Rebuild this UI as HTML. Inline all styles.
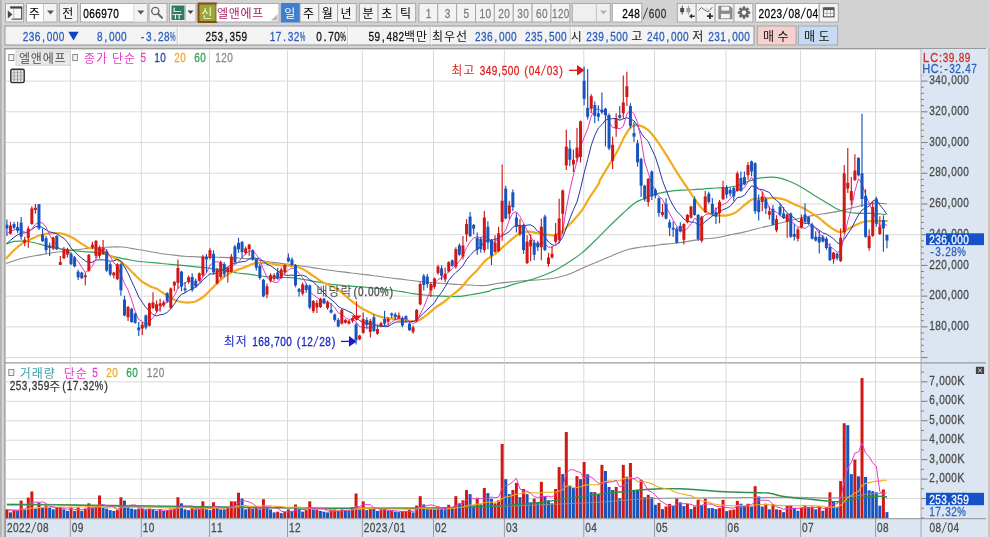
<!DOCTYPE html>
<html lang="ko"><head><meta charset="utf-8"><title>066970 chart</title>
<style>
html,body{margin:0;padding:0;background:#d2d2d2;overflow:hidden}
body{width:990px;height:537px;font-family:"Liberation Sans",sans-serif}
svg{display:block;filter:blur(0.5px);font-family:"Liberation Sans",sans-serif}
text{white-space:pre}
.k{font-family:"Liberation Sans","Noto Sans CJK KR",sans-serif;font-size:12px}
</style></head><body>
<svg width="990" height="537" viewBox="0 0 990 537">
<clipPath id="cp"><rect x="5.5" y="49" width="915.5" height="313.2"/></clipPath>
<rect x="0.00" y="0.00" width="990.00" height="537.00" fill="#d2d2d2"/>
<rect x="0.00" y="0.00" width="1.40" height="537.00" fill="#b2b2b2"/>
<rect x="5.50" y="3.50" width="18.00" height="18.50" fill="#f3f3f3" stroke="#a9a9a9" stroke-width="1"/>
<path d="M10.5 7.2h11.2v12h-10" fill="#f8f8f8" stroke="#555" stroke-width="1.3"/><path d="M10.2 7.6h11.8" stroke="#444" stroke-width="2"/><path d="M13.6 9v9.5" stroke="#c8c8c8" stroke-width="1.2"/><path d="M7.8 10.6l4.6 3.9l-4.6 3.9z" fill="#444"/>
<rect x="26.50" y="3.50" width="30.50" height="18.50" fill="#f3f3f3" stroke="#a9a9a9" stroke-width="1"/>
<rect x="27.00" y="4.00" width="16.00" height="17.50" fill="#ffffff"/>
<line x1="43.50" y1="4.00" x2="43.50" y2="21.50" stroke="#c8c8c8" stroke-width="1"/>
<text class="k" x="28.67" y="18.00" fill="#000">주</text>
<path d="M47 10.5h7l-3.5 4z" fill="#555"/>
<rect x="59.50" y="3.50" width="18.00" height="18.50" fill="#f3f3f3" stroke="#a9a9a9" stroke-width="1"/>
<text class="k" x="62.17" y="18.00" fill="#000">전</text>
<rect x="80.50" y="3.50" width="66.50" height="18.50" fill="#ffffff" stroke="#a9a9a9" stroke-width="1"/>
<text transform="translate(83.20,0) scale(0.751,1)" x="0" y="17.70" font-size="13.40" fill="#000" stroke="#000" stroke-width="0.3">0</text>
<text transform="translate(89.20,0) scale(0.751,1)" x="0" y="17.70" font-size="13.40" fill="#000" stroke="#000" stroke-width="0.3">6</text>
<text transform="translate(95.20,0) scale(0.751,1)" x="0" y="17.70" font-size="13.40" fill="#000" stroke="#000" stroke-width="0.3">6</text>
<text transform="translate(101.20,0) scale(0.751,1)" x="0" y="17.70" font-size="13.40" fill="#000" stroke="#000" stroke-width="0.3">9</text>
<text transform="translate(107.20,0) scale(0.751,1)" x="0" y="17.70" font-size="13.40" fill="#000" stroke="#000" stroke-width="0.3">7</text>
<text transform="translate(113.20,0) scale(0.751,1)" x="0" y="17.70" font-size="13.40" fill="#000" stroke="#000" stroke-width="0.3">0</text>
<line x1="134.00" y1="4.00" x2="134.00" y2="21.50" stroke="#c8c8c8" stroke-width="1"/>
<rect x="134.50" y="4.00" width="12.50" height="17.50" fill="#f3f3f3"/>
<path d="M137.3 10.5h7l-3.5 4z" fill="#555"/>
<rect x="149.00" y="3.50" width="18.00" height="18.50" fill="#f3f3f3" stroke="#a9a9a9" stroke-width="1"/>
<circle cx="155.3" cy="11" r="3.6" fill="none" stroke="#666" stroke-width="1.4"/><path d="M158 13.8l4 4" stroke="#666" stroke-width="2" stroke-linecap="round"/>
<rect x="169.50" y="3.50" width="26.50" height="18.50" fill="#f3f3f3" stroke="#a9a9a9" stroke-width="1"/>
<rect x="171.50" y="5.50" width="13.00" height="14.50" fill="#2f7d5d"/>
<text class="k" x="171.67" y="18.00" fill="#ffffff">뉴</text>
<line x1="185.50" y1="4.00" x2="185.50" y2="21.50" stroke="#c8c8c8" stroke-width="1"/>
<path d="M187.5 10.5h6l-3 3.5z" fill="#444"/>
<rect x="198.50" y="3.50" width="18.00" height="18.50" fill="#9aa63a" stroke="#8a4a12" stroke-width="2"/>
<text class="k" x="201.17" y="18.00" fill="#f4f6d8">신</text>
<rect x="217.00" y="3.50" width="62.00" height="18.50" fill="#ffffff" stroke="#a9a9a9" stroke-width="1"/>
<rect x="216.50" y="4.50" width="2.00" height="16.50" fill="#ffffff"/>
<text class="k" x="216.97 228.77 240.57 252.37" y="18.00" fill="#a01d62">엘앤에프</text>
<path d="M277.5 14v6.5h-6.5z" fill="#b8b8b8"/>
<rect x="281.30" y="3.50" width="18.75" height="18.50" fill="#3f7fcf" stroke="#3f7fcf" stroke-width="1"/>
<text class="k" x="284.37" y="18.00" fill="#ffffff">일</text>
<rect x="300.05" y="3.50" width="18.75" height="18.50" fill="#f3f3f3" stroke="#a9a9a9" stroke-width="1"/>
<text class="k" x="303.12" y="18.00" fill="#000">주</text>
<rect x="318.80" y="3.50" width="18.75" height="18.50" fill="#f3f3f3" stroke="#a9a9a9" stroke-width="1"/>
<text class="k" x="321.87" y="18.00" fill="#000">월</text>
<rect x="337.55" y="3.50" width="18.75" height="18.50" fill="#f3f3f3" stroke="#a9a9a9" stroke-width="1"/>
<text class="k" x="340.62" y="18.00" fill="#000">년</text>
<rect x="359.40" y="3.50" width="18.75" height="18.50" fill="#f3f3f3" stroke="#a9a9a9" stroke-width="1"/>
<text class="k" x="362.47" y="18.00" fill="#000">분</text>
<rect x="378.15" y="3.50" width="18.75" height="18.50" fill="#f3f3f3" stroke="#a9a9a9" stroke-width="1"/>
<text class="k" x="381.22" y="18.00" fill="#000">초</text>
<rect x="396.90" y="3.50" width="18.75" height="18.50" fill="#f3f3f3" stroke="#a9a9a9" stroke-width="1"/>
<text class="k" x="399.97" y="18.00" fill="#000">틱</text>
<rect x="418.90" y="3.50" width="18.87" height="18.50" fill="#f3f3f3" stroke="#a9a9a9" stroke-width="1"/>
<text transform="translate(425.83,0) scale(0.751,1)" x="0" y="17.70" font-size="13.40" fill="#7d7d7d" stroke="#7d7d7d" stroke-width="0.3">1</text>
<rect x="437.77" y="3.50" width="18.87" height="18.50" fill="#f3f3f3" stroke="#a9a9a9" stroke-width="1"/>
<text transform="translate(444.70,0) scale(0.751,1)" x="0" y="17.70" font-size="13.40" fill="#7d7d7d" stroke="#7d7d7d" stroke-width="0.3">3</text>
<rect x="456.64" y="3.50" width="18.87" height="18.50" fill="#f3f3f3" stroke="#a9a9a9" stroke-width="1"/>
<text transform="translate(463.57,0) scale(0.751,1)" x="0" y="17.70" font-size="13.40" fill="#7d7d7d" stroke="#7d7d7d" stroke-width="0.3">5</text>
<rect x="475.51" y="3.50" width="18.87" height="18.50" fill="#f3f3f3" stroke="#a9a9a9" stroke-width="1"/>
<text transform="translate(479.44,0) scale(0.751,1)" x="0" y="17.70" font-size="13.40" fill="#7d7d7d" stroke="#7d7d7d" stroke-width="0.3">1</text>
<text transform="translate(485.44,0) scale(0.751,1)" x="0" y="17.70" font-size="13.40" fill="#7d7d7d" stroke="#7d7d7d" stroke-width="0.3">0</text>
<rect x="494.38" y="3.50" width="18.87" height="18.50" fill="#f3f3f3" stroke="#a9a9a9" stroke-width="1"/>
<text transform="translate(498.31,0) scale(0.751,1)" x="0" y="17.70" font-size="13.40" fill="#7d7d7d" stroke="#7d7d7d" stroke-width="0.3">2</text>
<text transform="translate(504.31,0) scale(0.751,1)" x="0" y="17.70" font-size="13.40" fill="#7d7d7d" stroke="#7d7d7d" stroke-width="0.3">0</text>
<rect x="513.25" y="3.50" width="18.87" height="18.50" fill="#f3f3f3" stroke="#a9a9a9" stroke-width="1"/>
<text transform="translate(517.18,0) scale(0.751,1)" x="0" y="17.70" font-size="13.40" fill="#7d7d7d" stroke="#7d7d7d" stroke-width="0.3">3</text>
<text transform="translate(523.18,0) scale(0.751,1)" x="0" y="17.70" font-size="13.40" fill="#7d7d7d" stroke="#7d7d7d" stroke-width="0.3">0</text>
<rect x="532.12" y="3.50" width="18.87" height="18.50" fill="#f3f3f3" stroke="#a9a9a9" stroke-width="1"/>
<text transform="translate(536.05,0) scale(0.751,1)" x="0" y="17.70" font-size="13.40" fill="#7d7d7d" stroke="#7d7d7d" stroke-width="0.3">6</text>
<text transform="translate(542.05,0) scale(0.751,1)" x="0" y="17.70" font-size="13.40" fill="#7d7d7d" stroke="#7d7d7d" stroke-width="0.3">0</text>
<rect x="550.99" y="3.50" width="18.87" height="18.50" fill="#f3f3f3" stroke="#a9a9a9" stroke-width="1"/>
<text transform="translate(552.07,0) scale(0.738,1)" x="0" y="17.70" font-size="13.40" fill="#7d7d7d" stroke="#7d7d7d" stroke-width="0.3">1</text>
<text transform="translate(557.97,0) scale(0.738,1)" x="0" y="17.70" font-size="13.40" fill="#7d7d7d" stroke="#7d7d7d" stroke-width="0.3">2</text>
<text transform="translate(563.87,0) scale(0.738,1)" x="0" y="17.70" font-size="13.40" fill="#7d7d7d" stroke="#7d7d7d" stroke-width="0.3">0</text>
<rect x="572.30" y="3.50" width="38.00" height="18.50" fill="#efefef" stroke="#a9a9a9" stroke-width="1"/>
<line x1="596.30" y1="4.00" x2="596.30" y2="21.50" stroke="#c0c0c0" stroke-width="1"/>
<path d="M600 10.5h7l-3.5 4z" fill="#b4b4b4"/>
<rect x="612.30" y="3.50" width="29.50" height="18.50" fill="#ffffff" stroke="#a9a9a9" stroke-width="1"/>
<text transform="translate(622.20,0) scale(0.751,1)" x="0" y="17.70" font-size="13.40" fill="#000" stroke="#000" stroke-width="0.3">2</text>
<text transform="translate(628.20,0) scale(0.751,1)" x="0" y="17.70" font-size="13.40" fill="#000" stroke="#000" stroke-width="0.3">4</text>
<text transform="translate(634.20,0) scale(0.751,1)" x="0" y="17.70" font-size="13.40" fill="#000" stroke="#000" stroke-width="0.3">8</text>
<path d="M643.20 18.90L647.60 7.70" stroke="#333" stroke-width="0.95" fill="none"/>
<text transform="translate(648.70,0) scale(0.751,1)" x="0" y="17.70" font-size="13.40" fill="#333" stroke="#333" stroke-width="0.3">6</text>
<text transform="translate(654.70,0) scale(0.751,1)" x="0" y="17.70" font-size="13.40" fill="#333" stroke="#333" stroke-width="0.3">0</text>
<text transform="translate(660.70,0) scale(0.751,1)" x="0" y="17.70" font-size="13.40" fill="#333" stroke="#333" stroke-width="0.3">0</text>
<rect x="677.30" y="3.50" width="18.90" height="18.50" fill="#f3f3f3" stroke="#a9a9a9" stroke-width="1"/>
<rect x="696.20" y="3.50" width="18.90" height="18.50" fill="#f3f3f3" stroke="#a9a9a9" stroke-width="1"/>
<rect x="715.10" y="3.50" width="18.90" height="18.50" fill="#f3f3f3" stroke="#a9a9a9" stroke-width="1"/>
<rect x="734.00" y="3.50" width="18.90" height="18.50" fill="#f3f3f3" stroke="#a9a9a9" stroke-width="1"/>
<g stroke="none"><rect x="680.2" y="8" width="3.9" height="4.2" fill="#4a4a4a"/><rect x="681.7" y="5.6" width="1" height="9" fill="#4a4a4a"/><rect x="686.4" y="8" width="4" height="4.2" fill="#9c9c9c"/><rect x="687.9" y="5.6" width="1" height="9" fill="#9c9c9c"/><path d="M689 16.2l3.1-2.5v1.7h2.6v1.6h-2.6v1.7z" fill="#333"/></g>
<path d="M698.6 10.6L701.3 7.6L708 12L712.3 7.2" fill="none" stroke="#6a6a6a" stroke-width="1"/><path d="M705.8 7.8L711 12" fill="none" stroke="#c4c4c4" stroke-width="0.9"/><path d="M707 16.1h6M710 13.2v5.8" stroke="#333" stroke-width="1.9"/>
<g><path d="M718.3 5.7h11.4l2.8 2.6v10.9h-14.2z" fill="#8b8b8b"/><rect x="721.4" y="6.6" width="7.8" height="4" fill="#f4f4f4"/><rect x="721" y="13.9" width="8.8" height="4.4" fill="#f4f4f4"/></g>
<g fill="#666"><rect x="-1.35" y="-6.2" width="2.7" height="3" transform="translate(744.00,12.60) rotate(0.0)"/><rect x="-1.35" y="-6.2" width="2.7" height="3" transform="translate(744.00,12.60) rotate(45.0)"/><rect x="-1.35" y="-6.2" width="2.7" height="3" transform="translate(744.00,12.60) rotate(90.0)"/><rect x="-1.35" y="-6.2" width="2.7" height="3" transform="translate(744.00,12.60) rotate(135.0)"/><rect x="-1.35" y="-6.2" width="2.7" height="3" transform="translate(744.00,12.60) rotate(180.0)"/><rect x="-1.35" y="-6.2" width="2.7" height="3" transform="translate(744.00,12.60) rotate(225.0)"/><rect x="-1.35" y="-6.2" width="2.7" height="3" transform="translate(744.00,12.60) rotate(270.0)"/><rect x="-1.35" y="-6.2" width="2.7" height="3" transform="translate(744.00,12.60) rotate(315.0)"/><circle cx="744.00" cy="12.60" r="4.4"/></g><circle cx="744.00" cy="12.60" r="2.3" fill="#f4f4f4"/>
<rect x="755.60" y="3.50" width="63.50" height="18.50" fill="#ffffff" stroke="#a9a9a9" stroke-width="1"/>
<text transform="translate(758.50,0) scale(0.751,1)" x="0" y="17.70" font-size="13.40" fill="#000" stroke="#000" stroke-width="0.3">2</text>
<text transform="translate(764.50,0) scale(0.751,1)" x="0" y="17.70" font-size="13.40" fill="#000" stroke="#000" stroke-width="0.3">0</text>
<text transform="translate(770.50,0) scale(0.751,1)" x="0" y="17.70" font-size="13.40" fill="#000" stroke="#000" stroke-width="0.3">2</text>
<text transform="translate(776.50,0) scale(0.751,1)" x="0" y="17.70" font-size="13.40" fill="#000" stroke="#000" stroke-width="0.3">3</text>
<path d="M783.00 18.90L787.40 7.70" stroke="#000" stroke-width="0.95" fill="none"/>
<text transform="translate(788.50,0) scale(0.751,1)" x="0" y="17.70" font-size="13.40" fill="#000" stroke="#000" stroke-width="0.3">0</text>
<text transform="translate(794.50,0) scale(0.751,1)" x="0" y="17.70" font-size="13.40" fill="#000" stroke="#000" stroke-width="0.3">8</text>
<path d="M801.00 18.90L805.40 7.70" stroke="#000" stroke-width="0.95" fill="none"/>
<text transform="translate(806.50,0) scale(0.751,1)" x="0" y="17.70" font-size="13.40" fill="#000" stroke="#000" stroke-width="0.3">0</text>
<text transform="translate(812.50,0) scale(0.751,1)" x="0" y="17.70" font-size="13.40" fill="#000" stroke="#000" stroke-width="0.3">4</text>
<rect x="819.30" y="3.50" width="19.00" height="18.50" fill="#f3f3f3" stroke="#a9a9a9" stroke-width="1"/>
<g><rect x="823.5" y="8" width="10.5" height="8.8" fill="#fff" stroke="#555" stroke-width="1.2"/><rect x="823.5" y="7.5" width="10.5" height="2.6" fill="#555"/><path d="M827 10v7M830.5 10v7M823.5 13.3h10.5" stroke="#999" stroke-width="0.8"/></g>
<rect x="4.90" y="26.00" width="749.10" height="19.00" fill="#f3f3f3" stroke="#a2a2a2" stroke-width="1.2"/>
<line x1="177.30" y1="26.50" x2="177.30" y2="44.50" stroke="#c2c2c2" stroke-width="1"/>
<line x1="178.30" y1="26.50" x2="178.30" y2="44.50" stroke="#ffffff" stroke-width="1"/>
<line x1="347.80" y1="26.50" x2="347.80" y2="44.50" stroke="#c2c2c2" stroke-width="1"/>
<line x1="348.80" y1="26.50" x2="348.80" y2="44.50" stroke="#ffffff" stroke-width="1"/>
<line x1="430.30" y1="26.50" x2="430.30" y2="44.50" stroke="#c2c2c2" stroke-width="1"/>
<line x1="431.30" y1="26.50" x2="431.30" y2="44.50" stroke="#ffffff" stroke-width="1"/>
<line x1="570.30" y1="26.50" x2="570.30" y2="44.50" stroke="#c2c2c2" stroke-width="1"/>
<line x1="571.30" y1="26.50" x2="571.30" y2="44.50" stroke="#ffffff" stroke-width="1"/>
<text transform="translate(22.70,0) scale(0.751,1)" x="0" y="40.80" font-size="13.40" fill="#2c5cbc" stroke="#2c5cbc" stroke-width="0.3">2</text>
<text transform="translate(28.70,0) scale(0.751,1)" x="0" y="40.80" font-size="13.40" fill="#2c5cbc" stroke="#2c5cbc" stroke-width="0.3">3</text>
<text transform="translate(34.70,0) scale(0.751,1)" x="0" y="40.80" font-size="13.40" fill="#2c5cbc" stroke="#2c5cbc" stroke-width="0.3">6</text>
<text transform="translate(46.70,0) scale(0.751,1)" x="0" y="40.80" font-size="13.40" fill="#2c5cbc" stroke="#2c5cbc" stroke-width="0.3">0</text>
<text transform="translate(52.70,0) scale(0.751,1)" x="0" y="40.80" font-size="13.40" fill="#2c5cbc" stroke="#2c5cbc" stroke-width="0.3">0</text>
<text transform="translate(58.70,0) scale(0.751,1)" x="0" y="40.80" font-size="13.40" fill="#2c5cbc" stroke="#2c5cbc" stroke-width="0.3">0</text>
<text transform="scale(0.815,1)" x="51.51" y="40.80" font-size="13.40" fill="#2c5cbc" stroke="#2c5cbc" stroke-width="0.3">,</text>
<path d="M68.3 31.8h10.4l-5.2 8.6z" fill="#1142c4"/>
<text transform="translate(97.00,0) scale(0.751,1)" x="0" y="40.80" font-size="13.40" fill="#2c5cbc" stroke="#2c5cbc" stroke-width="0.3">8</text>
<text transform="translate(109.00,0) scale(0.751,1)" x="0" y="40.80" font-size="13.40" fill="#2c5cbc" stroke="#2c5cbc" stroke-width="0.3">0</text>
<text transform="translate(115.00,0) scale(0.751,1)" x="0" y="40.80" font-size="13.40" fill="#2c5cbc" stroke="#2c5cbc" stroke-width="0.3">0</text>
<text transform="translate(121.00,0) scale(0.751,1)" x="0" y="40.80" font-size="13.40" fill="#2c5cbc" stroke="#2c5cbc" stroke-width="0.3">0</text>
<text transform="scale(0.815,1)" x="127.95" y="40.80" font-size="13.40" fill="#2c5cbc" stroke="#2c5cbc" stroke-width="0.3">,</text>
<text transform="translate(145.90,0) scale(0.751,1)" x="0" y="40.80" font-size="13.40" fill="#2c5cbc" stroke="#2c5cbc" stroke-width="0.3">3</text>
<text transform="translate(157.90,0) scale(0.751,1)" x="0" y="40.80" font-size="13.40" fill="#2c5cbc" stroke="#2c5cbc" stroke-width="0.3">2</text>
<text transform="translate(163.90,0) scale(0.751,1)" x="0" y="40.80" font-size="13.40" fill="#2c5cbc" stroke="#2c5cbc" stroke-width="0.3">8</text>
<text transform="translate(169.90,0) scale(0.470,1)" x="0" y="40.80" font-size="13.40" fill="#2c5cbc" stroke="#2c5cbc" stroke-width="0.3">%</text>
<text transform="scale(0.815,1)" x="172.86 187.95" y="40.80" font-size="13.40" fill="#2c5cbc" stroke="#2c5cbc" stroke-width="0.3">-.</text>
<text transform="translate(205.50,0) scale(0.751,1)" x="0" y="40.80" font-size="13.40" fill="#111" stroke="#111" stroke-width="0.3">2</text>
<text transform="translate(211.50,0) scale(0.751,1)" x="0" y="40.80" font-size="13.40" fill="#111" stroke="#111" stroke-width="0.3">5</text>
<text transform="translate(217.50,0) scale(0.751,1)" x="0" y="40.80" font-size="13.40" fill="#111" stroke="#111" stroke-width="0.3">3</text>
<text transform="translate(229.50,0) scale(0.751,1)" x="0" y="40.80" font-size="13.40" fill="#111" stroke="#111" stroke-width="0.3">3</text>
<text transform="translate(235.50,0) scale(0.751,1)" x="0" y="40.80" font-size="13.40" fill="#111" stroke="#111" stroke-width="0.3">5</text>
<text transform="translate(241.50,0) scale(0.751,1)" x="0" y="40.80" font-size="13.40" fill="#111" stroke="#111" stroke-width="0.3">9</text>
<text transform="scale(0.815,1)" x="275.81" y="40.80" font-size="13.40" fill="#111" stroke="#111" stroke-width="0.3">,</text>
<text transform="translate(269.70,0) scale(0.751,1)" x="0" y="40.80" font-size="13.40" fill="#2c5cbc" stroke="#2c5cbc" stroke-width="0.3">1</text>
<text transform="translate(275.70,0) scale(0.751,1)" x="0" y="40.80" font-size="13.40" fill="#2c5cbc" stroke="#2c5cbc" stroke-width="0.3">7</text>
<text transform="translate(287.70,0) scale(0.751,1)" x="0" y="40.80" font-size="13.40" fill="#2c5cbc" stroke="#2c5cbc" stroke-width="0.3">3</text>
<text transform="translate(293.70,0) scale(0.751,1)" x="0" y="40.80" font-size="13.40" fill="#2c5cbc" stroke="#2c5cbc" stroke-width="0.3">2</text>
<text transform="translate(299.70,0) scale(0.470,1)" x="0" y="40.80" font-size="13.40" fill="#2c5cbc" stroke="#2c5cbc" stroke-width="0.3">%</text>
<text transform="scale(0.815,1)" x="347.22" y="40.80" font-size="13.40" fill="#2c5cbc" stroke="#2c5cbc" stroke-width="0.3">.</text>
<text transform="translate(316.20,0) scale(0.751,1)" x="0" y="40.80" font-size="13.40" fill="#111" stroke="#111" stroke-width="0.3">0</text>
<text transform="translate(328.20,0) scale(0.751,1)" x="0" y="40.80" font-size="13.40" fill="#111" stroke="#111" stroke-width="0.3">7</text>
<text transform="translate(334.20,0) scale(0.751,1)" x="0" y="40.80" font-size="13.40" fill="#111" stroke="#111" stroke-width="0.3">0</text>
<text transform="translate(340.20,0) scale(0.470,1)" x="0" y="40.80" font-size="13.40" fill="#111" stroke="#111" stroke-width="0.3">%</text>
<text transform="scale(0.815,1)" x="396.91" y="40.80" font-size="13.40" fill="#111" stroke="#111" stroke-width="0.3">.</text>
<text transform="translate(368.50,0) scale(0.751,1)" x="0" y="40.80" font-size="13.40" fill="#111" stroke="#111" stroke-width="0.3">5</text>
<text transform="translate(374.50,0) scale(0.751,1)" x="0" y="40.80" font-size="13.40" fill="#111" stroke="#111" stroke-width="0.3">9</text>
<text transform="translate(386.50,0) scale(0.751,1)" x="0" y="40.80" font-size="13.40" fill="#111" stroke="#111" stroke-width="0.3">4</text>
<text transform="translate(392.50,0) scale(0.751,1)" x="0" y="40.80" font-size="13.40" fill="#111" stroke="#111" stroke-width="0.3">8</text>
<text transform="translate(398.50,0) scale(0.751,1)" x="0" y="40.80" font-size="13.40" fill="#111" stroke="#111" stroke-width="0.3">2</text>
<text class="k" x="403.97 415.97" y="41.10" fill="#111">백만</text>
<text transform="scale(0.815,1)" x="468.45" y="40.80" font-size="13.40" fill="#111" stroke="#111" stroke-width="0.3">,</text>
<text class="k" x="431.97 443.97 455.97" y="41.10" fill="#111">최우선</text>
<text transform="translate(475.00,0) scale(0.751,1)" x="0" y="40.80" font-size="13.40" fill="#2c5cbc" stroke="#2c5cbc" stroke-width="0.3">2</text>
<text transform="translate(481.00,0) scale(0.751,1)" x="0" y="40.80" font-size="13.40" fill="#2c5cbc" stroke="#2c5cbc" stroke-width="0.3">3</text>
<text transform="translate(487.00,0) scale(0.751,1)" x="0" y="40.80" font-size="13.40" fill="#2c5cbc" stroke="#2c5cbc" stroke-width="0.3">6</text>
<text transform="translate(499.00,0) scale(0.751,1)" x="0" y="40.80" font-size="13.40" fill="#2c5cbc" stroke="#2c5cbc" stroke-width="0.3">0</text>
<text transform="translate(505.00,0) scale(0.751,1)" x="0" y="40.80" font-size="13.40" fill="#2c5cbc" stroke="#2c5cbc" stroke-width="0.3">0</text>
<text transform="translate(511.00,0) scale(0.751,1)" x="0" y="40.80" font-size="13.40" fill="#2c5cbc" stroke="#2c5cbc" stroke-width="0.3">0</text>
<text transform="scale(0.815,1)" x="606.48" y="40.80" font-size="13.40" fill="#2c5cbc" stroke="#2c5cbc" stroke-width="0.3">,</text>
<text transform="translate(525.00,0) scale(0.751,1)" x="0" y="40.80" font-size="13.40" fill="#2c5cbc" stroke="#2c5cbc" stroke-width="0.3">2</text>
<text transform="translate(531.00,0) scale(0.751,1)" x="0" y="40.80" font-size="13.40" fill="#2c5cbc" stroke="#2c5cbc" stroke-width="0.3">3</text>
<text transform="translate(537.00,0) scale(0.751,1)" x="0" y="40.80" font-size="13.40" fill="#2c5cbc" stroke="#2c5cbc" stroke-width="0.3">5</text>
<text transform="translate(549.00,0) scale(0.751,1)" x="0" y="40.80" font-size="13.40" fill="#2c5cbc" stroke="#2c5cbc" stroke-width="0.3">5</text>
<text transform="translate(555.00,0) scale(0.751,1)" x="0" y="40.80" font-size="13.40" fill="#2c5cbc" stroke="#2c5cbc" stroke-width="0.3">0</text>
<text transform="translate(561.00,0) scale(0.751,1)" x="0" y="40.80" font-size="13.40" fill="#2c5cbc" stroke="#2c5cbc" stroke-width="0.3">0</text>
<text transform="scale(0.815,1)" x="667.83" y="40.80" font-size="13.40" fill="#2c5cbc" stroke="#2c5cbc" stroke-width="0.3">,</text>
<text class="k" x="570.67" y="41.10" fill="#111">시</text>
<text transform="translate(586.20,0) scale(0.751,1)" x="0" y="40.80" font-size="13.40" fill="#2c5cbc" stroke="#2c5cbc" stroke-width="0.3">2</text>
<text transform="translate(592.20,0) scale(0.751,1)" x="0" y="40.80" font-size="13.40" fill="#2c5cbc" stroke="#2c5cbc" stroke-width="0.3">3</text>
<text transform="translate(598.20,0) scale(0.751,1)" x="0" y="40.80" font-size="13.40" fill="#2c5cbc" stroke="#2c5cbc" stroke-width="0.3">9</text>
<text transform="translate(610.20,0) scale(0.751,1)" x="0" y="40.80" font-size="13.40" fill="#2c5cbc" stroke="#2c5cbc" stroke-width="0.3">5</text>
<text transform="translate(616.20,0) scale(0.751,1)" x="0" y="40.80" font-size="13.40" fill="#2c5cbc" stroke="#2c5cbc" stroke-width="0.3">0</text>
<text transform="translate(622.20,0) scale(0.751,1)" x="0" y="40.80" font-size="13.40" fill="#2c5cbc" stroke="#2c5cbc" stroke-width="0.3">0</text>
<text transform="scale(0.815,1)" x="742.92" y="40.80" font-size="13.40" fill="#2c5cbc" stroke="#2c5cbc" stroke-width="0.3">,</text>
<text class="k" x="631.17" y="41.10" fill="#111">고</text>
<text transform="translate(647.00,0) scale(0.751,1)" x="0" y="40.80" font-size="13.40" fill="#2c5cbc" stroke="#2c5cbc" stroke-width="0.3">2</text>
<text transform="translate(653.00,0) scale(0.751,1)" x="0" y="40.80" font-size="13.40" fill="#2c5cbc" stroke="#2c5cbc" stroke-width="0.3">4</text>
<text transform="translate(659.00,0) scale(0.751,1)" x="0" y="40.80" font-size="13.40" fill="#2c5cbc" stroke="#2c5cbc" stroke-width="0.3">0</text>
<text transform="translate(671.00,0) scale(0.751,1)" x="0" y="40.80" font-size="13.40" fill="#2c5cbc" stroke="#2c5cbc" stroke-width="0.3">0</text>
<text transform="translate(677.00,0) scale(0.751,1)" x="0" y="40.80" font-size="13.40" fill="#2c5cbc" stroke="#2c5cbc" stroke-width="0.3">0</text>
<text transform="translate(683.00,0) scale(0.751,1)" x="0" y="40.80" font-size="13.40" fill="#2c5cbc" stroke="#2c5cbc" stroke-width="0.3">0</text>
<text transform="scale(0.815,1)" x="817.53" y="40.80" font-size="13.40" fill="#2c5cbc" stroke="#2c5cbc" stroke-width="0.3">,</text>
<text class="k" x="692.17" y="41.10" fill="#111">저</text>
<text transform="translate(708.20,0) scale(0.751,1)" x="0" y="40.80" font-size="13.40" fill="#2c5cbc" stroke="#2c5cbc" stroke-width="0.3">2</text>
<text transform="translate(714.20,0) scale(0.751,1)" x="0" y="40.80" font-size="13.40" fill="#2c5cbc" stroke="#2c5cbc" stroke-width="0.3">3</text>
<text transform="translate(720.20,0) scale(0.751,1)" x="0" y="40.80" font-size="13.40" fill="#2c5cbc" stroke="#2c5cbc" stroke-width="0.3">1</text>
<text transform="translate(732.20,0) scale(0.751,1)" x="0" y="40.80" font-size="13.40" fill="#2c5cbc" stroke="#2c5cbc" stroke-width="0.3">0</text>
<text transform="translate(738.20,0) scale(0.751,1)" x="0" y="40.80" font-size="13.40" fill="#2c5cbc" stroke="#2c5cbc" stroke-width="0.3">0</text>
<text transform="translate(744.20,0) scale(0.751,1)" x="0" y="40.80" font-size="13.40" fill="#2c5cbc" stroke="#2c5cbc" stroke-width="0.3">0</text>
<text transform="scale(0.815,1)" x="892.62" y="40.80" font-size="13.40" fill="#2c5cbc" stroke="#2c5cbc" stroke-width="0.3">,</text>
<rect x="757.30" y="26.00" width="38.80" height="19.00" fill="#f5d0ce" stroke="#b0a0a0" stroke-width="1"/>
<text class="k" x="762.97 777.47" y="41.10" fill="#111">매수</text>
<rect x="798.40" y="26.00" width="39.30" height="19.00" fill="#c6dbf2" stroke="#9aa8b8" stroke-width="1"/>
<text class="k" x="803.97 818.47" y="41.10" fill="#111">매도</text>
<rect x="4.90" y="48.70" width="981.10" height="492.00" fill="#ffffff" stroke="#969696" stroke-width="1.3"/>
<rect x="921.00" y="49.00" width="65.00" height="491.00" fill="#dce6f2"/>
<rect x="5.00" y="518.00" width="981.00" height="22.00" fill="#dce6f2"/>
<line x1="5.00" y1="362.90" x2="986.00" y2="362.90" stroke="#9a9a9a" stroke-width="1.4"/>
<line x1="921.00" y1="49.00" x2="921.00" y2="540.00" stroke="#a6a6a6" stroke-width="1"/>
<line x1="5.00" y1="518.70" x2="986.00" y2="518.70" stroke="#a2a2a2" stroke-width="1.2"/>
<rect x="986.00" y="48.00" width="2.00" height="537.00" fill="#e4e4e4"/>
<rect x="988.00" y="48.00" width="2.00" height="537.00" fill="#c6c6c6"/>
<line x1="5.50" y1="357.58" x2="921.00" y2="357.58" stroke="#d9d9d9" stroke-width="1"/>
<line x1="5.50" y1="326.86" x2="921.00" y2="326.86" stroke="#d9d9d9" stroke-width="1"/>
<line x1="5.50" y1="296.14" x2="921.00" y2="296.14" stroke="#d9d9d9" stroke-width="1"/>
<line x1="5.50" y1="265.42" x2="921.00" y2="265.42" stroke="#d9d9d9" stroke-width="1"/>
<line x1="5.50" y1="234.70" x2="921.00" y2="234.70" stroke="#d9d9d9" stroke-width="1"/>
<line x1="5.50" y1="203.98" x2="921.00" y2="203.98" stroke="#d9d9d9" stroke-width="1"/>
<line x1="5.50" y1="173.26" x2="921.00" y2="173.26" stroke="#d9d9d9" stroke-width="1"/>
<line x1="5.50" y1="142.54" x2="921.00" y2="142.54" stroke="#d9d9d9" stroke-width="1"/>
<line x1="5.50" y1="111.82" x2="921.00" y2="111.82" stroke="#d9d9d9" stroke-width="1"/>
<line x1="5.50" y1="81.10" x2="921.00" y2="81.10" stroke="#d9d9d9" stroke-width="1"/>
<line x1="5.50" y1="498.55" x2="921.00" y2="498.55" stroke="#d9d9d9" stroke-width="1"/>
<line x1="5.50" y1="479.10" x2="921.00" y2="479.10" stroke="#d9d9d9" stroke-width="1"/>
<line x1="5.50" y1="459.65" x2="921.00" y2="459.65" stroke="#d9d9d9" stroke-width="1"/>
<line x1="5.50" y1="440.20" x2="921.00" y2="440.20" stroke="#d9d9d9" stroke-width="1"/>
<line x1="5.50" y1="420.75" x2="921.00" y2="420.75" stroke="#d9d9d9" stroke-width="1"/>
<line x1="5.50" y1="401.30" x2="921.00" y2="401.30" stroke="#d9d9d9" stroke-width="1"/>
<line x1="5.50" y1="381.85" x2="921.00" y2="381.85" stroke="#d9d9d9" stroke-width="1"/>
<line x1="70.30" y1="49.00" x2="70.30" y2="362.30" stroke="#d9d9d9" stroke-width="1"/>
<line x1="70.30" y1="363.60" x2="70.30" y2="518.00" stroke="#d9d9d9" stroke-width="1"/>
<line x1="70.30" y1="518.00" x2="70.30" y2="540.00" stroke="#9a9a9a" stroke-width="1"/>
<line x1="141.30" y1="49.00" x2="141.30" y2="362.30" stroke="#d9d9d9" stroke-width="1"/>
<line x1="141.30" y1="363.60" x2="141.30" y2="518.00" stroke="#d9d9d9" stroke-width="1"/>
<line x1="141.30" y1="518.00" x2="141.30" y2="540.00" stroke="#9a9a9a" stroke-width="1"/>
<line x1="209.50" y1="49.00" x2="209.50" y2="362.30" stroke="#d9d9d9" stroke-width="1"/>
<line x1="209.50" y1="363.60" x2="209.50" y2="518.00" stroke="#d9d9d9" stroke-width="1"/>
<line x1="209.50" y1="518.00" x2="209.50" y2="540.00" stroke="#9a9a9a" stroke-width="1"/>
<line x1="287.50" y1="49.00" x2="287.50" y2="362.30" stroke="#d9d9d9" stroke-width="1"/>
<line x1="287.50" y1="363.60" x2="287.50" y2="518.00" stroke="#d9d9d9" stroke-width="1"/>
<line x1="287.50" y1="518.00" x2="287.50" y2="540.00" stroke="#9a9a9a" stroke-width="1"/>
<line x1="362.30" y1="49.00" x2="362.30" y2="362.30" stroke="#d9d9d9" stroke-width="1"/>
<line x1="362.30" y1="363.60" x2="362.30" y2="518.00" stroke="#d9d9d9" stroke-width="1"/>
<line x1="362.30" y1="518.00" x2="362.30" y2="540.00" stroke="#9a9a9a" stroke-width="1"/>
<line x1="433.50" y1="49.00" x2="433.50" y2="362.30" stroke="#d9d9d9" stroke-width="1"/>
<line x1="433.50" y1="363.60" x2="433.50" y2="518.00" stroke="#d9d9d9" stroke-width="1"/>
<line x1="433.50" y1="518.00" x2="433.50" y2="540.00" stroke="#9a9a9a" stroke-width="1"/>
<line x1="504.40" y1="49.00" x2="504.40" y2="362.30" stroke="#d9d9d9" stroke-width="1"/>
<line x1="504.40" y1="363.60" x2="504.40" y2="518.00" stroke="#d9d9d9" stroke-width="1"/>
<line x1="504.40" y1="518.00" x2="504.40" y2="540.00" stroke="#9a9a9a" stroke-width="1"/>
<line x1="583.80" y1="49.00" x2="583.80" y2="362.30" stroke="#d9d9d9" stroke-width="1"/>
<line x1="583.80" y1="363.60" x2="583.80" y2="518.00" stroke="#d9d9d9" stroke-width="1"/>
<line x1="583.80" y1="518.00" x2="583.80" y2="540.00" stroke="#9a9a9a" stroke-width="1"/>
<line x1="654.50" y1="49.00" x2="654.50" y2="362.30" stroke="#d9d9d9" stroke-width="1"/>
<line x1="654.50" y1="363.60" x2="654.50" y2="518.00" stroke="#d9d9d9" stroke-width="1"/>
<line x1="654.50" y1="518.00" x2="654.50" y2="540.00" stroke="#9a9a9a" stroke-width="1"/>
<line x1="726.00" y1="49.00" x2="726.00" y2="362.30" stroke="#d9d9d9" stroke-width="1"/>
<line x1="726.00" y1="363.60" x2="726.00" y2="518.00" stroke="#d9d9d9" stroke-width="1"/>
<line x1="726.00" y1="518.00" x2="726.00" y2="540.00" stroke="#9a9a9a" stroke-width="1"/>
<line x1="800.60" y1="49.00" x2="800.60" y2="362.30" stroke="#d9d9d9" stroke-width="1"/>
<line x1="800.60" y1="363.60" x2="800.60" y2="518.00" stroke="#d9d9d9" stroke-width="1"/>
<line x1="800.60" y1="518.00" x2="800.60" y2="540.00" stroke="#9a9a9a" stroke-width="1"/>
<line x1="875.60" y1="49.00" x2="875.60" y2="362.30" stroke="#d9d9d9" stroke-width="1"/>
<line x1="875.60" y1="363.60" x2="875.60" y2="518.00" stroke="#d9d9d9" stroke-width="1"/>
<line x1="875.60" y1="518.00" x2="875.60" y2="540.00" stroke="#9a9a9a" stroke-width="1"/>
<line x1="5.50" y1="518.00" x2="5.50" y2="540.00" stroke="#9a9a9a" stroke-width="1"/>
<!--CHART-->
<g clip-path="url(#cp)">
<path d="M6.1 263.5 C7.4 263.0 11.3 261.6 14.0 260.7 C16.7 259.8 19.6 258.9 22.3 258.2 C25.1 257.5 27.9 257.0 30.7 256.5 C33.5 256.0 36.3 255.6 39.1 255.1 C41.9 254.6 44.7 254.2 47.5 253.7 C50.3 253.2 53.1 252.7 55.9 252.3 C58.7 251.9 61.5 251.6 64.2 251.2 C67.0 250.8 69.8 250.4 72.6 250.1 C75.4 249.7 78.2 249.5 81.0 249.2 C83.8 249.0 86.6 248.6 89.4 248.4 C92.2 248.2 95.0 248.0 97.8 247.8 C100.6 247.6 103.4 247.5 106.1 247.3 C108.9 247.1 111.7 246.8 114.5 246.7 C117.3 246.7 120.1 246.7 122.9 247.0 C125.7 247.3 128.5 247.9 131.3 248.4 C134.1 248.9 136.4 249.2 139.7 249.8 C142.9 250.3 147.1 251.1 150.8 251.7 C154.6 252.4 158.3 253.1 162.0 253.7 C165.7 254.3 169.5 254.7 173.2 255.1 C176.9 255.5 180.6 255.9 184.4 256.2 C188.1 256.5 191.8 256.6 195.5 256.8 C199.3 257.0 203.0 257.2 206.7 257.3 C210.4 257.4 214.2 257.3 217.9 257.3 C221.6 257.4 225.8 257.5 229.1 257.6 C232.3 257.7 235.6 257.8 237.4 257.9 C239.3 258.0 237.7 257.9 240.0 258.2 C242.3 258.4 247.4 258.9 251.2 259.3 C254.9 259.7 258.6 260.2 262.3 260.7 C266.1 261.2 269.8 261.8 273.5 262.4 C277.2 262.9 281.0 263.3 284.7 263.8 C288.4 264.2 292.1 264.6 295.9 265.2 C299.6 265.7 303.3 266.3 307.0 266.8 C310.8 267.4 314.5 267.9 318.2 268.5 C321.9 269.1 325.7 269.7 329.4 270.2 C333.1 270.7 336.8 271.1 340.6 271.6 C344.3 272.0 348.0 272.5 351.7 273.0 C355.5 273.4 359.2 273.9 362.9 274.4 C366.6 274.8 370.4 275.3 374.1 275.8 C377.8 276.2 381.5 276.7 385.3 277.2 C389.0 277.6 392.7 278.1 396.4 278.6 C400.1 279.0 403.9 279.5 407.6 280.0 C411.3 280.4 415.0 280.9 418.8 281.4 C422.5 281.8 426.2 282.1 429.9 282.5 C433.7 282.8 437.4 283.0 441.1 283.3 C444.8 283.6 448.6 283.9 452.3 284.1 C456.0 284.4 459.7 284.5 463.5 284.7 C467.2 284.9 470.9 285.1 474.6 285.3 C478.4 285.4 481.9 285.9 485.8 285.5 C489.7 285.2 493.6 283.9 497.9 283.3 C502.3 282.7 507.2 282.4 511.9 281.9 C516.6 281.4 521.2 280.9 525.9 280.5 C530.5 280.1 535.2 280.1 539.8 279.7 C544.5 279.3 550.1 278.8 553.8 278.3 C557.5 277.7 559.4 277.1 562.2 276.3 C565.0 275.5 567.8 274.6 570.6 273.5 C573.4 272.5 576.1 271.2 578.9 269.9 C581.7 268.6 584.5 267.2 587.3 266.0 C590.1 264.7 592.9 263.5 595.7 262.4 C598.5 261.2 601.3 260.2 604.1 259.0 C606.9 257.8 609.7 256.5 612.5 255.4 C615.3 254.2 618.0 253.0 620.8 252.0 C623.6 251.0 626.4 250.0 629.2 249.2 C632.0 248.5 634.8 248.0 637.6 247.6 C640.4 247.1 643.2 246.8 646.0 246.4 C648.8 246.1 652.0 245.9 654.4 245.6 C656.7 245.3 656.7 245.1 660.0 244.7 C663.3 244.3 669.3 243.9 674.0 243.3 C678.6 242.8 683.3 242.1 687.9 241.4 C692.6 240.7 697.2 239.7 701.9 239.1 C706.6 238.5 711.2 238.4 715.9 237.7 C720.5 237.0 725.2 235.9 729.8 234.9 C734.5 234.0 739.1 233.2 743.8 232.1 C748.5 231.1 753.1 229.7 757.8 228.5 C762.4 227.3 767.1 226.3 771.7 225.2 C776.4 224.0 781.0 223.0 785.7 221.8 C790.4 220.6 795.0 219.2 799.7 218.2 C804.3 217.1 809.0 216.2 813.6 215.4 C818.3 214.5 822.9 213.9 827.6 213.1 C832.3 212.4 836.9 211.7 841.6 210.6 C846.2 209.6 851.8 207.9 855.5 207.0 C859.3 206.1 861.1 205.7 863.9 205.0 C866.7 204.4 869.5 203.7 872.3 203.4 C875.1 203.1 878.2 203.3 880.7 203.4 C883.1 203.4 885.8 203.6 886.8 203.7" fill="none" stroke="#8c8c8c" stroke-width="1.1" stroke-linejoin="round" opacity="1"/>
<path d="M6.1 243.9 C7.4 243.5 11.3 241.9 14.0 241.4 C16.7 240.9 19.6 241.0 22.3 241.1 C25.1 241.2 27.9 241.5 30.7 242.0 C33.5 242.4 36.3 243.2 39.1 243.9 C41.9 244.6 44.7 245.5 47.5 246.2 C50.3 246.9 53.1 247.6 55.9 248.1 C58.7 248.7 61.5 249.1 64.2 249.5 C67.0 249.9 69.4 250.0 72.6 250.3 C75.9 250.7 80.1 251.4 83.8 251.7 C87.5 252.1 91.2 251.8 95.0 252.3 C98.7 252.8 102.4 253.7 106.1 254.5 C109.9 255.4 113.6 256.5 117.3 257.3 C121.0 258.2 124.8 258.9 128.5 259.6 C132.2 260.3 135.9 261.1 139.7 261.5 C143.4 262.0 147.1 262.0 150.8 262.4 C154.6 262.7 158.3 263.1 162.0 263.5 C165.7 263.8 169.5 264.2 173.2 264.6 C176.9 265.0 180.6 265.3 184.4 265.7 C188.1 266.1 191.8 266.5 195.5 266.8 C199.3 267.2 203.0 267.5 206.7 267.9 C210.4 268.4 214.2 268.8 217.9 269.3 C221.6 269.9 225.8 270.7 229.1 271.3 C232.3 271.9 234.2 272.5 237.4 273.0 C240.7 273.4 245.2 273.7 248.4 274.1 C251.6 274.5 253.5 275.0 256.8 275.5 C260.0 276.0 264.2 276.6 267.9 276.9 C271.7 277.2 275.4 277.3 279.1 277.4 C282.8 277.6 286.6 277.4 290.3 277.7 C294.0 278.0 297.7 278.6 301.5 279.1 C305.2 279.7 308.9 280.4 312.6 281.1 C316.4 281.7 320.1 282.4 323.8 283.0 C327.5 283.6 331.2 284.2 335.0 284.7 C338.7 285.2 342.4 285.5 346.1 285.8 C349.9 286.1 353.6 286.4 357.3 286.7 C361.0 286.9 364.8 287.2 368.5 287.5 C372.2 287.8 375.9 288.2 379.7 288.6 C383.4 289.0 387.1 289.5 390.8 290.0 C394.6 290.5 398.3 291.1 402.0 291.7 C405.7 292.3 409.5 293.1 413.2 293.6 C416.9 294.2 420.6 294.7 424.4 295.0 C428.1 295.4 431.8 295.6 435.5 295.9 C439.3 296.1 443.0 296.3 446.7 296.4 C450.4 296.5 454.2 296.7 457.9 296.4 C461.6 296.2 465.3 295.6 469.1 295.0 C472.8 294.5 476.7 293.8 480.2 293.1 C483.7 292.4 488.0 291.5 490.0 290.9 C492.0 290.2 490.1 290.0 492.3 289.5 C494.6 288.9 499.8 288.4 503.5 287.5 C507.2 286.6 511.0 284.9 514.7 283.9 C518.4 282.8 522.1 282.1 525.9 281.1 C529.6 280.1 533.3 279.0 537.0 277.7 C540.8 276.5 544.5 275.2 548.2 273.5 C551.9 271.9 555.7 270.0 559.4 267.9 C563.1 265.9 566.8 263.4 570.6 261.0 C574.3 258.5 578.0 256.2 581.7 253.1 C585.5 250.1 589.2 246.4 592.9 242.8 C596.6 239.2 600.4 235.4 604.1 231.6 C607.8 227.9 611.5 224.0 615.3 220.5 C619.0 216.9 623.2 213.1 626.4 210.1 C629.7 207.2 632.0 204.7 634.8 202.9 C637.6 201.0 640.4 200.2 643.2 199.0 C646.0 197.7 648.8 196.3 651.6 195.3 C654.4 194.3 656.7 193.8 659.9 193.1 C663.2 192.4 667.4 191.6 671.2 191.1 C674.9 190.6 678.6 190.5 682.3 190.2 C686.1 190.0 689.8 189.9 693.5 189.7 C697.2 189.5 701.0 189.1 704.7 188.8 C708.4 188.6 712.1 188.2 715.9 188.0 C719.6 187.8 723.3 187.9 727.0 187.5 C730.8 187.0 735.0 186.4 738.2 185.5 C741.5 184.6 743.8 182.9 746.6 181.9 C749.4 180.8 752.2 179.8 755.0 179.1 C757.8 178.4 760.6 178.0 763.4 177.7 C766.1 177.3 768.9 177.0 771.7 177.1 C774.5 177.2 777.3 177.6 780.1 178.2 C782.9 178.9 785.7 180.0 788.5 181.0 C791.3 182.1 794.1 183.3 796.9 184.7 C799.7 186.1 802.5 187.7 805.3 189.4 C808.0 191.1 810.8 193.2 813.6 195.0 C816.4 196.8 819.2 198.3 822.0 200.0 C824.8 201.7 827.6 203.4 830.4 205.0 C833.2 206.7 836.0 208.6 838.8 209.8 C841.6 211.0 844.4 211.5 847.2 212.0 C849.9 212.6 852.7 212.9 855.5 213.1 C858.3 213.4 861.1 213.4 863.9 213.4 C866.7 213.5 869.5 213.3 872.3 213.4 C875.1 213.5 878.3 213.8 880.7 214.0 C883.0 214.2 885.3 214.5 886.3 214.5" fill="none" stroke="#2fa35a" stroke-width="1.2" stroke-linejoin="round" opacity="1"/>
<path d="M6.1 258.7 C7.4 257.3 11.3 252.9 14.0 250.3 C16.7 247.8 19.6 245.2 22.3 243.4 C25.1 241.5 27.9 240.5 30.7 239.2 C33.5 237.9 36.3 236.5 39.1 235.5 C41.9 234.6 44.7 234.0 47.5 233.6 C50.3 233.2 53.1 232.9 55.9 233.0 C58.7 233.1 61.5 233.4 64.2 234.1 C67.0 234.9 69.8 236.2 72.6 237.8 C75.4 239.3 78.2 241.6 81.0 243.4 C83.8 245.1 87.1 247.4 89.4 248.1 C91.7 248.8 92.9 247.0 95.0 247.6 C97.1 248.1 99.6 249.9 102.0 251.2 C104.3 252.4 106.4 253.7 108.9 255.1 C111.5 256.5 114.5 257.8 117.3 259.6 C120.1 261.3 122.9 263.3 125.7 265.7 C128.5 268.1 131.3 271.4 134.1 274.1 C136.9 276.8 139.7 279.8 142.5 281.9 C145.3 284.0 148.5 285.5 150.8 286.7 C153.2 287.8 154.6 287.7 156.4 288.6 C158.3 289.5 159.7 290.7 162.0 292.2 C164.3 293.8 167.6 296.3 170.4 297.8 C173.2 299.4 176.0 300.7 178.8 301.5 C181.6 302.3 184.4 302.6 187.2 302.6 C189.9 302.6 192.7 302.5 195.5 301.5 C198.3 300.4 201.1 298.7 203.9 296.4 C206.7 294.2 209.5 290.9 212.3 288.1 C215.1 285.3 217.9 282.1 220.7 279.7 C223.5 277.3 226.3 275.2 229.1 273.5 C231.8 271.9 234.7 271.0 237.4 269.9 C240.2 268.8 242.8 268.2 245.6 267.1 C248.3 266.0 251.2 264.2 254.0 263.5 C256.8 262.8 259.6 262.9 262.3 262.9 C265.1 262.9 267.9 263.1 270.7 263.5 C273.5 263.8 276.3 264.8 279.1 265.2 C281.9 265.5 284.7 265.5 287.5 265.7 C290.3 265.9 293.1 265.6 295.9 266.3 C298.7 267.0 301.5 268.4 304.2 269.9 C307.0 271.4 309.8 273.6 312.6 275.5 C315.4 277.3 318.2 279.4 321.0 281.1 C323.8 282.7 326.6 283.9 329.4 285.3 C332.2 286.7 335.0 287.6 337.8 289.5 C340.6 291.3 343.4 294.1 346.1 296.4 C348.9 298.8 351.7 301.3 354.5 303.4 C357.3 305.5 360.1 307.4 362.9 309.0 C365.7 310.6 368.5 311.9 371.3 313.2 C374.1 314.5 376.9 315.7 379.7 316.5 C382.5 317.4 385.3 317.8 388.0 318.2 C390.8 318.7 393.6 319.0 396.4 319.3 C399.2 319.7 402.0 319.9 404.8 320.2 C407.6 320.5 410.9 321.0 413.2 321.0 C415.5 321.0 416.4 321.3 418.8 320.2 C421.1 319.1 424.4 316.7 427.2 314.6 C429.9 312.5 432.7 309.7 435.5 307.6 C438.3 305.5 441.1 304.1 443.9 302.0 C446.7 299.9 449.5 297.4 452.3 295.0 C455.1 292.7 457.9 290.9 460.7 288.1 C463.5 285.3 466.3 281.3 469.1 278.3 C471.8 275.3 474.6 272.9 477.4 269.9 C480.2 266.9 482.9 262.8 485.8 260.1 C488.8 257.5 492.2 256.3 495.1 254.0 C498.1 251.7 500.7 248.9 503.5 246.4 C506.3 244.0 509.1 241.4 511.9 239.2 C514.7 236.9 517.5 234.3 520.3 233.0 C523.1 231.8 525.9 231.6 528.7 231.6 C531.5 231.6 534.2 232.6 537.0 233.0 C539.8 233.5 542.6 234.1 545.4 234.4 C548.2 234.8 551.5 235.5 553.8 235.3 C556.1 235.0 557.5 234.1 559.4 233.0 C561.2 232.0 562.6 230.9 565.0 228.8 C567.3 226.7 570.6 223.5 573.4 220.5 C576.1 217.4 578.9 214.6 581.7 210.7 C584.5 206.7 587.3 201.1 590.1 196.7 C592.9 192.3 596.8 187.0 598.5 184.1 C600.2 181.3 598.4 182.9 600.1 179.9 C601.8 176.8 605.7 170.6 608.5 165.9 C611.3 161.2 614.1 157.1 616.9 151.9 C619.7 146.8 622.7 139.5 625.3 135.2 C627.8 130.9 629.9 127.9 632.2 126.2 C634.6 124.6 636.7 124.8 639.2 125.4 C641.8 126.0 644.8 127.3 647.6 129.6 C650.4 131.9 653.2 135.6 656.0 139.4 C658.8 143.1 662.3 148.8 664.4 151.9 C666.4 155.1 666.3 154.8 668.4 158.1 C670.4 161.5 674.0 167.7 676.8 172.1 C679.6 176.5 682.3 180.5 685.1 184.7 C687.9 188.8 690.7 193.3 693.5 197.2 C696.3 201.2 699.1 205.6 701.9 208.4 C704.7 211.2 707.5 212.8 710.3 214.0 C713.1 215.2 715.9 215.2 718.7 215.4 C721.5 215.6 724.2 215.8 727.0 215.4 C729.8 214.9 732.6 214.2 735.4 212.6 C738.2 211.0 741.0 207.8 743.8 205.6 C746.6 203.4 749.4 200.6 752.2 199.5 C755.0 198.3 757.8 198.9 760.6 198.6 C763.4 198.4 766.1 198.2 768.9 198.1 C771.7 198.0 774.5 197.7 777.3 198.1 C780.1 198.4 782.9 199.0 785.7 200.0 C788.5 201.0 791.3 202.9 794.1 204.2 C796.9 205.5 799.7 206.4 802.5 207.8 C805.3 209.2 808.0 210.9 810.8 212.6 C813.6 214.3 816.4 216.1 819.2 218.2 C822.0 220.3 824.8 223.1 827.6 225.2 C830.4 227.3 833.6 229.6 836.0 230.7 C838.3 231.9 839.7 232.4 841.6 232.1 C843.4 231.9 844.8 230.5 847.2 229.4 C849.5 228.2 852.7 226.4 855.5 225.2 C858.3 223.9 861.1 222.5 863.9 221.8 C866.7 221.1 869.5 221.1 872.3 221.0 C875.1 220.8 878.1 221.0 880.7 221.0 C883.2 221.0 886.5 221.0 887.7 221.0" fill="none" stroke="#f2ab1c" stroke-width="2.2" stroke-linejoin="round" opacity="1"/>
<path d="M6.9 243.5 L10.5 240.2 L14.0 237.3 L17.6 234.8 L21.2 232.9 L24.7 232.9 L28.3 232.0 L31.8 229.4 L35.4 226.8 L39.0 226.2 L42.5 227.5 L46.1 229.9 L49.7 231.9 L53.2 232.6 L56.8 233.9 L60.3 236.1 L63.9 238.2 L67.5 242.3 L71.0 247.9 L74.6 251.7 L78.2 255.3 L81.7 258.1 L85.3 260.9 L88.8 262.6 L92.4 262.2 L96.0 260.0 L99.5 259.9 L103.1 259.8 L106.7 260.4 L110.2 261.2 L113.8 260.8 L117.4 259.4 L120.9 260.9 L124.5 266.9 L128.0 273.1 L131.6 281.2 L135.2 288.8 L138.7 297.0 L142.3 302.4 L145.9 307.7 L149.4 310.8 L153.0 314.6 L156.5 316.0 L160.1 314.8 L163.7 314.3 L167.2 312.3 L170.8 308.8 L174.4 304.0 L177.9 298.3 L181.5 294.2 L185.1 292.9 L188.6 290.4 L192.2 288.9 L195.7 287.2 L199.3 284.3 L202.9 279.9 L206.4 277.0 L210.0 273.8 L213.6 274.2 L217.1 272.5 L220.7 269.7 L224.2 269.4 L227.8 267.2 L231.4 264.3 L234.9 263.2 L238.5 262.4 L242.1 261.7 L245.6 261.5 L249.2 258.7 L252.7 257.7 L256.3 258.3 L259.9 258.6 L263.4 261.5 L267.0 264.4 L270.6 265.7 L274.1 268.3 L277.7 271.0 L281.3 273.1 L284.8 275.2 L288.4 275.4 L291.9 275.1 L295.5 275.8 L299.1 275.4 L302.6 275.2 L306.2 276.6 L309.8 279.9 L313.3 282.1 L316.9 285.4 L320.4 288.8 L324.0 293.0 L327.6 296.8 L331.1 299.5 L334.7 302.3 L338.3 306.5 L341.8 308.5 L345.4 309.7 L348.9 311.7 L352.5 313.2 L356.1 317.4 L359.6 320.6 L363.2 322.2 L366.8 323.5 L370.3 323.6 L373.9 324.0 L377.5 326.0 L381.0 326.3 L384.6 326.6 L388.1 326.6 L391.7 324.2 L395.3 322.3 L398.8 321.9 L402.4 322.0 L406.0 321.8 L409.5 321.7 L413.1 321.5 L416.6 320.2 L420.2 316.3 L423.8 312.9 L427.3 309.7 L430.9 306.4 L434.5 302.7 L438.0 296.8 L441.6 292.5 L445.1 286.9 L448.7 280.4 L452.3 276.0 L455.8 272.5 L459.4 269.5 L463.0 265.6 L466.5 259.6 L470.1 255.4 L473.7 251.6 L477.2 249.0 L480.8 246.5 L484.3 242.1 L487.9 239.7 L491.5 240.4 L495.0 239.2 L498.6 238.0 L502.2 235.6 L505.7 233.9 L509.3 231.5 L512.8 227.3 L516.4 225.0 L520.0 225.8 L523.5 226.5 L527.1 225.1 L530.7 224.8 L534.2 227.0 L537.8 231.6 L541.4 232.5 L544.9 236.9 L548.5 242.0 L552.0 244.7 L555.6 245.6 L559.2 242.4 L562.7 237.3 L566.3 228.0 L569.9 218.5 L573.4 209.8 L577.0 201.8 L580.5 189.0 L584.1 173.1 L587.7 159.4 L591.2 145.6 L594.8 135.3 L598.4 128.0 L601.9 124.6 L605.5 120.1 L609.0 118.9 L612.6 118.7 L616.2 118.4 L619.7 120.3 L623.3 118.8 L626.9 117.8 L630.4 118.8 L634.0 120.8 L637.6 125.8 L641.1 132.9 L644.7 138.0 L648.2 141.4 L651.8 149.2 L655.4 156.9 L658.9 168.0 L662.5 180.6 L666.1 189.9 L669.6 199.0 L673.2 205.7 L676.7 211.4 L680.3 214.6 L683.9 219.1 L687.4 221.0 L691.0 222.1 L694.6 222.3 L698.1 224.9 L701.7 224.8 L705.2 221.6 L708.8 218.8 L712.4 216.0 L715.9 214.5 L719.5 212.3 L723.1 209.5 L726.6 208.3 L730.2 206.2 L733.8 202.0 L737.3 197.6 L740.9 197.1 L744.4 195.3 L748.0 190.4 L751.6 185.9 L755.1 186.8 L758.7 189.3 L762.3 189.5 L765.8 191.0 L769.4 192.5 L772.9 197.6 L776.5 200.4 L780.1 203.4 L783.6 208.7 L787.2 213.0 L790.8 215.6 L794.3 218.0 L797.9 221.3 L801.4 222.3 L805.0 223.4 L808.6 223.2 L812.1 225.1 L815.7 227.8 L819.3 230.2 L822.8 232.9 L826.4 234.0 L830.0 236.3 L833.5 238.7 L837.1 242.7 L840.6 244.3 L844.2 239.3 L847.8 233.7 L851.3 228.8 L854.9 221.6 L858.5 215.0 L862.0 210.1 L865.6 207.8 L869.1 206.1 L872.7 201.0 L876.3 199.6 L879.8 204.9 L883.4 209.4 L887.0 214.4" fill="none" stroke="#2338a8" stroke-width="1.0" stroke-linejoin="round" opacity="1"/>
<path d="M6.9 233.7 L10.5 231.4 L14.0 230.0 L17.6 229.3 L21.2 229.9 L24.7 232.1 L28.3 232.7 L31.8 228.8 L35.4 224.2 L39.0 222.6 L42.5 222.9 L46.1 227.2 L49.7 235.1 L53.2 241.0 L56.8 245.2 L60.3 249.3 L63.9 249.2 L67.5 249.5 L71.0 254.8 L74.6 258.2 L78.2 261.3 L81.7 267.1 L85.3 272.3 L88.8 270.4 L92.4 266.1 L96.0 258.8 L99.5 252.7 L103.1 247.3 L106.7 250.4 L110.2 256.4 L113.8 262.7 L117.4 266.1 L120.9 274.5 L124.5 283.4 L128.0 289.9 L131.6 299.8 L135.2 311.5 L138.7 319.5 L142.3 321.4 L145.9 325.5 L149.4 321.8 L153.0 317.7 L156.5 312.4 L160.1 308.2 L163.7 303.1 L167.2 302.8 L170.8 300.0 L174.4 295.5 L177.9 288.4 L181.5 285.3 L185.1 283.0 L188.6 280.8 L192.2 282.4 L195.7 286.1 L199.3 283.4 L202.9 276.7 L206.4 273.1 L210.0 265.2 L213.6 262.4 L217.1 261.7 L220.7 262.8 L224.2 265.7 L227.8 269.3 L231.4 266.1 L234.9 264.6 L238.5 262.0 L242.1 257.6 L245.6 253.7 L249.2 251.3 L252.7 250.8 L256.3 254.5 L259.9 259.6 L263.4 269.3 L267.0 277.6 L270.6 280.7 L274.1 282.2 L277.7 282.4 L281.3 277.0 L284.8 272.8 L288.4 270.0 L291.9 268.0 L295.5 269.3 L299.1 273.7 L302.6 277.6 L306.2 283.3 L309.8 291.8 L313.3 294.9 L316.9 297.2 L320.4 300.0 L324.0 302.7 L327.6 301.7 L331.1 304.0 L334.7 307.4 L338.3 312.9 L341.8 314.2 L345.4 317.7 L348.9 319.4 L352.5 319.0 L356.1 321.8 L359.6 326.9 L363.2 326.8 L366.8 327.6 L370.3 328.1 L373.9 326.3 L377.5 325.0 L381.0 325.8 L384.6 325.5 L388.1 325.2 L391.7 322.0 L395.3 319.6 L398.8 318.1 L402.4 318.5 L406.0 318.5 L409.5 321.4 L413.1 323.4 L416.6 322.3 L420.2 314.0 L423.8 307.2 L427.3 298.0 L430.9 289.4 L434.5 283.1 L438.0 279.6 L441.6 277.8 L445.1 275.7 L448.7 271.4 L452.3 268.9 L455.8 265.4 L459.4 261.2 L463.0 255.5 L466.5 247.8 L470.1 241.9 L473.7 237.8 L477.2 236.9 L480.8 237.6 L484.3 236.3 L487.9 237.6 L491.5 243.0 L495.0 241.5 L498.6 238.3 L502.2 235.0 L505.7 230.1 L509.3 220.1 L512.8 213.0 L516.4 211.7 L520.0 216.6 L523.5 222.9 L527.1 230.1 L530.7 236.7 L534.2 242.3 L537.8 246.7 L541.4 242.1 L544.9 243.7 L548.5 247.3 L552.0 247.1 L555.6 244.5 L559.2 242.8 L562.7 230.9 L566.3 208.7 L569.9 189.9 L573.4 175.0 L577.0 160.9 L580.5 147.0 L584.1 137.5 L587.7 128.9 L591.2 116.2 L594.8 109.8 L598.4 108.9 L601.9 111.6 L605.5 111.3 L609.0 121.7 L612.6 127.5 L616.2 127.8 L619.7 128.9 L623.3 126.4 L626.9 114.0 L630.4 110.2 L634.0 113.8 L637.6 122.7 L641.1 139.4 L644.7 162.0 L648.2 172.6 L651.8 184.5 L655.4 191.2 L658.9 196.6 L662.5 199.2 L666.1 207.1 L669.6 213.4 L673.2 220.2 L676.7 226.1 L680.3 230.0 L683.9 231.1 L687.4 228.5 L691.0 223.9 L694.6 218.4 L698.1 219.9 L701.7 218.4 L705.2 214.7 L708.8 213.8 L712.4 213.6 L715.9 209.2 L719.5 206.2 L723.1 204.4 L726.6 202.9 L730.2 198.8 L733.8 194.8 L737.3 189.1 L740.9 189.8 L744.4 187.8 L748.0 182.0 L751.6 177.1 L755.1 184.6 L758.7 188.9 L762.3 191.3 L765.8 199.9 L769.4 207.9 L772.9 210.6 L776.5 212.0 L780.1 215.6 L783.6 217.5 L787.2 218.1 L790.8 220.6 L794.3 224.1 L797.9 227.1 L801.4 227.1 L805.0 228.6 L808.6 225.8 L812.1 226.2 L815.7 228.4 L819.3 233.3 L822.8 237.2 L826.4 242.2 L830.0 246.5 L833.5 248.9 L837.1 252.1 L840.6 251.4 L844.2 236.4 L847.8 221.0 L851.3 208.7 L854.9 191.1 L858.5 178.6 L862.0 183.8 L865.6 194.6 L869.1 203.5 L872.7 210.8 L876.3 220.5 L879.8 226.0 L883.4 224.3 L887.0 225.2" fill="none" stroke="#e23bc4" stroke-width="1.0" stroke-linejoin="round" opacity="1"/>
<path d="M6.90 219.60V235.94" stroke="#1854bd" stroke-width="1.15"/>
<rect x="5.40" y="224.80" width="3.00" height="3.71" fill="#1854bd"/>
<path d="M10.46 221.83V234.46" stroke="#d11815" stroke-width="1.15"/>
<rect x="8.96" y="225.54" width="3.00" height="8.17" fill="#d11815"/>
<path d="M14.03 221.83V229.26" stroke="#1854bd" stroke-width="1.15"/>
<rect x="12.53" y="224.06" width="3.00" height="3.71" fill="#1854bd"/>
<path d="M17.59 221.83V232.97" stroke="#1854bd" stroke-width="1.15"/>
<rect x="16.09" y="227.03" width="3.00" height="3.71" fill="#1854bd"/>
<path d="M21.15 217.07V239.66" stroke="#1854bd" stroke-width="1.15"/>
<rect x="19.65" y="222.57" width="3.00" height="14.12" fill="#1854bd"/>
<path d="M24.72 236.69V246.34" stroke="#d11815" stroke-width="1.15"/>
<rect x="23.22" y="239.66" width="3.00" height="2.97" fill="#d11815"/>
<path d="M28.28 226.29V247.83" stroke="#d11815" stroke-width="1.15"/>
<rect x="26.78" y="228.51" width="3.00" height="9.66" fill="#d11815"/>
<path d="M31.84 206.23V224.80" stroke="#d11815" stroke-width="1.15"/>
<rect x="30.34" y="208.45" width="3.00" height="15.60" fill="#d11815"/>
<path d="M35.40 204.00V213.66" stroke="#d11815" stroke-width="1.15"/>
<rect x="33.90" y="207.71" width="3.00" height="2.23" fill="#d11815"/>
<path d="M38.97 204.00V230.00" stroke="#1854bd" stroke-width="1.15"/>
<rect x="37.47" y="204.29" width="3.00" height="24.22" fill="#1854bd"/>
<path d="M42.53 228.51V241.89" stroke="#1854bd" stroke-width="1.15"/>
<rect x="41.03" y="234.46" width="3.00" height="6.69" fill="#1854bd"/>
<path d="M46.09 235.94V253.77" stroke="#1854bd" stroke-width="1.15"/>
<rect x="44.59" y="238.17" width="3.00" height="11.89" fill="#1854bd"/>
<path d="M49.66 242.63V256.00" stroke="#1854bd" stroke-width="1.15"/>
<rect x="48.16" y="245.60" width="3.00" height="2.23" fill="#1854bd"/>
<path d="M53.22 236.69V250.06" stroke="#d11815" stroke-width="1.15"/>
<rect x="51.72" y="237.43" width="3.00" height="11.14" fill="#d11815"/>
<path d="M56.78 235.20V250.06" stroke="#1854bd" stroke-width="1.15"/>
<rect x="55.28" y="235.94" width="3.00" height="13.37" fill="#1854bd"/>
<path d="M60.34 256.00V264.92" stroke="#d11815" stroke-width="1.15"/>
<rect x="58.84" y="261.95" width="3.00" height="2.97" fill="#d11815"/>
<path d="M63.91 247.09V258.97" stroke="#d11815" stroke-width="1.15"/>
<rect x="62.41" y="249.32" width="3.00" height="8.92" fill="#d11815"/>
<path d="M67.47 247.83V257.49" stroke="#d11815" stroke-width="1.15"/>
<rect x="65.97" y="249.32" width="3.00" height="5.20" fill="#d11815"/>
<path d="M71.03 252.29V264.92" stroke="#1854bd" stroke-width="1.15"/>
<rect x="69.53" y="253.77" width="3.00" height="10.40" fill="#1854bd"/>
<path d="M74.60 256.00V267.15" stroke="#1854bd" stroke-width="1.15"/>
<rect x="73.10" y="257.49" width="3.00" height="8.92" fill="#1854bd"/>
<path d="M78.16 269.80V280.04" stroke="#1854bd" stroke-width="1.15"/>
<rect x="76.66" y="271.66" width="3.00" height="5.59" fill="#1854bd"/>
<path d="M81.72 271.66V279.11" stroke="#1854bd" stroke-width="1.15"/>
<rect x="80.22" y="272.59" width="3.00" height="5.59" fill="#1854bd"/>
<path d="M85.29 272.59V285.62" stroke="#d11815" stroke-width="1.15"/>
<rect x="83.79" y="275.38" width="3.00" height="1.86" fill="#d11815"/>
<path d="M88.85 253.97V271.66" stroke="#d11815" stroke-width="1.15"/>
<rect x="87.35" y="254.90" width="3.00" height="15.83" fill="#d11815"/>
<path d="M92.41 241.86V249.31" stroke="#d11815" stroke-width="1.15"/>
<rect x="90.91" y="244.66" width="3.00" height="2.79" fill="#d11815"/>
<path d="M95.98 240.00V258.62" stroke="#d11815" stroke-width="1.15"/>
<rect x="94.48" y="240.93" width="3.00" height="14.90" fill="#d11815"/>
<path d="M99.54 245.59V258.62" stroke="#d11815" stroke-width="1.15"/>
<rect x="98.04" y="247.45" width="3.00" height="8.38" fill="#d11815"/>
<path d="M103.10 240.00V254.90" stroke="#d11815" stroke-width="1.15"/>
<rect x="101.60" y="248.38" width="3.00" height="5.59" fill="#d11815"/>
<path d="M106.66 249.31V271.66" stroke="#1854bd" stroke-width="1.15"/>
<rect x="105.16" y="251.17" width="3.00" height="19.55" fill="#1854bd"/>
<path d="M110.23 262.35V276.31" stroke="#1854bd" stroke-width="1.15"/>
<rect x="108.73" y="264.21" width="3.00" height="10.24" fill="#1854bd"/>
<path d="M113.79 271.66V278.18" stroke="#d11815" stroke-width="1.15"/>
<rect x="112.29" y="272.59" width="3.00" height="2.79" fill="#d11815"/>
<path d="M117.35 263.28V280.04" stroke="#d11815" stroke-width="1.15"/>
<rect x="115.85" y="264.21" width="3.00" height="14.90" fill="#d11815"/>
<path d="M120.92 263.28V295.87" stroke="#1854bd" stroke-width="1.15"/>
<rect x="119.42" y="264.21" width="3.00" height="26.07" fill="#1854bd"/>
<path d="M124.48 295.87V316.35" stroke="#1854bd" stroke-width="1.15"/>
<rect x="122.98" y="299.59" width="3.00" height="15.83" fill="#1854bd"/>
<path d="M128.04 306.11V321.01" stroke="#d11815" stroke-width="1.15"/>
<rect x="126.54" y="307.04" width="3.00" height="10.24" fill="#d11815"/>
<path d="M131.61 307.97V322.87" stroke="#1854bd" stroke-width="1.15"/>
<rect x="130.11" y="308.90" width="3.00" height="13.04" fill="#1854bd"/>
<path d="M135.17 312.63V323.80" stroke="#1854bd" stroke-width="1.15"/>
<rect x="133.67" y="313.56" width="3.00" height="9.31" fill="#1854bd"/>
<path d="M138.73 321.94V335.90" stroke="#1854bd" stroke-width="1.15"/>
<rect x="137.23" y="327.52" width="3.00" height="2.79" fill="#1854bd"/>
<path d="M142.29 321.94V334.97" stroke="#d11815" stroke-width="1.15"/>
<rect x="140.79" y="324.73" width="3.00" height="3.72" fill="#d11815"/>
<path d="M145.86 314.49V329.39" stroke="#1854bd" stroke-width="1.15"/>
<rect x="144.36" y="315.42" width="3.00" height="12.10" fill="#1854bd"/>
<path d="M149.42 302.38V326.59" stroke="#d11815" stroke-width="1.15"/>
<rect x="147.92" y="303.31" width="3.00" height="22.35" fill="#d11815"/>
<path d="M152.98 292.14V308.90" stroke="#d11815" stroke-width="1.15"/>
<rect x="151.48" y="302.38" width="3.00" height="5.59" fill="#d11815"/>
<path d="M156.55 300.52V312.63" stroke="#d11815" stroke-width="1.15"/>
<rect x="155.05" y="304.25" width="3.00" height="6.52" fill="#d11815"/>
<path d="M160.11 298.66V311.69" stroke="#d11815" stroke-width="1.15"/>
<rect x="158.61" y="303.31" width="3.00" height="2.79" fill="#d11815"/>
<path d="M163.67 300.52V307.04" stroke="#d11815" stroke-width="1.15"/>
<rect x="162.17" y="302.38" width="3.00" height="2.79" fill="#d11815"/>
<path d="M167.24 292.14V302.38" stroke="#1854bd" stroke-width="1.15"/>
<rect x="165.74" y="293.07" width="3.00" height="8.38" fill="#1854bd"/>
<path d="M170.80 287.49V308.90" stroke="#d11815" stroke-width="1.15"/>
<rect x="169.30" y="288.42" width="3.00" height="19.55" fill="#d11815"/>
<path d="M174.36 280.97V291.21" stroke="#d11815" stroke-width="1.15"/>
<rect x="172.86" y="281.90" width="3.00" height="3.72" fill="#d11815"/>
<path d="M177.92 259.55V288.42" stroke="#d11815" stroke-width="1.15"/>
<rect x="176.42" y="267.93" width="3.00" height="14.90" fill="#d11815"/>
<path d="M181.49 270.73V291.21" stroke="#1854bd" stroke-width="1.15"/>
<rect x="179.99" y="271.66" width="3.00" height="14.90" fill="#1854bd"/>
<path d="M185.05 281.90V293.07" stroke="#1854bd" stroke-width="1.15"/>
<rect x="183.55" y="288.42" width="3.00" height="1.86" fill="#1854bd"/>
<path d="M188.61 275.38V283.76" stroke="#d11815" stroke-width="1.15"/>
<rect x="187.11" y="277.24" width="3.00" height="4.66" fill="#d11815"/>
<path d="M192.18 273.32V291.80" stroke="#1854bd" stroke-width="1.15"/>
<rect x="190.68" y="277.01" width="3.00" height="12.94" fill="#1854bd"/>
<path d="M195.74 278.86V288.10" stroke="#1854bd" stroke-width="1.15"/>
<rect x="194.24" y="280.71" width="3.00" height="5.55" fill="#1854bd"/>
<path d="M199.30 272.39V281.63" stroke="#d11815" stroke-width="1.15"/>
<rect x="197.80" y="273.32" width="3.00" height="7.39" fill="#d11815"/>
<path d="M202.87 254.83V277.01" stroke="#d11815" stroke-width="1.15"/>
<rect x="201.37" y="256.68" width="3.00" height="18.48" fill="#d11815"/>
<path d="M206.43 253.91V272.39" stroke="#1854bd" stroke-width="1.15"/>
<rect x="204.93" y="256.68" width="3.00" height="2.77" fill="#1854bd"/>
<path d="M209.99 248.36V259.45" stroke="#d11815" stroke-width="1.15"/>
<rect x="208.49" y="250.21" width="3.00" height="7.39" fill="#d11815"/>
<path d="M213.55 250.21V274.24" stroke="#1854bd" stroke-width="1.15"/>
<rect x="212.05" y="253.91" width="3.00" height="18.48" fill="#1854bd"/>
<path d="M217.12 267.77V284.41" stroke="#d11815" stroke-width="1.15"/>
<rect x="215.62" y="269.62" width="3.00" height="13.86" fill="#d11815"/>
<path d="M220.68 260.38V278.86" stroke="#d11815" stroke-width="1.15"/>
<rect x="219.18" y="262.23" width="3.00" height="14.79" fill="#d11815"/>
<path d="M224.24 262.23V277.01" stroke="#1854bd" stroke-width="1.15"/>
<rect x="222.74" y="264.07" width="3.00" height="10.17" fill="#1854bd"/>
<path d="M227.81 266.85V282.56" stroke="#d11815" stroke-width="1.15"/>
<rect x="226.31" y="267.77" width="3.00" height="4.62" fill="#d11815"/>
<path d="M231.37 253.91V272.39" stroke="#d11815" stroke-width="1.15"/>
<rect x="229.87" y="256.68" width="3.00" height="14.79" fill="#d11815"/>
<path d="M234.93 244.67V263.15" stroke="#1854bd" stroke-width="1.15"/>
<rect x="233.43" y="246.51" width="3.00" height="15.71" fill="#1854bd"/>
<path d="M238.50 237.64V252.98" stroke="#1854bd" stroke-width="1.15"/>
<rect x="237.00" y="242.82" width="3.00" height="6.47" fill="#1854bd"/>
<path d="M242.06 240.97V258.53" stroke="#1854bd" stroke-width="1.15"/>
<rect x="240.56" y="241.89" width="3.00" height="10.17" fill="#1854bd"/>
<path d="M245.62 246.51V254.83" stroke="#d11815" stroke-width="1.15"/>
<rect x="244.12" y="248.36" width="3.00" height="4.62" fill="#d11815"/>
<path d="M249.18 243.74V255.76" stroke="#d11815" stroke-width="1.15"/>
<rect x="247.68" y="244.67" width="3.00" height="4.62" fill="#d11815"/>
<path d="M252.75 249.29V260.38" stroke="#1854bd" stroke-width="1.15"/>
<rect x="251.25" y="250.21" width="3.00" height="9.24" fill="#1854bd"/>
<path d="M256.31 258.53V270.54" stroke="#1854bd" stroke-width="1.15"/>
<rect x="254.81" y="259.45" width="3.00" height="8.32" fill="#1854bd"/>
<path d="M259.87 264.07V279.79" stroke="#1854bd" stroke-width="1.15"/>
<rect x="258.37" y="265.92" width="3.00" height="12.01" fill="#1854bd"/>
<path d="M263.44 278.86V297.35" stroke="#1854bd" stroke-width="1.15"/>
<rect x="261.94" y="279.79" width="3.00" height="16.64" fill="#1854bd"/>
<path d="M267.00 283.48V298.27" stroke="#d11815" stroke-width="1.15"/>
<rect x="265.50" y="286.26" width="3.00" height="8.32" fill="#d11815"/>
<path d="M270.56 273.32V282.56" stroke="#d11815" stroke-width="1.15"/>
<rect x="269.06" y="275.17" width="3.00" height="5.55" fill="#d11815"/>
<path d="M274.12 273.32V280.71" stroke="#d11815" stroke-width="1.15"/>
<rect x="272.62" y="275.17" width="3.00" height="3.70" fill="#d11815"/>
<path d="M277.69 267.77V279.79" stroke="#1854bd" stroke-width="1.15"/>
<rect x="276.19" y="272.39" width="3.00" height="6.47" fill="#1854bd"/>
<path d="M281.25 267.77V278.86" stroke="#d11815" stroke-width="1.15"/>
<rect x="279.75" y="269.62" width="3.00" height="8.32" fill="#d11815"/>
<path d="M284.81 264.07V274.24" stroke="#d11815" stroke-width="1.15"/>
<rect x="283.31" y="265.00" width="3.00" height="7.39" fill="#d11815"/>
<path d="M288.38 253.54V262.23" stroke="#1854bd" stroke-width="1.15"/>
<rect x="286.88" y="257.61" width="3.00" height="3.70" fill="#1854bd"/>
<path d="M291.94 257.61V265.92" stroke="#1854bd" stroke-width="1.15"/>
<rect x="290.44" y="259.45" width="3.00" height="5.55" fill="#1854bd"/>
<path d="M295.50 264.07V287.18" stroke="#1854bd" stroke-width="1.15"/>
<rect x="294.00" y="265.00" width="3.00" height="20.33" fill="#1854bd"/>
<path d="M299.07 288.10V296.42" stroke="#1854bd" stroke-width="1.15"/>
<rect x="297.57" y="289.03" width="3.00" height="2.77" fill="#1854bd"/>
<path d="M302.63 282.56V295.50" stroke="#d11815" stroke-width="1.15"/>
<rect x="301.13" y="284.41" width="3.00" height="9.24" fill="#d11815"/>
<path d="M306.19 283.48V292.73" stroke="#1854bd" stroke-width="1.15"/>
<rect x="304.69" y="285.33" width="3.00" height="4.62" fill="#1854bd"/>
<path d="M309.75 284.41V309.36" stroke="#1854bd" stroke-width="1.15"/>
<rect x="308.25" y="285.33" width="3.00" height="22.18" fill="#1854bd"/>
<path d="M313.32 300.12V313.06" stroke="#d11815" stroke-width="1.15"/>
<rect x="311.82" y="301.04" width="3.00" height="10.17" fill="#d11815"/>
<path d="M316.88 300.12V313.06" stroke="#d11815" stroke-width="1.15"/>
<rect x="315.38" y="302.89" width="3.00" height="4.62" fill="#d11815"/>
<path d="M320.44 297.84V307.97" stroke="#d11815" stroke-width="1.15"/>
<rect x="318.94" y="298.76" width="3.00" height="8.29" fill="#d11815"/>
<path d="M324.01 297.84V304.29" stroke="#1854bd" stroke-width="1.15"/>
<rect x="322.51" y="298.76" width="3.00" height="4.60" fill="#1854bd"/>
<path d="M327.57 300.60V309.81" stroke="#d11815" stroke-width="1.15"/>
<rect x="326.07" y="302.45" width="3.00" height="5.52" fill="#d11815"/>
<path d="M331.13 303.37V313.50" stroke="#1854bd" stroke-width="1.15"/>
<rect x="329.63" y="309.81" width="3.00" height="2.76" fill="#1854bd"/>
<path d="M334.70 313.50V321.78" stroke="#1854bd" stroke-width="1.15"/>
<rect x="333.20" y="314.42" width="3.00" height="5.52" fill="#1854bd"/>
<path d="M338.26 318.10V327.31" stroke="#1854bd" stroke-width="1.15"/>
<rect x="336.76" y="319.94" width="3.00" height="6.45" fill="#1854bd"/>
<path d="M341.82 308.89V324.55" stroke="#d11815" stroke-width="1.15"/>
<rect x="340.32" y="309.81" width="3.00" height="13.81" fill="#d11815"/>
<path d="M345.38 319.02V323.62" stroke="#d11815" stroke-width="1.15"/>
<rect x="343.88" y="319.94" width="3.00" height="2.76" fill="#d11815"/>
<path d="M348.95 319.94V324.55" stroke="#d11815" stroke-width="1.15"/>
<rect x="347.45" y="320.86" width="3.00" height="2.76" fill="#d11815"/>
<path d="M352.51 317.18V322.70" stroke="#d11815" stroke-width="1.15"/>
<rect x="351.01" y="318.10" width="3.00" height="2.76" fill="#d11815"/>
<path d="M356.07 322.70V344.43" stroke="#1854bd" stroke-width="1.15"/>
<rect x="354.57" y="324.55" width="3.00" height="15.65" fill="#1854bd"/>
<path d="M359.64 334.67V340.20" stroke="#d11815" stroke-width="1.15"/>
<rect x="358.14" y="335.59" width="3.00" height="3.68" fill="#d11815"/>
<path d="M363.20 312.57V333.75" stroke="#d11815" stroke-width="1.15"/>
<rect x="361.70" y="319.02" width="3.00" height="13.81" fill="#d11815"/>
<path d="M366.76 317.18V329.15" stroke="#1854bd" stroke-width="1.15"/>
<rect x="365.26" y="319.94" width="3.00" height="4.97" fill="#1854bd"/>
<path d="M370.33 319.02V337.44" stroke="#d11815" stroke-width="1.15"/>
<rect x="368.83" y="320.86" width="3.00" height="11.05" fill="#d11815"/>
<path d="M373.89 314.42V331.91" stroke="#1854bd" stroke-width="1.15"/>
<rect x="372.39" y="317.18" width="3.00" height="13.81" fill="#1854bd"/>
<path d="M377.45 324.55V334.67" stroke="#d11815" stroke-width="1.15"/>
<rect x="375.95" y="329.15" width="3.00" height="4.60" fill="#d11815"/>
<path d="M381.01 321.78V327.31" stroke="#d11815" stroke-width="1.15"/>
<rect x="379.51" y="323.07" width="3.00" height="2.95" fill="#d11815"/>
<path d="M384.58 310.73V326.39" stroke="#1854bd" stroke-width="1.15"/>
<rect x="383.08" y="319.02" width="3.00" height="4.60" fill="#1854bd"/>
<path d="M388.14 317.18V325.47" stroke="#d11815" stroke-width="1.15"/>
<rect x="386.64" y="319.02" width="3.00" height="2.76" fill="#d11815"/>
<path d="M391.70 312.57V318.10" stroke="#1854bd" stroke-width="1.15"/>
<rect x="390.20" y="313.50" width="3.00" height="1.84" fill="#1854bd"/>
<path d="M395.27 312.57V319.94" stroke="#1854bd" stroke-width="1.15"/>
<rect x="393.77" y="314.42" width="3.00" height="2.76" fill="#1854bd"/>
<path d="M398.83 312.57V319.02" stroke="#d11815" stroke-width="1.15"/>
<rect x="397.33" y="315.34" width="3.00" height="2.76" fill="#d11815"/>
<path d="M402.39 316.26V327.31" stroke="#1854bd" stroke-width="1.15"/>
<rect x="400.89" y="318.10" width="3.00" height="7.37" fill="#1854bd"/>
<path d="M405.96 315.34V322.70" stroke="#1854bd" stroke-width="1.15"/>
<rect x="404.46" y="316.26" width="3.00" height="2.76" fill="#1854bd"/>
<path d="M409.52 321.78V330.99" stroke="#1854bd" stroke-width="1.15"/>
<rect x="408.02" y="323.62" width="3.00" height="6.45" fill="#1854bd"/>
<path d="M413.08 325.47V333.75" stroke="#d11815" stroke-width="1.15"/>
<rect x="411.58" y="327.31" width="3.00" height="4.60" fill="#d11815"/>
<path d="M416.64 308.89V321.78" stroke="#d11815" stroke-width="1.15"/>
<rect x="415.14" y="309.81" width="3.00" height="11.05" fill="#d11815"/>
<path d="M420.21 282.19V305.21" stroke="#d11815" stroke-width="1.15"/>
<rect x="418.71" y="284.03" width="3.00" height="20.26" fill="#d11815"/>
<path d="M423.77 273.90V290.48" stroke="#1854bd" stroke-width="1.15"/>
<rect x="422.27" y="275.74" width="3.00" height="9.21" fill="#1854bd"/>
<path d="M427.33 273.90V287.71" stroke="#1854bd" stroke-width="1.15"/>
<rect x="425.83" y="276.66" width="3.00" height="7.37" fill="#1854bd"/>
<path d="M430.90 282.19V296.92" stroke="#d11815" stroke-width="1.15"/>
<rect x="429.40" y="284.03" width="3.00" height="6.45" fill="#d11815"/>
<path d="M434.46 277.58V288.63" stroke="#d11815" stroke-width="1.15"/>
<rect x="432.96" y="278.50" width="3.00" height="8.29" fill="#d11815"/>
<path d="M438.02 264.69V274.82" stroke="#d11815" stroke-width="1.15"/>
<rect x="436.52" y="266.53" width="3.00" height="6.45" fill="#d11815"/>
<path d="M441.59 265.61V280.35" stroke="#1854bd" stroke-width="1.15"/>
<rect x="440.09" y="268.38" width="3.00" height="7.37" fill="#1854bd"/>
<path d="M445.15 267.45V282.19" stroke="#d11815" stroke-width="1.15"/>
<rect x="443.65" y="273.90" width="3.00" height="5.52" fill="#d11815"/>
<path d="M448.71 261.25V272.42" stroke="#d11815" stroke-width="1.15"/>
<rect x="447.21" y="262.18" width="3.00" height="9.31" fill="#d11815"/>
<path d="M452.27 259.39V266.83" stroke="#1854bd" stroke-width="1.15"/>
<rect x="450.77" y="260.32" width="3.00" height="5.59" fill="#1854bd"/>
<path d="M455.84 247.28V268.70" stroke="#d11815" stroke-width="1.15"/>
<rect x="454.34" y="249.14" width="3.00" height="17.69" fill="#d11815"/>
<path d="M459.40 243.56V255.66" stroke="#1854bd" stroke-width="1.15"/>
<rect x="457.90" y="245.42" width="3.00" height="9.31" fill="#1854bd"/>
<path d="M462.96 236.11V259.39" stroke="#d11815" stroke-width="1.15"/>
<rect x="461.46" y="245.42" width="3.00" height="11.17" fill="#d11815"/>
<path d="M466.53 219.35V241.69" stroke="#d11815" stroke-width="1.15"/>
<rect x="465.03" y="224.00" width="3.00" height="10.24" fill="#d11815"/>
<path d="M470.09 211.90V237.04" stroke="#1854bd" stroke-width="1.15"/>
<rect x="468.59" y="216.55" width="3.00" height="19.55" fill="#1854bd"/>
<path d="M473.65 224.00V234.25" stroke="#1854bd" stroke-width="1.15"/>
<rect x="472.15" y="224.93" width="3.00" height="3.72" fill="#1854bd"/>
<path d="M477.22 232.38V254.73" stroke="#1854bd" stroke-width="1.15"/>
<rect x="475.72" y="237.97" width="3.00" height="12.10" fill="#1854bd"/>
<path d="M480.78 237.04V252.87" stroke="#1854bd" stroke-width="1.15"/>
<rect x="479.28" y="238.90" width="3.00" height="10.24" fill="#1854bd"/>
<path d="M484.34 210.97V252.87" stroke="#d11815" stroke-width="1.15"/>
<rect x="482.84" y="217.49" width="3.00" height="32.59" fill="#d11815"/>
<path d="M487.90 221.21V249.14" stroke="#1854bd" stroke-width="1.15"/>
<rect x="486.40" y="226.80" width="3.00" height="15.83" fill="#1854bd"/>
<path d="M491.47 238.90V264.97" stroke="#1854bd" stroke-width="1.15"/>
<rect x="489.97" y="239.83" width="3.00" height="15.83" fill="#1854bd"/>
<path d="M495.03 235.18V252.87" stroke="#d11815" stroke-width="1.15"/>
<rect x="493.53" y="242.63" width="3.00" height="9.31" fill="#d11815"/>
<path d="M498.59 226.80V251.94" stroke="#d11815" stroke-width="1.15"/>
<rect x="497.09" y="233.31" width="3.00" height="17.69" fill="#d11815"/>
<path d="M502.16 164.41V240.76" stroke="#d11815" stroke-width="1.15"/>
<rect x="500.66" y="200.73" width="3.00" height="21.42" fill="#d11815"/>
<path d="M505.72 185.83V219.35" stroke="#1854bd" stroke-width="1.15"/>
<rect x="504.22" y="188.62" width="3.00" height="29.80" fill="#1854bd"/>
<path d="M509.28 200.73V219.35" stroke="#d11815" stroke-width="1.15"/>
<rect x="507.78" y="205.38" width="3.00" height="8.38" fill="#d11815"/>
<path d="M512.85 189.55V210.97" stroke="#1854bd" stroke-width="1.15"/>
<rect x="511.35" y="192.35" width="3.00" height="14.90" fill="#1854bd"/>
<path d="M516.41 212.83V232.38" stroke="#1854bd" stroke-width="1.15"/>
<rect x="514.91" y="217.49" width="3.00" height="9.31" fill="#1854bd"/>
<path d="M519.97 219.35V236.11" stroke="#d11815" stroke-width="1.15"/>
<rect x="518.47" y="224.93" width="3.00" height="9.31" fill="#d11815"/>
<path d="M523.53 224.00V253.80" stroke="#1854bd" stroke-width="1.15"/>
<rect x="522.03" y="224.93" width="3.00" height="25.14" fill="#1854bd"/>
<path d="M527.10 235.18V264.04" stroke="#d11815" stroke-width="1.15"/>
<rect x="525.60" y="241.69" width="3.00" height="21.42" fill="#d11815"/>
<path d="M530.66 234.25V261.25" stroke="#d11815" stroke-width="1.15"/>
<rect x="529.16" y="239.83" width="3.00" height="6.52" fill="#d11815"/>
<path d="M534.22 239.83V260.32" stroke="#1854bd" stroke-width="1.15"/>
<rect x="532.72" y="242.63" width="3.00" height="12.10" fill="#1854bd"/>
<path d="M537.79 240.76V251.01" stroke="#1854bd" stroke-width="1.15"/>
<rect x="536.29" y="242.63" width="3.00" height="4.66" fill="#1854bd"/>
<path d="M541.35 218.42V260.32" stroke="#d11815" stroke-width="1.15"/>
<rect x="539.85" y="226.80" width="3.00" height="20.48" fill="#d11815"/>
<path d="M544.91 214.69V251.01" stroke="#1854bd" stroke-width="1.15"/>
<rect x="543.41" y="216.55" width="3.00" height="33.52" fill="#1854bd"/>
<path d="M548.48 252.87V266.83" stroke="#d11815" stroke-width="1.15"/>
<rect x="546.98" y="257.52" width="3.00" height="6.52" fill="#d11815"/>
<path d="M552.04 246.35V258.45" stroke="#d11815" stroke-width="1.15"/>
<rect x="550.54" y="253.80" width="3.00" height="3.72" fill="#d11815"/>
<path d="M555.60 223.07V243.56" stroke="#d11815" stroke-width="1.15"/>
<rect x="554.10" y="234.25" width="3.00" height="7.45" fill="#d11815"/>
<path d="M559.16 198.86V243.56" stroke="#d11815" stroke-width="1.15"/>
<rect x="557.66" y="218.42" width="3.00" height="21.42" fill="#d11815"/>
<path d="M562.73 189.55V234.25" stroke="#d11815" stroke-width="1.15"/>
<rect x="561.23" y="190.48" width="3.00" height="23.28" fill="#d11815"/>
<path d="M566.29 129.79V170.12" stroke="#d11815" stroke-width="1.15"/>
<rect x="564.79" y="146.67" width="3.00" height="18.76" fill="#d11815"/>
<path d="M569.85 140.11V166.37" stroke="#1854bd" stroke-width="1.15"/>
<rect x="568.35" y="148.55" width="3.00" height="11.26" fill="#1854bd"/>
<path d="M573.42 149.49V172.00" stroke="#d11815" stroke-width="1.15"/>
<rect x="571.92" y="159.81" width="3.00" height="4.69" fill="#d11815"/>
<path d="M576.98 127.91V161.68" stroke="#d11815" stroke-width="1.15"/>
<rect x="575.48" y="147.61" width="3.00" height="10.32" fill="#d11815"/>
<path d="M580.54 120.41V162.62" stroke="#d11815" stroke-width="1.15"/>
<rect x="579.04" y="121.34" width="3.00" height="35.65" fill="#d11815"/>
<path d="M584.11 66.40V105.14" stroke="#1854bd" stroke-width="1.15"/>
<rect x="582.61" y="80.81" width="3.00" height="18.02" fill="#1854bd"/>
<path d="M587.67 69.10V119.55" stroke="#1854bd" stroke-width="1.15"/>
<rect x="586.17" y="107.84" width="3.00" height="9.01" fill="#1854bd"/>
<path d="M591.23 94.33V113.25" stroke="#d11815" stroke-width="1.15"/>
<rect x="589.73" y="96.13" width="3.00" height="12.61" fill="#d11815"/>
<path d="M594.79 101.54V123.16" stroke="#1854bd" stroke-width="1.15"/>
<rect x="593.29" y="105.14" width="3.00" height="10.81" fill="#1854bd"/>
<path d="M598.36 105.14V121.35" stroke="#1854bd" stroke-width="1.15"/>
<rect x="596.86" y="113.25" width="3.00" height="3.60" fill="#1854bd"/>
<path d="M601.92 92.53V114.15" stroke="#1854bd" stroke-width="1.15"/>
<rect x="600.42" y="109.64" width="3.00" height="2.70" fill="#1854bd"/>
<path d="M605.48 107.84V146.58" stroke="#1854bd" stroke-width="1.15"/>
<rect x="603.98" y="108.74" width="3.00" height="6.31" fill="#1854bd"/>
<path d="M609.05 113.25V150.18" stroke="#1854bd" stroke-width="1.15"/>
<rect x="607.55" y="115.05" width="3.00" height="33.33" fill="#1854bd"/>
<path d="M612.61 136.67V169.10" stroke="#d11815" stroke-width="1.15"/>
<rect x="611.11" y="144.78" width="3.00" height="16.22" fill="#d11815"/>
<path d="M616.17 113.25V136.67" stroke="#d11815" stroke-width="1.15"/>
<rect x="614.67" y="118.65" width="3.00" height="9.91" fill="#d11815"/>
<path d="M619.74 106.04V119.55" stroke="#1854bd" stroke-width="1.15"/>
<rect x="618.24" y="115.05" width="3.00" height="2.70" fill="#1854bd"/>
<path d="M623.30 75.41V118.65" stroke="#d11815" stroke-width="1.15"/>
<rect x="621.80" y="102.44" width="3.00" height="10.81" fill="#d11815"/>
<path d="M626.86 71.81V106.04" stroke="#d11815" stroke-width="1.15"/>
<rect x="625.36" y="86.22" width="3.00" height="10.81" fill="#d11815"/>
<path d="M630.42 103.34V128.56" stroke="#1854bd" stroke-width="1.15"/>
<rect x="628.92" y="106.04" width="3.00" height="19.82" fill="#1854bd"/>
<path d="M633.99 122.26V142.08" stroke="#1854bd" stroke-width="1.15"/>
<rect x="632.49" y="133.07" width="3.00" height="3.60" fill="#1854bd"/>
<path d="M637.55 139.96V166.81" stroke="#1854bd" stroke-width="1.15"/>
<rect x="636.05" y="143.32" width="3.00" height="19.02" fill="#1854bd"/>
<path d="M641.11 157.86V197.01" stroke="#1854bd" stroke-width="1.15"/>
<rect x="639.61" y="158.98" width="3.00" height="26.85" fill="#1854bd"/>
<path d="M644.68 184.71V201.48" stroke="#1854bd" stroke-width="1.15"/>
<rect x="643.18" y="185.82" width="3.00" height="13.42" fill="#1854bd"/>
<path d="M648.24 177.98V206.58" stroke="#d11815" stroke-width="1.15"/>
<rect x="646.74" y="178.90" width="3.00" height="23.06" fill="#d11815"/>
<path d="M651.80 170.60V200.12" stroke="#1854bd" stroke-width="1.15"/>
<rect x="650.30" y="171.52" width="3.00" height="24.91" fill="#1854bd"/>
<path d="M655.37 188.13V198.28" stroke="#1854bd" stroke-width="1.15"/>
<rect x="653.87" y="189.97" width="3.00" height="5.54" fill="#1854bd"/>
<path d="M658.93 197.35V216.73" stroke="#1854bd" stroke-width="1.15"/>
<rect x="657.43" y="198.28" width="3.00" height="14.76" fill="#1854bd"/>
<path d="M662.49 203.81V216.73" stroke="#d11815" stroke-width="1.15"/>
<rect x="660.99" y="212.11" width="3.00" height="2.77" fill="#d11815"/>
<path d="M666.06 198.28V219.49" stroke="#1854bd" stroke-width="1.15"/>
<rect x="664.56" y="203.81" width="3.00" height="14.76" fill="#1854bd"/>
<path d="M669.62 219.49V236.10" stroke="#1854bd" stroke-width="1.15"/>
<rect x="668.12" y="222.26" width="3.00" height="5.54" fill="#1854bd"/>
<path d="M673.18 221.34V237.02" stroke="#1854bd" stroke-width="1.15"/>
<rect x="671.68" y="227.80" width="3.00" height="1.85" fill="#1854bd"/>
<path d="M676.74 226.87V243.48" stroke="#1854bd" stroke-width="1.15"/>
<rect x="675.24" y="228.72" width="3.00" height="13.84" fill="#1854bd"/>
<path d="M680.31 222.26V232.41" stroke="#1854bd" stroke-width="1.15"/>
<rect x="678.81" y="225.95" width="3.00" height="5.54" fill="#1854bd"/>
<path d="M683.87 223.18V244.40" stroke="#d11815" stroke-width="1.15"/>
<rect x="682.37" y="224.11" width="3.00" height="15.68" fill="#d11815"/>
<path d="M687.43 213.96V223.18" stroke="#d11815" stroke-width="1.15"/>
<rect x="685.93" y="214.88" width="3.00" height="7.38" fill="#d11815"/>
<path d="M691.00 205.66V218.57" stroke="#d11815" stroke-width="1.15"/>
<rect x="689.50" y="206.58" width="3.00" height="11.07" fill="#d11815"/>
<path d="M694.56 196.43V215.80" stroke="#1854bd" stroke-width="1.15"/>
<rect x="693.06" y="199.20" width="3.00" height="15.68" fill="#1854bd"/>
<path d="M698.12 213.96V240.71" stroke="#1854bd" stroke-width="1.15"/>
<rect x="696.62" y="214.88" width="3.00" height="23.99" fill="#1854bd"/>
<path d="M701.69 215.80V242.56" stroke="#d11815" stroke-width="1.15"/>
<rect x="700.19" y="216.73" width="3.00" height="23.99" fill="#d11815"/>
<path d="M705.25 190.90V213.04" stroke="#d11815" stroke-width="1.15"/>
<rect x="703.75" y="196.43" width="3.00" height="15.68" fill="#d11815"/>
<path d="M708.81 191.82V203.81" stroke="#1854bd" stroke-width="1.15"/>
<rect x="707.31" y="193.66" width="3.00" height="8.30" fill="#1854bd"/>
<path d="M712.37 198.28V215.80" stroke="#1854bd" stroke-width="1.15"/>
<rect x="710.87" y="203.81" width="3.00" height="10.15" fill="#1854bd"/>
<path d="M715.94 207.50V224.11" stroke="#1854bd" stroke-width="1.15"/>
<rect x="714.44" y="212.11" width="3.00" height="4.61" fill="#1854bd"/>
<path d="M719.50 200.12V223.18" stroke="#d11815" stroke-width="1.15"/>
<rect x="718.00" y="201.97" width="3.00" height="11.07" fill="#d11815"/>
<path d="M723.06 180.75V200.12" stroke="#d11815" stroke-width="1.15"/>
<rect x="721.56" y="187.21" width="3.00" height="11.99" fill="#d11815"/>
<path d="M726.63 185.36V198.28" stroke="#1854bd" stroke-width="1.15"/>
<rect x="725.13" y="187.21" width="3.00" height="7.38" fill="#1854bd"/>
<path d="M730.19 187.21V196.43" stroke="#1854bd" stroke-width="1.15"/>
<rect x="728.69" y="189.97" width="3.00" height="3.69" fill="#1854bd"/>
<path d="M733.75 186.28V201.04" stroke="#1854bd" stroke-width="1.15"/>
<rect x="732.25" y="188.13" width="3.00" height="8.30" fill="#1854bd"/>
<path d="M737.32 171.52V191.82" stroke="#d11815" stroke-width="1.15"/>
<rect x="735.82" y="173.37" width="3.00" height="17.53" fill="#d11815"/>
<path d="M740.88 171.52V191.82" stroke="#1854bd" stroke-width="1.15"/>
<rect x="739.38" y="177.98" width="3.00" height="12.92" fill="#1854bd"/>
<path d="M744.44 171.52V185.36" stroke="#1854bd" stroke-width="1.15"/>
<rect x="742.94" y="177.06" width="3.00" height="7.38" fill="#1854bd"/>
<path d="M748.00 162.30V179.83" stroke="#d11815" stroke-width="1.15"/>
<rect x="746.50" y="165.07" width="3.00" height="10.15" fill="#d11815"/>
<path d="M751.57 160.45V176.14" stroke="#1854bd" stroke-width="1.15"/>
<rect x="750.07" y="161.38" width="3.00" height="10.15" fill="#1854bd"/>
<path d="M755.13 162.30V213.96" stroke="#1854bd" stroke-width="1.15"/>
<rect x="753.63" y="163.22" width="3.00" height="47.97" fill="#1854bd"/>
<path d="M758.69 194.59V220.42" stroke="#1854bd" stroke-width="1.15"/>
<rect x="757.19" y="200.12" width="3.00" height="11.99" fill="#1854bd"/>
<path d="M762.26 191.82V211.19" stroke="#d11815" stroke-width="1.15"/>
<rect x="760.76" y="196.43" width="3.00" height="5.54" fill="#d11815"/>
<path d="M765.82 197.35V213.96" stroke="#1854bd" stroke-width="1.15"/>
<rect x="764.32" y="199.20" width="3.00" height="9.23" fill="#1854bd"/>
<path d="M769.38 206.58V219.49" stroke="#d11815" stroke-width="1.15"/>
<rect x="767.88" y="211.19" width="3.00" height="3.69" fill="#d11815"/>
<path d="M772.95 205.09V225.61" stroke="#1854bd" stroke-width="1.15"/>
<rect x="771.45" y="208.82" width="3.00" height="15.86" fill="#1854bd"/>
<path d="M776.51 215.35V232.14" stroke="#d11815" stroke-width="1.15"/>
<rect x="775.01" y="219.08" width="3.00" height="11.19" fill="#d11815"/>
<path d="M780.07 203.22V216.28" stroke="#1854bd" stroke-width="1.15"/>
<rect x="778.57" y="206.96" width="3.00" height="7.46" fill="#1854bd"/>
<path d="M783.63 206.96V219.08" stroke="#1854bd" stroke-width="1.15"/>
<rect x="782.13" y="213.49" width="3.00" height="4.66" fill="#1854bd"/>
<path d="M787.20 213.49V237.74" stroke="#d11815" stroke-width="1.15"/>
<rect x="785.70" y="214.42" width="3.00" height="7.46" fill="#d11815"/>
<path d="M790.76 212.55V237.74" stroke="#1854bd" stroke-width="1.15"/>
<rect x="789.26" y="213.49" width="3.00" height="23.32" fill="#1854bd"/>
<path d="M794.32 223.75V240.54" stroke="#1854bd" stroke-width="1.15"/>
<rect x="792.82" y="234.01" width="3.00" height="2.80" fill="#1854bd"/>
<path d="M797.89 227.48V241.47" stroke="#d11815" stroke-width="1.15"/>
<rect x="796.39" y="229.34" width="3.00" height="9.33" fill="#d11815"/>
<path d="M801.45 214.42V228.41" stroke="#d11815" stroke-width="1.15"/>
<rect x="799.95" y="218.15" width="3.00" height="9.33" fill="#d11815"/>
<path d="M805.01 203.22V222.81" stroke="#1854bd" stroke-width="1.15"/>
<rect x="803.51" y="214.42" width="3.00" height="7.46" fill="#1854bd"/>
<path d="M808.58 216.28V224.68" stroke="#1854bd" stroke-width="1.15"/>
<rect x="807.08" y="217.22" width="3.00" height="5.60" fill="#1854bd"/>
<path d="M812.14 222.81V239.60" stroke="#1854bd" stroke-width="1.15"/>
<rect x="810.64" y="224.68" width="3.00" height="13.99" fill="#1854bd"/>
<path d="M815.70 231.21V241.47" stroke="#1854bd" stroke-width="1.15"/>
<rect x="814.20" y="236.81" width="3.00" height="3.73" fill="#1854bd"/>
<path d="M819.26 230.28V253.60" stroke="#1854bd" stroke-width="1.15"/>
<rect x="817.76" y="236.81" width="3.00" height="5.60" fill="#1854bd"/>
<path d="M822.83 234.94V242.40" stroke="#1854bd" stroke-width="1.15"/>
<rect x="821.33" y="236.81" width="3.00" height="4.66" fill="#1854bd"/>
<path d="M826.39 236.81V249.87" stroke="#1854bd" stroke-width="1.15"/>
<rect x="824.89" y="238.67" width="3.00" height="9.33" fill="#1854bd"/>
<path d="M829.95 243.34V261.06" stroke="#1854bd" stroke-width="1.15"/>
<rect x="828.45" y="247.07" width="3.00" height="13.06" fill="#1854bd"/>
<path d="M833.52 251.73V263.86" stroke="#d11815" stroke-width="1.15"/>
<rect x="832.02" y="252.66" width="3.00" height="6.53" fill="#d11815"/>
<path d="M837.08 252.66V260.13" stroke="#1854bd" stroke-width="1.15"/>
<rect x="835.58" y="253.60" width="3.00" height="4.66" fill="#1854bd"/>
<path d="M840.64 228.41V261.99" stroke="#d11815" stroke-width="1.15"/>
<rect x="839.14" y="237.74" width="3.00" height="23.32" fill="#d11815"/>
<path d="M844.21 165.00V234.00" stroke="#d11815" stroke-width="1.15"/>
<rect x="842.71" y="173.40" width="3.00" height="58.60" fill="#d11815"/>
<path d="M847.77 148.00V193.00" stroke="#d11815" stroke-width="1.15"/>
<rect x="846.27" y="182.80" width="3.00" height="5.70" fill="#d11815"/>
<path d="M851.33 177.10V205.09" stroke="#d11815" stroke-width="1.15"/>
<rect x="849.83" y="191.10" width="3.00" height="9.33" fill="#d11815"/>
<path d="M854.89 154.30V181.00" stroke="#d11815" stroke-width="1.15"/>
<rect x="853.39" y="170.60" width="3.00" height="9.40" fill="#d11815"/>
<path d="M858.46 157.40V176.50" stroke="#1854bd" stroke-width="1.15"/>
<rect x="856.96" y="157.80" width="3.00" height="17.50" fill="#1854bd"/>
<path d="M862.02 113.80V207.00" stroke="#1854bd" stroke-width="1.15"/>
<rect x="860.52" y="173.40" width="3.00" height="25.60" fill="#1854bd"/>
<path d="M865.58 189.23V237.74" stroke="#1854bd" stroke-width="1.15"/>
<rect x="864.08" y="195.76" width="3.00" height="41.04" fill="#1854bd"/>
<path d="M869.15 229.34V250.80" stroke="#d11815" stroke-width="1.15"/>
<rect x="867.65" y="235.87" width="3.00" height="12.13" fill="#d11815"/>
<path d="M872.71 201.36V236.81" stroke="#d11815" stroke-width="1.15"/>
<rect x="871.21" y="206.96" width="3.00" height="28.92" fill="#d11815"/>
<path d="M876.27 196.69V226.54" stroke="#1854bd" stroke-width="1.15"/>
<rect x="874.77" y="198.56" width="3.00" height="25.19" fill="#1854bd"/>
<path d="M879.84 216.28V234.94" stroke="#d11815" stroke-width="1.15"/>
<rect x="878.34" y="226.54" width="3.00" height="7.46" fill="#d11815"/>
<path d="M883.40 215.35V251.73" stroke="#1854bd" stroke-width="1.15"/>
<rect x="881.90" y="220.01" width="3.00" height="8.40" fill="#1854bd"/>
<path d="M886.96 234.38V248.37" stroke="#1854bd" stroke-width="1.15"/>
<rect x="885.46" y="234.94" width="3.00" height="5.60" fill="#1854bd"/>
</g>
<rect x="5.40" y="509.37" width="3.00" height="8.63" fill="#d11815"/>
<rect x="8.96" y="512.40" width="3.00" height="5.60" fill="#1854bd"/>
<rect x="12.53" y="510.88" width="3.00" height="7.12" fill="#d11815"/>
<rect x="16.09" y="510.88" width="3.00" height="7.12" fill="#1854bd"/>
<rect x="19.65" y="500.58" width="3.00" height="17.42" fill="#d11815"/>
<rect x="23.22" y="510.12" width="3.00" height="7.88" fill="#1854bd"/>
<rect x="26.78" y="497.55" width="3.00" height="20.45" fill="#d11815"/>
<rect x="30.34" y="491.49" width="3.00" height="26.51" fill="#d11815"/>
<rect x="33.90" y="508.61" width="3.00" height="9.39" fill="#1854bd"/>
<rect x="37.47" y="502.55" width="3.00" height="15.45" fill="#d11815"/>
<rect x="41.03" y="507.09" width="3.00" height="10.91" fill="#1854bd"/>
<rect x="44.59" y="505.58" width="3.00" height="12.42" fill="#d11815"/>
<rect x="48.16" y="507.85" width="3.00" height="10.15" fill="#1854bd"/>
<rect x="51.72" y="509.37" width="3.00" height="8.63" fill="#1854bd"/>
<rect x="55.28" y="507.09" width="3.00" height="10.91" fill="#d11815"/>
<rect x="58.84" y="507.85" width="3.00" height="10.15" fill="#d11815"/>
<rect x="62.41" y="509.37" width="3.00" height="8.63" fill="#1854bd"/>
<rect x="65.97" y="510.88" width="3.00" height="7.12" fill="#1854bd"/>
<rect x="69.53" y="507.09" width="3.00" height="10.91" fill="#d11815"/>
<rect x="73.10" y="510.88" width="3.00" height="7.12" fill="#1854bd"/>
<rect x="76.66" y="507.09" width="3.00" height="10.91" fill="#d11815"/>
<rect x="80.22" y="510.88" width="3.00" height="7.12" fill="#1854bd"/>
<rect x="83.79" y="508.61" width="3.00" height="9.39" fill="#d11815"/>
<rect x="87.35" y="503.31" width="3.00" height="14.69" fill="#d11815"/>
<rect x="90.91" y="507.85" width="3.00" height="10.15" fill="#1854bd"/>
<rect x="94.48" y="507.09" width="3.00" height="10.91" fill="#d11815"/>
<rect x="98.04" y="495.43" width="3.00" height="22.57" fill="#d11815"/>
<rect x="101.60" y="507.85" width="3.00" height="10.15" fill="#1854bd"/>
<rect x="105.16" y="508.61" width="3.00" height="9.39" fill="#1854bd"/>
<rect x="108.73" y="510.12" width="3.00" height="7.88" fill="#1854bd"/>
<rect x="112.29" y="510.88" width="3.00" height="7.12" fill="#1854bd"/>
<rect x="115.85" y="510.12" width="3.00" height="7.88" fill="#d11815"/>
<rect x="119.42" y="497.25" width="3.00" height="20.75" fill="#d11815"/>
<rect x="122.98" y="500.58" width="3.00" height="17.42" fill="#1854bd"/>
<rect x="126.54" y="507.09" width="3.00" height="10.91" fill="#1854bd"/>
<rect x="130.11" y="508.61" width="3.00" height="9.39" fill="#1854bd"/>
<rect x="133.67" y="509.37" width="3.00" height="8.63" fill="#1854bd"/>
<rect x="137.23" y="508.61" width="3.00" height="9.39" fill="#d11815"/>
<rect x="140.79" y="508.61" width="3.00" height="9.39" fill="#d11815"/>
<rect x="144.36" y="510.12" width="3.00" height="7.88" fill="#1854bd"/>
<rect x="147.92" y="508.61" width="3.00" height="9.39" fill="#d11815"/>
<rect x="151.48" y="509.37" width="3.00" height="8.63" fill="#1854bd"/>
<rect x="155.05" y="510.88" width="3.00" height="7.12" fill="#1854bd"/>
<rect x="158.61" y="509.37" width="3.00" height="8.63" fill="#d11815"/>
<rect x="162.17" y="510.88" width="3.00" height="7.12" fill="#1854bd"/>
<rect x="165.74" y="510.12" width="3.00" height="7.88" fill="#d11815"/>
<rect x="169.30" y="509.37" width="3.00" height="8.63" fill="#d11815"/>
<rect x="172.86" y="508.61" width="3.00" height="9.39" fill="#d11815"/>
<rect x="176.42" y="497.25" width="3.00" height="20.75" fill="#d11815"/>
<rect x="179.99" y="503.31" width="3.00" height="14.69" fill="#1854bd"/>
<rect x="183.55" y="509.37" width="3.00" height="8.63" fill="#1854bd"/>
<rect x="187.11" y="510.12" width="3.00" height="7.88" fill="#1854bd"/>
<rect x="190.68" y="507.85" width="3.00" height="10.15" fill="#d11815"/>
<rect x="194.24" y="509.37" width="3.00" height="8.63" fill="#1854bd"/>
<rect x="197.80" y="508.61" width="3.00" height="9.39" fill="#d11815"/>
<rect x="201.37" y="501.34" width="3.00" height="16.66" fill="#d11815"/>
<rect x="204.93" y="509.37" width="3.00" height="8.63" fill="#1854bd"/>
<rect x="208.49" y="510.12" width="3.00" height="7.88" fill="#1854bd"/>
<rect x="212.05" y="502.25" width="3.00" height="15.75" fill="#d11815"/>
<rect x="215.62" y="506.34" width="3.00" height="11.66" fill="#1854bd"/>
<rect x="219.18" y="509.37" width="3.00" height="8.63" fill="#1854bd"/>
<rect x="222.74" y="509.37" width="3.00" height="8.63" fill="#1854bd"/>
<rect x="226.31" y="507.85" width="3.00" height="10.15" fill="#d11815"/>
<rect x="229.87" y="501.34" width="3.00" height="16.66" fill="#d11815"/>
<rect x="233.43" y="501.34" width="3.00" height="16.66" fill="#d11815"/>
<rect x="237.00" y="492.70" width="3.00" height="25.30" fill="#d11815"/>
<rect x="240.56" y="498.46" width="3.00" height="19.54" fill="#1854bd"/>
<rect x="244.12" y="509.37" width="3.00" height="8.63" fill="#1854bd"/>
<rect x="247.68" y="507.09" width="3.00" height="10.91" fill="#d11815"/>
<rect x="251.25" y="508.61" width="3.00" height="9.39" fill="#1854bd"/>
<rect x="254.81" y="507.85" width="3.00" height="10.15" fill="#d11815"/>
<rect x="258.37" y="509.37" width="3.00" height="8.63" fill="#1854bd"/>
<rect x="261.94" y="499.22" width="3.00" height="18.78" fill="#d11815"/>
<rect x="265.50" y="507.85" width="3.00" height="10.15" fill="#1854bd"/>
<rect x="269.06" y="509.37" width="3.00" height="8.63" fill="#1854bd"/>
<rect x="272.62" y="512.40" width="3.00" height="5.60" fill="#1854bd"/>
<rect x="276.19" y="511.64" width="3.00" height="6.36" fill="#d11815"/>
<rect x="279.75" y="513.15" width="3.00" height="4.85" fill="#1854bd"/>
<rect x="283.31" y="511.64" width="3.00" height="6.36" fill="#d11815"/>
<rect x="286.88" y="509.37" width="3.00" height="8.63" fill="#d11815"/>
<rect x="290.44" y="510.88" width="3.00" height="7.12" fill="#1854bd"/>
<rect x="294.00" y="504.52" width="3.00" height="13.48" fill="#d11815"/>
<rect x="297.57" y="509.37" width="3.00" height="8.63" fill="#1854bd"/>
<rect x="301.13" y="511.64" width="3.00" height="6.36" fill="#1854bd"/>
<rect x="304.69" y="510.12" width="3.00" height="7.88" fill="#d11815"/>
<rect x="308.25" y="501.34" width="3.00" height="16.66" fill="#d11815"/>
<rect x="311.82" y="509.37" width="3.00" height="8.63" fill="#1854bd"/>
<rect x="315.38" y="509.37" width="3.00" height="8.63" fill="#d11815"/>
<rect x="318.94" y="510.88" width="3.00" height="7.12" fill="#1854bd"/>
<rect x="322.51" y="511.64" width="3.00" height="6.36" fill="#1854bd"/>
<rect x="326.07" y="512.40" width="3.00" height="5.60" fill="#1854bd"/>
<rect x="329.63" y="510.12" width="3.00" height="7.88" fill="#d11815"/>
<rect x="333.20" y="509.37" width="3.00" height="8.63" fill="#d11815"/>
<rect x="336.76" y="510.88" width="3.00" height="7.12" fill="#1854bd"/>
<rect x="340.32" y="509.37" width="3.00" height="8.63" fill="#d11815"/>
<rect x="343.88" y="510.12" width="3.00" height="7.88" fill="#1854bd"/>
<rect x="347.45" y="510.88" width="3.00" height="7.12" fill="#1854bd"/>
<rect x="351.01" y="507.09" width="3.00" height="10.91" fill="#d11815"/>
<rect x="354.57" y="493.46" width="3.00" height="24.54" fill="#d11815"/>
<rect x="358.14" y="509.37" width="3.00" height="8.63" fill="#1854bd"/>
<rect x="361.70" y="501.34" width="3.00" height="16.66" fill="#d11815"/>
<rect x="365.26" y="510.12" width="3.00" height="7.88" fill="#1854bd"/>
<rect x="368.83" y="507.85" width="3.00" height="10.15" fill="#d11815"/>
<rect x="372.39" y="508.61" width="3.00" height="9.39" fill="#1854bd"/>
<rect x="375.95" y="510.88" width="3.00" height="7.12" fill="#1854bd"/>
<rect x="379.51" y="510.12" width="3.00" height="7.88" fill="#d11815"/>
<rect x="383.08" y="509.37" width="3.00" height="8.63" fill="#d11815"/>
<rect x="386.64" y="510.88" width="3.00" height="7.12" fill="#1854bd"/>
<rect x="390.20" y="510.58" width="3.00" height="7.42" fill="#d11815"/>
<rect x="393.77" y="511.64" width="3.00" height="6.36" fill="#1854bd"/>
<rect x="397.33" y="512.09" width="3.00" height="5.91" fill="#1854bd"/>
<rect x="400.89" y="510.88" width="3.00" height="7.12" fill="#d11815"/>
<rect x="404.46" y="510.88" width="3.00" height="7.12" fill="#d11815"/>
<rect x="408.02" y="509.37" width="3.00" height="8.63" fill="#d11815"/>
<rect x="411.58" y="512.40" width="3.00" height="5.60" fill="#1854bd"/>
<rect x="415.14" y="505.58" width="3.00" height="12.42" fill="#d11815"/>
<rect x="418.71" y="496.18" width="3.00" height="21.82" fill="#d11815"/>
<rect x="422.27" y="504.38" width="3.00" height="13.62" fill="#1854bd"/>
<rect x="425.83" y="508.48" width="3.00" height="9.52" fill="#1854bd"/>
<rect x="429.40" y="508.07" width="3.00" height="9.93" fill="#d11815"/>
<rect x="432.96" y="509.50" width="3.00" height="8.50" fill="#1854bd"/>
<rect x="436.52" y="506.43" width="3.00" height="11.57" fill="#d11815"/>
<rect x="440.09" y="508.48" width="3.00" height="9.52" fill="#1854bd"/>
<rect x="443.65" y="507.45" width="3.00" height="10.55" fill="#1854bd"/>
<rect x="447.21" y="504.79" width="3.00" height="13.21" fill="#d11815"/>
<rect x="450.77" y="507.45" width="3.00" height="10.55" fill="#1854bd"/>
<rect x="454.34" y="496.18" width="3.00" height="21.82" fill="#d11815"/>
<rect x="457.90" y="503.36" width="3.00" height="14.64" fill="#1854bd"/>
<rect x="461.46" y="500.28" width="3.00" height="17.72" fill="#d11815"/>
<rect x="465.03" y="490.04" width="3.00" height="27.96" fill="#d11815"/>
<rect x="468.59" y="494.13" width="3.00" height="23.87" fill="#1854bd"/>
<rect x="472.15" y="505.40" width="3.00" height="12.60" fill="#1854bd"/>
<rect x="475.72" y="498.64" width="3.00" height="19.36" fill="#d11815"/>
<rect x="479.28" y="504.38" width="3.00" height="13.62" fill="#1854bd"/>
<rect x="482.84" y="487.99" width="3.00" height="30.01" fill="#d11815"/>
<rect x="486.40" y="493.11" width="3.00" height="24.89" fill="#1854bd"/>
<rect x="489.97" y="498.64" width="3.00" height="19.36" fill="#1854bd"/>
<rect x="493.53" y="503.36" width="3.00" height="14.64" fill="#d11815"/>
<rect x="497.09" y="500.28" width="3.00" height="17.72" fill="#d11815"/>
<rect x="500.66" y="443.93" width="3.00" height="74.07" fill="#d11815"/>
<rect x="504.22" y="479.18" width="3.00" height="38.82" fill="#1854bd"/>
<rect x="507.78" y="494.13" width="3.00" height="23.87" fill="#1854bd"/>
<rect x="511.35" y="490.04" width="3.00" height="27.96" fill="#d11815"/>
<rect x="514.91" y="482.86" width="3.00" height="35.14" fill="#d11815"/>
<rect x="518.47" y="497.21" width="3.00" height="20.79" fill="#1854bd"/>
<rect x="522.03" y="489.01" width="3.00" height="28.99" fill="#d11815"/>
<rect x="525.60" y="494.13" width="3.00" height="23.87" fill="#1854bd"/>
<rect x="529.16" y="502.33" width="3.00" height="15.67" fill="#1854bd"/>
<rect x="532.72" y="498.64" width="3.00" height="19.36" fill="#d11815"/>
<rect x="536.29" y="502.33" width="3.00" height="15.67" fill="#1854bd"/>
<rect x="539.85" y="481.84" width="3.00" height="36.16" fill="#d11815"/>
<rect x="543.41" y="496.18" width="3.00" height="21.82" fill="#1854bd"/>
<rect x="546.98" y="500.28" width="3.00" height="17.72" fill="#1854bd"/>
<rect x="550.54" y="503.36" width="3.00" height="14.64" fill="#1854bd"/>
<rect x="554.10" y="489.01" width="3.00" height="28.99" fill="#d11815"/>
<rect x="557.66" y="467.09" width="3.00" height="50.91" fill="#d11815"/>
<rect x="561.23" y="474.05" width="3.00" height="43.95" fill="#1854bd"/>
<rect x="564.79" y="432.04" width="3.00" height="85.96" fill="#d11815"/>
<rect x="568.35" y="485.94" width="3.00" height="32.06" fill="#1854bd"/>
<rect x="571.92" y="487.99" width="3.00" height="30.01" fill="#1854bd"/>
<rect x="575.48" y="476.10" width="3.00" height="41.90" fill="#d11815"/>
<rect x="579.04" y="479.18" width="3.00" height="38.82" fill="#1854bd"/>
<rect x="582.61" y="461.96" width="3.00" height="56.04" fill="#d11815"/>
<rect x="586.17" y="474.26" width="3.00" height="43.74" fill="#1854bd"/>
<rect x="589.73" y="492.09" width="3.00" height="25.91" fill="#1854bd"/>
<rect x="593.29" y="492.09" width="3.00" height="25.91" fill="#d11815"/>
<rect x="596.86" y="494.13" width="3.00" height="23.87" fill="#1854bd"/>
<rect x="600.42" y="464.83" width="3.00" height="53.17" fill="#d11815"/>
<rect x="603.98" y="470.98" width="3.00" height="47.02" fill="#1854bd"/>
<rect x="607.55" y="486.96" width="3.00" height="31.04" fill="#1854bd"/>
<rect x="611.11" y="490.04" width="3.00" height="27.96" fill="#1854bd"/>
<rect x="614.67" y="486.96" width="3.00" height="31.04" fill="#d11815"/>
<rect x="618.24" y="498.23" width="3.00" height="19.77" fill="#1854bd"/>
<rect x="621.80" y="464.83" width="3.00" height="53.17" fill="#d11815"/>
<rect x="625.36" y="476.72" width="3.00" height="41.28" fill="#1854bd"/>
<rect x="628.92" y="462.99" width="3.00" height="55.01" fill="#d11815"/>
<rect x="632.49" y="490.04" width="3.00" height="27.96" fill="#1854bd"/>
<rect x="636.05" y="490.04" width="3.00" height="27.96" fill="#1854bd"/>
<rect x="639.61" y="479.79" width="3.00" height="38.21" fill="#d11815"/>
<rect x="643.18" y="497.21" width="3.00" height="20.79" fill="#1854bd"/>
<rect x="646.74" y="494.75" width="3.00" height="23.25" fill="#d11815"/>
<rect x="650.30" y="497.21" width="3.00" height="20.79" fill="#1854bd"/>
<rect x="653.87" y="504.79" width="3.00" height="13.21" fill="#1854bd"/>
<rect x="657.43" y="502.95" width="3.00" height="15.05" fill="#d11815"/>
<rect x="660.99" y="509.09" width="3.00" height="8.91" fill="#1854bd"/>
<rect x="664.56" y="506.43" width="3.00" height="11.57" fill="#d11815"/>
<rect x="668.12" y="503.97" width="3.00" height="14.03" fill="#d11815"/>
<rect x="671.68" y="506.02" width="3.00" height="11.98" fill="#1854bd"/>
<rect x="675.24" y="498.64" width="3.00" height="19.36" fill="#d11815"/>
<rect x="678.81" y="502.33" width="3.00" height="15.67" fill="#1854bd"/>
<rect x="682.37" y="506.02" width="3.00" height="11.98" fill="#1854bd"/>
<rect x="685.93" y="503.97" width="3.00" height="14.03" fill="#d11815"/>
<rect x="689.50" y="509.09" width="3.00" height="8.91" fill="#1854bd"/>
<rect x="693.06" y="506.43" width="3.00" height="11.57" fill="#d11815"/>
<rect x="696.62" y="499.87" width="3.00" height="18.13" fill="#d11815"/>
<rect x="700.19" y="505.40" width="3.00" height="12.60" fill="#1854bd"/>
<rect x="703.75" y="498.64" width="3.00" height="19.36" fill="#d11815"/>
<rect x="707.31" y="508.07" width="3.00" height="9.93" fill="#1854bd"/>
<rect x="710.87" y="508.07" width="3.00" height="9.93" fill="#1854bd"/>
<rect x="714.44" y="509.09" width="3.00" height="8.91" fill="#1854bd"/>
<rect x="718.00" y="508.07" width="3.00" height="9.93" fill="#d11815"/>
<rect x="721.56" y="499.87" width="3.00" height="18.13" fill="#d11815"/>
<rect x="725.13" y="511.14" width="3.00" height="6.86" fill="#1854bd"/>
<rect x="728.69" y="510.12" width="3.00" height="7.88" fill="#d11815"/>
<rect x="732.25" y="509.50" width="3.00" height="8.50" fill="#d11815"/>
<rect x="735.82" y="500.90" width="3.00" height="17.10" fill="#d11815"/>
<rect x="739.38" y="503.73" width="3.00" height="14.27" fill="#1854bd"/>
<rect x="742.94" y="506.53" width="3.00" height="11.47" fill="#1854bd"/>
<rect x="746.50" y="503.73" width="3.00" height="14.27" fill="#d11815"/>
<rect x="750.07" y="506.53" width="3.00" height="11.47" fill="#1854bd"/>
<rect x="753.63" y="486.14" width="3.00" height="31.86" fill="#d11815"/>
<rect x="757.19" y="496.47" width="3.00" height="21.53" fill="#1854bd"/>
<rect x="760.76" y="506.53" width="3.00" height="11.47" fill="#1854bd"/>
<rect x="764.32" y="503.73" width="3.00" height="14.27" fill="#d11815"/>
<rect x="767.88" y="509.32" width="3.00" height="8.68" fill="#1854bd"/>
<rect x="771.45" y="504.29" width="3.00" height="13.71" fill="#d11815"/>
<rect x="775.01" y="509.32" width="3.00" height="8.68" fill="#1854bd"/>
<rect x="778.57" y="509.88" width="3.00" height="8.12" fill="#d11815"/>
<rect x="782.13" y="512.11" width="3.00" height="5.89" fill="#1854bd"/>
<rect x="785.70" y="505.13" width="3.00" height="12.87" fill="#d11815"/>
<rect x="789.26" y="505.13" width="3.00" height="12.87" fill="#d11815"/>
<rect x="792.82" y="507.92" width="3.00" height="10.08" fill="#1854bd"/>
<rect x="796.39" y="510.72" width="3.00" height="7.28" fill="#1854bd"/>
<rect x="799.95" y="507.92" width="3.00" height="10.08" fill="#d11815"/>
<rect x="803.51" y="505.13" width="3.00" height="12.87" fill="#d11815"/>
<rect x="807.08" y="507.09" width="3.00" height="10.91" fill="#1854bd"/>
<rect x="810.64" y="506.53" width="3.00" height="11.47" fill="#d11815"/>
<rect x="814.20" y="509.32" width="3.00" height="8.68" fill="#1854bd"/>
<rect x="817.76" y="506.53" width="3.00" height="11.47" fill="#d11815"/>
<rect x="821.33" y="510.72" width="3.00" height="7.28" fill="#1854bd"/>
<rect x="824.89" y="507.09" width="3.00" height="10.91" fill="#d11815"/>
<rect x="828.45" y="492.28" width="3.00" height="25.72" fill="#d11815"/>
<rect x="832.02" y="501.50" width="3.00" height="16.50" fill="#1854bd"/>
<rect x="835.58" y="507.09" width="3.00" height="10.91" fill="#1854bd"/>
<rect x="839.14" y="481.11" width="3.00" height="36.89" fill="#d11815"/>
<rect x="842.71" y="423.29" width="3.00" height="94.71" fill="#d11815"/>
<rect x="846.27" y="425.24" width="3.00" height="92.76" fill="#1854bd"/>
<rect x="849.83" y="474.12" width="3.00" height="43.88" fill="#1854bd"/>
<rect x="853.39" y="459.60" width="3.00" height="58.40" fill="#d11815"/>
<rect x="856.96" y="476.36" width="3.00" height="41.64" fill="#1854bd"/>
<rect x="860.52" y="378.04" width="3.00" height="139.96" fill="#d11815"/>
<rect x="864.08" y="476.92" width="3.00" height="41.08" fill="#1854bd"/>
<rect x="867.65" y="490.33" width="3.00" height="27.67" fill="#1854bd"/>
<rect x="871.21" y="491.16" width="3.00" height="26.84" fill="#1854bd"/>
<rect x="874.77" y="492.28" width="3.00" height="25.72" fill="#1854bd"/>
<rect x="878.34" y="505.69" width="3.00" height="12.31" fill="#1854bd"/>
<rect x="881.90" y="489.49" width="3.00" height="28.51" fill="#d11815"/>
<rect x="885.46" y="512.11" width="3.00" height="5.89" fill="#1854bd"/>
<path d="M6.9 504.0 C15.8 504.1 44.5 504.2 60.0 504.5 C75.5 504.8 76.7 505.5 100.0 506.0 C123.3 506.5 161.7 507.1 200.0 507.5 C238.3 507.9 293.3 508.2 330.0 508.3 C366.7 508.4 391.7 508.3 420.0 508.0 C448.3 507.7 479.5 506.9 500.0 506.3 C520.5 505.8 526.3 505.4 543.0 504.7 C559.7 504.0 587.2 502.9 600.0 502.2 C612.8 501.5 613.3 501.0 620.0 500.5 C626.7 500.0 633.3 499.4 640.0 499.0 C646.7 498.6 650.0 498.5 660.0 498.3 C670.0 498.1 683.3 498.1 700.0 498.0 C716.7 497.9 744.0 497.6 760.0 497.5 C776.0 497.4 784.3 497.2 796.0 497.3 C807.7 497.4 820.7 498.1 830.0 498.0 C839.3 497.9 846.0 497.1 852.0 496.5 C858.0 495.9 860.2 494.9 866.0 494.3 C871.8 493.7 883.5 493.2 887.0 493.0" fill="none" stroke="#8c8c8c" stroke-width="1.0" stroke-linejoin="round" opacity="1"/>
<path d="M6.9 504.7 C17.4 504.8 46.2 504.8 70.0 505.0 C93.8 505.2 120.0 505.6 150.0 506.0 C180.0 506.4 220.0 506.9 250.0 507.3 C280.0 507.7 301.7 508.1 330.0 508.2 C358.3 508.3 398.3 508.3 420.0 508.2 C441.7 508.1 446.7 507.8 460.0 507.4 C473.3 507.0 490.0 506.3 500.0 505.8 C510.0 505.3 512.8 504.9 520.0 504.3 C527.2 503.7 535.8 503.1 543.0 502.2 C550.2 501.3 556.2 500.1 563.0 499.1 C569.8 498.1 577.8 496.9 584.0 496.0 C590.2 495.1 594.0 494.7 600.0 494.0 C606.0 493.3 613.3 492.7 620.0 492.0 C626.7 491.3 633.3 490.6 640.0 490.0 C646.7 489.4 653.3 488.9 660.0 488.7 C666.7 488.5 673.3 488.6 680.0 488.8 C686.7 489.0 693.3 489.6 700.0 490.0 C706.7 490.4 713.3 491.1 720.0 491.5 C726.7 491.9 732.0 492.1 740.0 492.3 C748.0 492.6 761.0 492.3 768.0 493.0 C775.0 493.7 777.3 495.5 782.0 496.3 C786.7 497.1 791.3 497.5 796.0 498.0 C800.7 498.5 805.3 498.8 810.0 499.2 C814.7 499.6 819.3 500.3 824.0 500.7 C828.7 501.1 833.3 501.9 838.0 501.8 C842.7 501.7 847.3 500.8 852.0 500.0 C856.7 499.2 861.3 497.6 866.0 497.0 C870.7 496.4 876.5 496.3 880.0 496.3 C883.5 496.3 885.8 496.7 887.0 496.8" fill="none" stroke="#2f8f4a" stroke-width="1.4" stroke-linejoin="round" opacity="1"/>
<path d="M6.9 509.5 L10.5 509.7 L14.0 509.8 L17.6 509.8 L21.2 509.4 L24.7 509.5 L28.3 508.9 L31.8 508.0 L35.4 508.0 L39.0 507.6 L42.5 507.5 L46.1 507.3 L49.7 507.3 L53.2 507.3 L56.8 507.2 L60.3 507.1 L63.9 507.1 L67.5 507.2 L71.0 507.1 L74.6 507.2 L78.2 507.1 L81.7 507.0 L85.3 506.9 L88.8 506.5 L92.4 506.9 L96.0 506.7 L99.5 506.6 L103.1 507.4 L106.7 507.4 L110.2 507.8 L113.8 508.0 L117.4 508.2 L120.9 507.7 L124.5 507.2 L128.0 507.2 L131.6 507.3 L135.2 507.3 L138.7 507.2 L142.3 507.2 L145.9 507.2 L149.4 507.3 L153.0 507.2 L156.5 507.3 L160.1 507.6 L163.7 507.8 L167.2 507.9 L170.8 508.6 L174.4 508.7 L177.9 508.1 L181.5 507.8 L185.1 507.7 L188.6 507.7 L192.2 508.2 L195.7 508.6 L199.3 508.7 L202.9 508.4 L206.4 508.4 L210.0 508.4 L213.6 508.1 L217.1 507.9 L220.7 508.0 L224.2 508.0 L227.8 507.8 L231.4 507.4 L234.9 506.9 L238.5 506.1 L242.1 505.5 L245.6 505.6 L249.2 506.0 L252.7 506.3 L256.3 506.2 L259.9 506.2 L263.4 505.8 L267.0 505.7 L270.6 505.7 L274.1 506.3 L277.7 506.4 L281.3 506.5 L284.8 507.0 L288.4 507.2 L291.9 507.2 L295.5 507.0 L299.1 507.1 L302.6 507.6 L306.2 508.0 L309.8 508.5 L313.3 509.0 L316.9 509.0 L320.4 509.2 L324.0 509.3 L327.6 509.6 L331.1 509.6 L334.7 510.1 L338.3 510.3 L341.8 510.3 L345.4 510.2 L348.9 510.1 L352.5 509.8 L356.1 508.9 L359.6 508.9 L363.2 508.4 L366.8 508.7 L370.3 508.6 L373.9 508.5 L377.5 508.5 L381.0 509.0 L384.6 509.0 L388.1 509.0 L391.7 509.0 L395.3 509.0 L398.8 509.0 L402.4 509.0 L406.0 509.1 L409.5 509.0 L413.1 509.2 L416.6 509.0 L420.2 508.2 L423.8 508.1 L427.3 508.9 L430.9 508.8 L434.5 509.2 L438.0 509.0 L441.6 509.0 L445.1 509.0 L448.7 508.7 L452.3 508.5 L455.8 507.9 L459.4 507.5 L463.0 507.0 L466.5 505.9 L470.1 505.0 L473.7 504.7 L477.2 504.1 L480.8 503.9 L484.3 502.7 L487.9 502.0 L491.5 502.2 L495.0 502.1 L498.6 501.7 L502.2 498.5 L505.7 497.0 L509.3 496.4 L512.8 495.4 L516.4 494.2 L520.0 493.8 L523.5 492.9 L527.1 492.8 L530.7 492.8 L534.2 492.7 L537.8 493.3 L541.4 492.7 L544.9 492.2 L548.5 492.3 L552.0 492.2 L555.6 492.3 L559.2 491.0 L562.7 489.8 L566.3 486.2 L569.9 485.5 L573.4 487.7 L577.0 487.5 L580.5 486.8 L584.1 485.4 L587.7 484.9 L591.2 484.7 L594.8 484.8 L598.4 484.8 L601.9 483.0 L605.5 481.6 L609.0 480.8 L612.6 481.2 L616.2 480.8 L619.7 480.7 L623.3 478.7 L626.9 478.1 L630.4 477.9 L634.0 478.7 L637.6 481.6 L641.1 481.3 L644.7 481.8 L648.2 482.7 L651.8 483.6 L655.4 485.7 L658.9 487.2 L662.5 488.0 L666.1 488.7 L669.6 489.2 L673.2 491.3 L676.7 492.7 L680.3 493.5 L683.9 494.2 L687.4 495.1 L691.0 495.6 L694.6 497.7 L698.1 498.9 L701.7 501.0 L705.2 501.4 L708.8 502.3 L712.4 503.7 L715.9 504.3 L719.5 505.0 L723.1 505.1 L726.6 505.5 L730.2 505.8 L733.8 505.8 L737.3 505.6 L740.9 505.5 L744.4 505.6 L748.0 505.8 L751.6 506.0 L755.1 505.0 L758.7 504.7 L762.3 504.5 L765.8 504.4 L769.4 504.9 L772.9 504.8 L776.5 505.4 L780.1 505.4 L783.6 505.7 L787.2 505.5 L790.8 505.3 L794.3 505.7 L797.9 505.7 L801.4 505.6 L805.0 505.4 L808.6 505.7 L812.1 505.8 L815.7 505.9 L819.3 506.1 L822.8 506.3 L826.4 507.3 L830.0 507.1 L833.5 506.9 L837.1 507.1 L840.6 505.6 L844.2 501.6 L847.8 497.4 L851.3 495.6 L854.9 493.0 L858.5 491.5 L862.0 485.2 L865.6 483.6 L869.1 482.6 L872.7 481.8 L876.3 481.1 L879.8 481.1 L883.4 480.2 L887.0 480.3" fill="none" stroke="#f2ab1c" stroke-width="1.1" stroke-linejoin="round" opacity="1"/>
<path d="M6.9 509.5 L10.5 510.2 L14.0 510.5 L17.6 510.8 L21.2 509.1 L24.7 509.3 L28.3 506.3 L31.8 502.4 L35.4 502.0 L39.0 502.4 L42.5 501.8 L46.1 503.4 L49.7 506.6 L53.2 506.8 L56.8 507.7 L60.3 507.8 L63.9 508.6 L67.5 509.2 L71.0 508.8 L74.6 509.5 L78.2 509.4 L81.7 509.7 L85.3 509.2 L88.8 508.5 L92.4 507.8 L96.0 507.8 L99.5 504.8 L103.1 504.6 L106.7 505.7 L110.2 506.1 L113.8 506.9 L117.4 509.8 L120.9 507.7 L124.5 506.1 L128.0 505.5 L131.6 505.0 L135.2 504.9 L138.7 507.2 L142.3 508.8 L145.9 509.4 L149.4 509.4 L153.0 509.4 L156.5 509.8 L160.1 510.0 L163.7 510.1 L167.2 510.4 L170.8 510.4 L174.4 510.0 L177.9 507.5 L181.5 506.0 L185.1 505.9 L188.6 506.0 L192.2 505.9 L195.7 508.3 L199.3 509.4 L202.9 507.8 L206.4 507.6 L210.0 508.1 L213.6 506.6 L217.1 506.2 L220.7 507.8 L224.2 507.8 L227.8 507.3 L231.4 507.2 L234.9 506.2 L238.5 502.8 L242.1 500.6 L245.6 500.9 L249.2 502.1 L252.7 503.5 L256.3 506.6 L259.9 508.8 L263.4 506.7 L267.0 506.9 L270.6 507.0 L274.1 507.9 L277.7 508.4 L281.3 511.2 L284.8 511.9 L288.4 511.9 L291.9 511.6 L295.5 510.2 L299.1 509.5 L302.6 509.5 L306.2 509.6 L309.8 507.7 L313.3 508.7 L316.9 508.7 L320.4 508.5 L324.0 508.8 L327.6 511.0 L331.1 511.2 L334.7 511.2 L338.3 511.2 L341.8 510.7 L345.4 510.3 L348.9 510.4 L352.5 510.0 L356.1 506.5 L359.6 506.5 L363.2 504.7 L366.8 504.6 L370.3 504.7 L373.9 507.8 L377.5 508.1 L381.0 509.8 L384.6 509.7 L388.1 510.3 L391.7 510.7 L395.3 510.8 L398.8 511.2 L402.4 511.5 L406.0 511.5 L409.5 511.3 L413.1 511.4 L416.6 510.1 L420.2 507.2 L423.8 505.9 L427.3 505.7 L430.9 504.8 L434.5 505.6 L438.0 507.7 L441.6 508.5 L445.1 508.3 L448.7 507.6 L452.3 507.2 L455.8 505.2 L459.4 504.1 L463.0 502.7 L466.5 499.8 L470.1 497.1 L473.7 498.9 L477.2 498.0 L480.8 498.8 L484.3 498.4 L487.9 498.2 L491.5 496.9 L495.0 497.8 L498.6 497.0 L502.2 488.2 L505.7 485.4 L509.3 484.5 L512.8 481.8 L516.4 478.3 L520.0 489.0 L523.5 491.0 L527.1 491.0 L530.7 493.4 L534.2 496.6 L537.8 497.6 L541.4 496.2 L544.9 496.6 L548.5 496.2 L552.0 497.1 L555.6 494.4 L559.2 491.5 L562.7 487.1 L566.3 473.4 L569.9 469.9 L573.4 469.7 L577.0 471.5 L580.5 472.5 L584.1 478.5 L587.7 476.2 L591.2 477.0 L594.8 480.2 L598.4 483.2 L601.9 483.8 L605.5 483.1 L609.0 482.1 L612.6 481.7 L616.2 480.3 L619.7 486.9 L623.3 485.7 L626.9 483.7 L630.4 478.2 L634.0 478.9 L637.6 477.2 L641.1 480.2 L644.7 484.3 L648.2 490.7 L651.8 492.1 L655.4 495.0 L658.9 499.7 L662.5 502.1 L666.1 504.4 L669.6 505.7 L673.2 506.0 L676.7 505.1 L680.3 503.8 L683.9 503.7 L687.4 503.7 L691.0 504.3 L694.6 505.9 L698.1 505.4 L701.7 505.3 L705.2 504.2 L708.8 504.0 L712.4 504.3 L715.9 506.2 L719.5 506.7 L723.1 506.9 L726.6 507.5 L730.2 508.0 L733.8 508.0 L737.3 506.6 L740.9 507.4 L744.4 506.5 L748.0 505.2 L751.6 504.6 L755.1 501.6 L758.7 500.2 L762.3 500.2 L765.8 500.2 L769.4 500.7 L772.9 504.4 L776.5 506.9 L780.1 507.6 L783.6 509.3 L787.2 508.4 L790.8 508.6 L794.3 508.3 L797.9 508.5 L801.4 507.7 L805.0 507.7 L808.6 508.1 L812.1 507.8 L815.7 507.5 L819.3 507.2 L822.8 508.3 L826.4 508.3 L830.0 505.5 L833.5 503.9 L837.1 504.0 L840.6 498.1 L844.2 481.4 L847.8 467.9 L851.3 462.5 L854.9 453.0 L858.5 452.0 L862.0 443.0 L865.6 453.3 L869.1 456.5 L872.7 462.9 L876.3 466.0 L879.8 491.6 L883.4 494.1 L887.0 498.4" fill="none" stroke="#e23bc4" stroke-width="1.0" stroke-linejoin="round" opacity="1"/>
<rect x="8.80" y="54.50" width="5.00" height="6.00" fill="#f4f4f4" stroke="#8a8a8a" stroke-width="1"/>
<rect x="16.00" y="51.00" width="54.30" height="14.20" fill="#e9e9e9" stroke="#cfcfcf" stroke-width="1"/>
<text class="k" x="19.07 30.87 42.67 54.47" y="62.60" fill="#4a4a4a">엘앤에프</text>
<rect x="72.80" y="54.50" width="4.60" height="6.00" fill="#f4f4f4" stroke="#8a8a8a" stroke-width="1"/>
<text class="k" x="83.97 95.97" y="62.60" fill="#e43fc6">종가</text>
<text class="k" x="111.97 123.97" y="62.60" fill="#e43fc6">단순</text>
<text transform="translate(140.50,0) scale(0.751,1)" x="0" y="62.30" font-size="13.40" fill="#e43fc6" stroke="#e43fc6" stroke-width="0.3">5</text>
<text transform="translate(154.20,0) scale(0.751,1)" x="0" y="62.30" font-size="13.40" fill="#2444a8" stroke="#2444a8" stroke-width="0.3">1</text>
<text transform="translate(160.20,0) scale(0.751,1)" x="0" y="62.30" font-size="13.40" fill="#2444a8" stroke="#2444a8" stroke-width="0.3">0</text>
<text transform="translate(174.20,0) scale(0.751,1)" x="0" y="62.30" font-size="13.40" fill="#f0a92a" stroke="#f0a92a" stroke-width="0.3">2</text>
<text transform="translate(180.20,0) scale(0.751,1)" x="0" y="62.30" font-size="13.40" fill="#f0a92a" stroke="#f0a92a" stroke-width="0.3">0</text>
<text transform="translate(194.20,0) scale(0.751,1)" x="0" y="62.30" font-size="13.40" fill="#2fa35a" stroke="#2fa35a" stroke-width="0.3">6</text>
<text transform="translate(200.20,0) scale(0.751,1)" x="0" y="62.30" font-size="13.40" fill="#2fa35a" stroke="#2fa35a" stroke-width="0.3">0</text>
<text transform="translate(215.20,0) scale(0.751,1)" x="0" y="62.30" font-size="13.40" fill="#8a8a8a" stroke="#8a8a8a" stroke-width="0.3">1</text>
<text transform="translate(221.20,0) scale(0.751,1)" x="0" y="62.30" font-size="13.40" fill="#8a8a8a" stroke="#8a8a8a" stroke-width="0.3">2</text>
<text transform="translate(227.20,0) scale(0.751,1)" x="0" y="62.30" font-size="13.40" fill="#8a8a8a" stroke="#8a8a8a" stroke-width="0.3">0</text>
<rect x="10.80" y="69.20" width="13.40" height="13.40" fill="#e4e4e4" stroke="#2a2a2a" stroke-width="1.4" rx="1.5"/>
<line x1="14.15" y1="69.50" x2="14.15" y2="82.50" stroke="#777" stroke-width="0.7"/>
<line x1="17.50" y1="69.50" x2="17.50" y2="82.50" stroke="#777" stroke-width="0.7"/>
<line x1="20.85" y1="69.50" x2="20.85" y2="82.50" stroke="#777" stroke-width="0.7"/>
<line x1="11.00" y1="72.55" x2="24.00" y2="72.55" stroke="#999" stroke-width="0.6"/>
<line x1="11.00" y1="75.90" x2="24.00" y2="75.90" stroke="#999" stroke-width="0.6"/>
<line x1="11.00" y1="79.25" x2="24.00" y2="79.25" stroke="#999" stroke-width="0.6"/>
<text class="k" x="451.17 463.17" y="74.90" fill="#e02020">최고</text>
<text transform="translate(479.70,0) scale(0.751,1)" x="0" y="74.60" font-size="13.40" fill="#e02020" stroke="#e02020" stroke-width="0.3">3</text>
<text transform="translate(485.70,0) scale(0.751,1)" x="0" y="74.60" font-size="13.40" fill="#e02020" stroke="#e02020" stroke-width="0.3">4</text>
<text transform="translate(491.70,0) scale(0.751,1)" x="0" y="74.60" font-size="13.40" fill="#e02020" stroke="#e02020" stroke-width="0.3">9</text>
<text transform="translate(501.70,0) scale(0.751,1)" x="0" y="74.60" font-size="13.40" fill="#e02020" stroke="#e02020" stroke-width="0.3">5</text>
<text transform="translate(507.70,0) scale(0.751,1)" x="0" y="74.60" font-size="13.40" fill="#e02020" stroke="#e02020" stroke-width="0.3">0</text>
<text transform="translate(513.70,0) scale(0.751,1)" x="0" y="74.60" font-size="13.40" fill="#e02020" stroke="#e02020" stroke-width="0.3">0</text>
<text transform="translate(528.70,0) scale(0.751,1)" x="0" y="74.60" font-size="13.40" fill="#e02020" stroke="#e02020" stroke-width="0.3">0</text>
<text transform="translate(534.70,0) scale(0.751,1)" x="0" y="74.60" font-size="13.40" fill="#e02020" stroke="#e02020" stroke-width="0.3">4</text>
<path d="M541.20 75.80L545.60 64.60" stroke="#e02020" stroke-width="0.95" fill="none"/>
<text transform="translate(546.70,0) scale(0.751,1)" x="0" y="74.60" font-size="13.40" fill="#e02020" stroke="#e02020" stroke-width="0.3">0</text>
<text transform="translate(552.70,0) scale(0.751,1)" x="0" y="74.60" font-size="13.40" fill="#e02020" stroke="#e02020" stroke-width="0.3">3</text>
<text transform="scale(0.815,1)" x="611.02 643.17 686.11" y="74.60" font-size="13.40" fill="#e02020" stroke="#e02020" stroke-width="0.3">,()</text>
<path d="M569 70.3h9" stroke="#e0141c" stroke-width="1.3"/><path d="M577 65l7.6 5.3l-7.6 5.3z" fill="#e0141c"/>
<text class="k" x="223.67 235.67" y="346.30" fill="#1a22c8">최저</text>
<text transform="translate(252.20,0) scale(0.751,1)" x="0" y="346.00" font-size="13.40" fill="#1a22c8" stroke="#1a22c8" stroke-width="0.3">1</text>
<text transform="translate(258.20,0) scale(0.751,1)" x="0" y="346.00" font-size="13.40" fill="#1a22c8" stroke="#1a22c8" stroke-width="0.3">6</text>
<text transform="translate(264.20,0) scale(0.751,1)" x="0" y="346.00" font-size="13.40" fill="#1a22c8" stroke="#1a22c8" stroke-width="0.3">8</text>
<text transform="translate(274.20,0) scale(0.751,1)" x="0" y="346.00" font-size="13.40" fill="#1a22c8" stroke="#1a22c8" stroke-width="0.3">7</text>
<text transform="translate(280.20,0) scale(0.751,1)" x="0" y="346.00" font-size="13.40" fill="#1a22c8" stroke="#1a22c8" stroke-width="0.3">0</text>
<text transform="translate(286.20,0) scale(0.751,1)" x="0" y="346.00" font-size="13.40" fill="#1a22c8" stroke="#1a22c8" stroke-width="0.3">0</text>
<text transform="translate(301.20,0) scale(0.751,1)" x="0" y="346.00" font-size="13.40" fill="#1a22c8" stroke="#1a22c8" stroke-width="0.3">1</text>
<text transform="translate(307.20,0) scale(0.751,1)" x="0" y="346.00" font-size="13.40" fill="#1a22c8" stroke="#1a22c8" stroke-width="0.3">2</text>
<path d="M313.70 347.20L318.10 336.00" stroke="#1a22c8" stroke-width="0.95" fill="none"/>
<text transform="translate(319.20,0) scale(0.751,1)" x="0" y="346.00" font-size="13.40" fill="#1a22c8" stroke="#1a22c8" stroke-width="0.3">2</text>
<text transform="translate(325.20,0) scale(0.751,1)" x="0" y="346.00" font-size="13.40" fill="#1a22c8" stroke="#1a22c8" stroke-width="0.3">8</text>
<text transform="scale(0.815,1)" x="331.88 364.03 406.97" y="346.00" font-size="13.40" fill="#1a22c8" stroke="#1a22c8" stroke-width="0.3">,()</text>
<path d="M341 341.4h9" stroke="#1a1ad0" stroke-width="1.3"/><path d="M349 336.1l7.6 5.3l-7.6 5.3z" fill="#1a1ad0"/>
<text class="k" x="316.47 328.47 340.47" y="296.20" fill="#4a4a4a">배당락</text>
<text transform="translate(358.00,0) scale(0.751,1)" x="0" y="295.90" font-size="13.40" fill="#4a4a4a" stroke="#4a4a4a" stroke-width="0.3">0</text>
<text transform="translate(368.00,0) scale(0.751,1)" x="0" y="295.90" font-size="13.40" fill="#4a4a4a" stroke="#4a4a4a" stroke-width="0.3">0</text>
<text transform="translate(374.00,0) scale(0.751,1)" x="0" y="295.90" font-size="13.40" fill="#4a4a4a" stroke="#4a4a4a" stroke-width="0.3">0</text>
<text transform="translate(380.00,0) scale(0.722,1)" x="0" y="295.90" font-size="13.40" fill="#4a4a4a" stroke="#4a4a4a" stroke-width="0.3">%</text>
<text transform="scale(0.815,1)" x="433.72 446.97 477.89" y="295.90" font-size="13.40" fill="#4a4a4a" stroke="#4a4a4a" stroke-width="0.3">(.)</text>
<path d="M356.5 301.3v15" stroke="#e0141c" stroke-width="1"/><path d="M351.3 315.5h10.4l-5.2 5.2z" fill="#e0141c"/>
<rect x="8.80" y="369.50" width="5.00" height="6.00" fill="#f4f4f4" stroke="#8a8a8a" stroke-width="1"/>
<text class="k" x="19.67 31.67 43.67" y="377.60" fill="#3a9fa8">거래량</text>
<text class="k" x="63.67 75.67" y="377.60" fill="#e43fc6">단순</text>
<text transform="translate(92.20,0) scale(0.751,1)" x="0" y="377.30" font-size="13.40" fill="#e43fc6" stroke="#e43fc6" stroke-width="0.3">5</text>
<text transform="translate(106.20,0) scale(0.751,1)" x="0" y="377.30" font-size="13.40" fill="#f0a92a" stroke="#f0a92a" stroke-width="0.3">2</text>
<text transform="translate(112.20,0) scale(0.751,1)" x="0" y="377.30" font-size="13.40" fill="#f0a92a" stroke="#f0a92a" stroke-width="0.3">0</text>
<text transform="translate(126.20,0) scale(0.751,1)" x="0" y="377.30" font-size="13.40" fill="#2fa35a" stroke="#2fa35a" stroke-width="0.3">6</text>
<text transform="translate(132.20,0) scale(0.751,1)" x="0" y="377.30" font-size="13.40" fill="#2fa35a" stroke="#2fa35a" stroke-width="0.3">0</text>
<text transform="translate(146.70,0) scale(0.751,1)" x="0" y="377.30" font-size="13.40" fill="#8a8a8a" stroke="#8a8a8a" stroke-width="0.3">1</text>
<text transform="translate(152.70,0) scale(0.751,1)" x="0" y="377.30" font-size="13.40" fill="#8a8a8a" stroke="#8a8a8a" stroke-width="0.3">2</text>
<text transform="translate(158.70,0) scale(0.751,1)" x="0" y="377.30" font-size="13.40" fill="#8a8a8a" stroke="#8a8a8a" stroke-width="0.3">0</text>
<text transform="translate(9.70,0) scale(0.751,1)" x="0" y="390.30" font-size="13.40" fill="#333" stroke="#333" stroke-width="0.3">2</text>
<text transform="translate(15.70,0) scale(0.751,1)" x="0" y="390.30" font-size="13.40" fill="#333" stroke="#333" stroke-width="0.3">5</text>
<text transform="translate(21.70,0) scale(0.751,1)" x="0" y="390.30" font-size="13.40" fill="#333" stroke="#333" stroke-width="0.3">3</text>
<text transform="translate(31.70,0) scale(0.751,1)" x="0" y="390.30" font-size="13.40" fill="#333" stroke="#333" stroke-width="0.3">3</text>
<text transform="translate(37.70,0) scale(0.751,1)" x="0" y="390.30" font-size="13.40" fill="#333" stroke="#333" stroke-width="0.3">5</text>
<text transform="translate(43.70,0) scale(0.751,1)" x="0" y="390.30" font-size="13.40" fill="#333" stroke="#333" stroke-width="0.3">9</text>
<text class="k" x="49.17" y="390.60" fill="#333">주</text>
<text transform="translate(66.70,0) scale(0.751,1)" x="0" y="390.30" font-size="13.40" fill="#333" stroke="#333" stroke-width="0.3">1</text>
<text transform="translate(72.70,0) scale(0.751,1)" x="0" y="390.30" font-size="13.40" fill="#333" stroke="#333" stroke-width="0.3">7</text>
<text transform="translate(82.70,0) scale(0.751,1)" x="0" y="390.30" font-size="13.40" fill="#333" stroke="#333" stroke-width="0.3">3</text>
<text transform="translate(88.70,0) scale(0.751,1)" x="0" y="390.30" font-size="13.40" fill="#333" stroke="#333" stroke-width="0.3">2</text>
<text transform="translate(94.70,0) scale(0.722,1)" x="0" y="390.30" font-size="13.40" fill="#333" stroke="#333" stroke-width="0.3">%</text>
<text transform="scale(0.815,1)" x="34.33 76.30 96.91 127.83" y="390.30" font-size="13.40" fill="#333" stroke="#333" stroke-width="0.3">,(.)</text>
<line x1="921.00" y1="74.96" x2="923.80" y2="74.96" stroke="#7a7a7a" stroke-width="1"/>
<line x1="921.00" y1="81.10" x2="927.50" y2="81.10" stroke="#7a7a7a" stroke-width="1"/>
<line x1="921.00" y1="87.24" x2="923.80" y2="87.24" stroke="#7a7a7a" stroke-width="1"/>
<line x1="921.00" y1="93.39" x2="923.80" y2="93.39" stroke="#7a7a7a" stroke-width="1"/>
<line x1="921.00" y1="99.53" x2="923.80" y2="99.53" stroke="#7a7a7a" stroke-width="1"/>
<line x1="921.00" y1="105.68" x2="923.80" y2="105.68" stroke="#7a7a7a" stroke-width="1"/>
<line x1="921.00" y1="111.82" x2="927.50" y2="111.82" stroke="#7a7a7a" stroke-width="1"/>
<line x1="921.00" y1="117.96" x2="923.80" y2="117.96" stroke="#7a7a7a" stroke-width="1"/>
<line x1="921.00" y1="124.11" x2="923.80" y2="124.11" stroke="#7a7a7a" stroke-width="1"/>
<line x1="921.00" y1="130.25" x2="923.80" y2="130.25" stroke="#7a7a7a" stroke-width="1"/>
<line x1="921.00" y1="136.40" x2="923.80" y2="136.40" stroke="#7a7a7a" stroke-width="1"/>
<line x1="921.00" y1="142.54" x2="927.50" y2="142.54" stroke="#7a7a7a" stroke-width="1"/>
<line x1="921.00" y1="148.68" x2="923.80" y2="148.68" stroke="#7a7a7a" stroke-width="1"/>
<line x1="921.00" y1="154.83" x2="923.80" y2="154.83" stroke="#7a7a7a" stroke-width="1"/>
<line x1="921.00" y1="160.97" x2="923.80" y2="160.97" stroke="#7a7a7a" stroke-width="1"/>
<line x1="921.00" y1="167.12" x2="923.80" y2="167.12" stroke="#7a7a7a" stroke-width="1"/>
<line x1="921.00" y1="173.26" x2="927.50" y2="173.26" stroke="#7a7a7a" stroke-width="1"/>
<line x1="921.00" y1="179.40" x2="923.80" y2="179.40" stroke="#7a7a7a" stroke-width="1"/>
<line x1="921.00" y1="185.55" x2="923.80" y2="185.55" stroke="#7a7a7a" stroke-width="1"/>
<line x1="921.00" y1="191.69" x2="923.80" y2="191.69" stroke="#7a7a7a" stroke-width="1"/>
<line x1="921.00" y1="197.84" x2="923.80" y2="197.84" stroke="#7a7a7a" stroke-width="1"/>
<line x1="921.00" y1="203.98" x2="927.50" y2="203.98" stroke="#7a7a7a" stroke-width="1"/>
<line x1="921.00" y1="210.12" x2="923.80" y2="210.12" stroke="#7a7a7a" stroke-width="1"/>
<line x1="921.00" y1="216.27" x2="923.80" y2="216.27" stroke="#7a7a7a" stroke-width="1"/>
<line x1="921.00" y1="222.41" x2="923.80" y2="222.41" stroke="#7a7a7a" stroke-width="1"/>
<line x1="921.00" y1="228.56" x2="923.80" y2="228.56" stroke="#7a7a7a" stroke-width="1"/>
<line x1="921.00" y1="234.70" x2="927.50" y2="234.70" stroke="#7a7a7a" stroke-width="1"/>
<line x1="921.00" y1="240.84" x2="923.80" y2="240.84" stroke="#7a7a7a" stroke-width="1"/>
<line x1="921.00" y1="246.99" x2="923.80" y2="246.99" stroke="#7a7a7a" stroke-width="1"/>
<line x1="921.00" y1="253.13" x2="923.80" y2="253.13" stroke="#7a7a7a" stroke-width="1"/>
<line x1="921.00" y1="259.28" x2="923.80" y2="259.28" stroke="#7a7a7a" stroke-width="1"/>
<line x1="921.00" y1="265.42" x2="927.50" y2="265.42" stroke="#7a7a7a" stroke-width="1"/>
<line x1="921.00" y1="271.56" x2="923.80" y2="271.56" stroke="#7a7a7a" stroke-width="1"/>
<line x1="921.00" y1="277.71" x2="923.80" y2="277.71" stroke="#7a7a7a" stroke-width="1"/>
<line x1="921.00" y1="283.85" x2="923.80" y2="283.85" stroke="#7a7a7a" stroke-width="1"/>
<line x1="921.00" y1="290.00" x2="923.80" y2="290.00" stroke="#7a7a7a" stroke-width="1"/>
<line x1="921.00" y1="296.14" x2="927.50" y2="296.14" stroke="#7a7a7a" stroke-width="1"/>
<line x1="921.00" y1="302.28" x2="923.80" y2="302.28" stroke="#7a7a7a" stroke-width="1"/>
<line x1="921.00" y1="308.43" x2="923.80" y2="308.43" stroke="#7a7a7a" stroke-width="1"/>
<line x1="921.00" y1="314.57" x2="923.80" y2="314.57" stroke="#7a7a7a" stroke-width="1"/>
<line x1="921.00" y1="320.72" x2="923.80" y2="320.72" stroke="#7a7a7a" stroke-width="1"/>
<line x1="921.00" y1="326.86" x2="927.50" y2="326.86" stroke="#7a7a7a" stroke-width="1"/>
<line x1="921.00" y1="333.00" x2="923.80" y2="333.00" stroke="#7a7a7a" stroke-width="1"/>
<line x1="921.00" y1="339.15" x2="923.80" y2="339.15" stroke="#7a7a7a" stroke-width="1"/>
<line x1="921.00" y1="345.29" x2="923.80" y2="345.29" stroke="#7a7a7a" stroke-width="1"/>
<line x1="921.00" y1="351.44" x2="923.80" y2="351.44" stroke="#7a7a7a" stroke-width="1"/>
<line x1="921.00" y1="357.58" x2="927.50" y2="357.58" stroke="#7a7a7a" stroke-width="1"/>
<text transform="translate(929.20,0) scale(0.751,1)" x="0" y="329.96" font-size="13.40" fill="#4a4a4a" stroke="#4a4a4a" stroke-width="0.3">1</text>
<text transform="translate(935.20,0) scale(0.751,1)" x="0" y="329.96" font-size="13.40" fill="#4a4a4a" stroke="#4a4a4a" stroke-width="0.3">8</text>
<text transform="translate(941.20,0) scale(0.751,1)" x="0" y="329.96" font-size="13.40" fill="#4a4a4a" stroke="#4a4a4a" stroke-width="0.3">0</text>
<text transform="translate(951.20,0) scale(0.751,1)" x="0" y="329.96" font-size="13.40" fill="#4a4a4a" stroke="#4a4a4a" stroke-width="0.3">0</text>
<text transform="translate(957.20,0) scale(0.751,1)" x="0" y="329.96" font-size="13.40" fill="#4a4a4a" stroke="#4a4a4a" stroke-width="0.3">0</text>
<text transform="translate(963.20,0) scale(0.751,1)" x="0" y="329.96" font-size="13.40" fill="#4a4a4a" stroke="#4a4a4a" stroke-width="0.3">0</text>
<text transform="scale(0.815,1)" x="1162.56" y="329.96" font-size="13.40" fill="#4a4a4a" stroke="#4a4a4a" stroke-width="0.3">,</text>
<text transform="translate(929.20,0) scale(0.751,1)" x="0" y="299.24" font-size="13.40" fill="#4a4a4a" stroke="#4a4a4a" stroke-width="0.3">2</text>
<text transform="translate(935.20,0) scale(0.751,1)" x="0" y="299.24" font-size="13.40" fill="#4a4a4a" stroke="#4a4a4a" stroke-width="0.3">0</text>
<text transform="translate(941.20,0) scale(0.751,1)" x="0" y="299.24" font-size="13.40" fill="#4a4a4a" stroke="#4a4a4a" stroke-width="0.3">0</text>
<text transform="translate(951.20,0) scale(0.751,1)" x="0" y="299.24" font-size="13.40" fill="#4a4a4a" stroke="#4a4a4a" stroke-width="0.3">0</text>
<text transform="translate(957.20,0) scale(0.751,1)" x="0" y="299.24" font-size="13.40" fill="#4a4a4a" stroke="#4a4a4a" stroke-width="0.3">0</text>
<text transform="translate(963.20,0) scale(0.751,1)" x="0" y="299.24" font-size="13.40" fill="#4a4a4a" stroke="#4a4a4a" stroke-width="0.3">0</text>
<text transform="scale(0.815,1)" x="1162.56" y="299.24" font-size="13.40" fill="#4a4a4a" stroke="#4a4a4a" stroke-width="0.3">,</text>
<text transform="translate(929.20,0) scale(0.751,1)" x="0" y="268.52" font-size="13.40" fill="#4a4a4a" stroke="#4a4a4a" stroke-width="0.3">2</text>
<text transform="translate(935.20,0) scale(0.751,1)" x="0" y="268.52" font-size="13.40" fill="#4a4a4a" stroke="#4a4a4a" stroke-width="0.3">2</text>
<text transform="translate(941.20,0) scale(0.751,1)" x="0" y="268.52" font-size="13.40" fill="#4a4a4a" stroke="#4a4a4a" stroke-width="0.3">0</text>
<text transform="translate(951.20,0) scale(0.751,1)" x="0" y="268.52" font-size="13.40" fill="#4a4a4a" stroke="#4a4a4a" stroke-width="0.3">0</text>
<text transform="translate(957.20,0) scale(0.751,1)" x="0" y="268.52" font-size="13.40" fill="#4a4a4a" stroke="#4a4a4a" stroke-width="0.3">0</text>
<text transform="translate(963.20,0) scale(0.751,1)" x="0" y="268.52" font-size="13.40" fill="#4a4a4a" stroke="#4a4a4a" stroke-width="0.3">0</text>
<text transform="scale(0.815,1)" x="1162.56" y="268.52" font-size="13.40" fill="#4a4a4a" stroke="#4a4a4a" stroke-width="0.3">,</text>
<text transform="translate(929.20,0) scale(0.751,1)" x="0" y="237.80" font-size="13.40" fill="#4a4a4a" stroke="#4a4a4a" stroke-width="0.3">2</text>
<text transform="translate(935.20,0) scale(0.751,1)" x="0" y="237.80" font-size="13.40" fill="#4a4a4a" stroke="#4a4a4a" stroke-width="0.3">4</text>
<text transform="translate(941.20,0) scale(0.751,1)" x="0" y="237.80" font-size="13.40" fill="#4a4a4a" stroke="#4a4a4a" stroke-width="0.3">0</text>
<text transform="translate(951.20,0) scale(0.751,1)" x="0" y="237.80" font-size="13.40" fill="#4a4a4a" stroke="#4a4a4a" stroke-width="0.3">0</text>
<text transform="translate(957.20,0) scale(0.751,1)" x="0" y="237.80" font-size="13.40" fill="#4a4a4a" stroke="#4a4a4a" stroke-width="0.3">0</text>
<text transform="translate(963.20,0) scale(0.751,1)" x="0" y="237.80" font-size="13.40" fill="#4a4a4a" stroke="#4a4a4a" stroke-width="0.3">0</text>
<text transform="scale(0.815,1)" x="1162.56" y="237.80" font-size="13.40" fill="#4a4a4a" stroke="#4a4a4a" stroke-width="0.3">,</text>
<text transform="translate(929.20,0) scale(0.751,1)" x="0" y="207.08" font-size="13.40" fill="#4a4a4a" stroke="#4a4a4a" stroke-width="0.3">2</text>
<text transform="translate(935.20,0) scale(0.751,1)" x="0" y="207.08" font-size="13.40" fill="#4a4a4a" stroke="#4a4a4a" stroke-width="0.3">6</text>
<text transform="translate(941.20,0) scale(0.751,1)" x="0" y="207.08" font-size="13.40" fill="#4a4a4a" stroke="#4a4a4a" stroke-width="0.3">0</text>
<text transform="translate(951.20,0) scale(0.751,1)" x="0" y="207.08" font-size="13.40" fill="#4a4a4a" stroke="#4a4a4a" stroke-width="0.3">0</text>
<text transform="translate(957.20,0) scale(0.751,1)" x="0" y="207.08" font-size="13.40" fill="#4a4a4a" stroke="#4a4a4a" stroke-width="0.3">0</text>
<text transform="translate(963.20,0) scale(0.751,1)" x="0" y="207.08" font-size="13.40" fill="#4a4a4a" stroke="#4a4a4a" stroke-width="0.3">0</text>
<text transform="scale(0.815,1)" x="1162.56" y="207.08" font-size="13.40" fill="#4a4a4a" stroke="#4a4a4a" stroke-width="0.3">,</text>
<text transform="translate(929.20,0) scale(0.751,1)" x="0" y="176.36" font-size="13.40" fill="#4a4a4a" stroke="#4a4a4a" stroke-width="0.3">2</text>
<text transform="translate(935.20,0) scale(0.751,1)" x="0" y="176.36" font-size="13.40" fill="#4a4a4a" stroke="#4a4a4a" stroke-width="0.3">8</text>
<text transform="translate(941.20,0) scale(0.751,1)" x="0" y="176.36" font-size="13.40" fill="#4a4a4a" stroke="#4a4a4a" stroke-width="0.3">0</text>
<text transform="translate(951.20,0) scale(0.751,1)" x="0" y="176.36" font-size="13.40" fill="#4a4a4a" stroke="#4a4a4a" stroke-width="0.3">0</text>
<text transform="translate(957.20,0) scale(0.751,1)" x="0" y="176.36" font-size="13.40" fill="#4a4a4a" stroke="#4a4a4a" stroke-width="0.3">0</text>
<text transform="translate(963.20,0) scale(0.751,1)" x="0" y="176.36" font-size="13.40" fill="#4a4a4a" stroke="#4a4a4a" stroke-width="0.3">0</text>
<text transform="scale(0.815,1)" x="1162.56" y="176.36" font-size="13.40" fill="#4a4a4a" stroke="#4a4a4a" stroke-width="0.3">,</text>
<text transform="translate(929.20,0) scale(0.751,1)" x="0" y="145.64" font-size="13.40" fill="#4a4a4a" stroke="#4a4a4a" stroke-width="0.3">3</text>
<text transform="translate(935.20,0) scale(0.751,1)" x="0" y="145.64" font-size="13.40" fill="#4a4a4a" stroke="#4a4a4a" stroke-width="0.3">0</text>
<text transform="translate(941.20,0) scale(0.751,1)" x="0" y="145.64" font-size="13.40" fill="#4a4a4a" stroke="#4a4a4a" stroke-width="0.3">0</text>
<text transform="translate(951.20,0) scale(0.751,1)" x="0" y="145.64" font-size="13.40" fill="#4a4a4a" stroke="#4a4a4a" stroke-width="0.3">0</text>
<text transform="translate(957.20,0) scale(0.751,1)" x="0" y="145.64" font-size="13.40" fill="#4a4a4a" stroke="#4a4a4a" stroke-width="0.3">0</text>
<text transform="translate(963.20,0) scale(0.751,1)" x="0" y="145.64" font-size="13.40" fill="#4a4a4a" stroke="#4a4a4a" stroke-width="0.3">0</text>
<text transform="scale(0.815,1)" x="1162.56" y="145.64" font-size="13.40" fill="#4a4a4a" stroke="#4a4a4a" stroke-width="0.3">,</text>
<text transform="translate(929.20,0) scale(0.751,1)" x="0" y="114.92" font-size="13.40" fill="#4a4a4a" stroke="#4a4a4a" stroke-width="0.3">3</text>
<text transform="translate(935.20,0) scale(0.751,1)" x="0" y="114.92" font-size="13.40" fill="#4a4a4a" stroke="#4a4a4a" stroke-width="0.3">2</text>
<text transform="translate(941.20,0) scale(0.751,1)" x="0" y="114.92" font-size="13.40" fill="#4a4a4a" stroke="#4a4a4a" stroke-width="0.3">0</text>
<text transform="translate(951.20,0) scale(0.751,1)" x="0" y="114.92" font-size="13.40" fill="#4a4a4a" stroke="#4a4a4a" stroke-width="0.3">0</text>
<text transform="translate(957.20,0) scale(0.751,1)" x="0" y="114.92" font-size="13.40" fill="#4a4a4a" stroke="#4a4a4a" stroke-width="0.3">0</text>
<text transform="translate(963.20,0) scale(0.751,1)" x="0" y="114.92" font-size="13.40" fill="#4a4a4a" stroke="#4a4a4a" stroke-width="0.3">0</text>
<text transform="scale(0.815,1)" x="1162.56" y="114.92" font-size="13.40" fill="#4a4a4a" stroke="#4a4a4a" stroke-width="0.3">,</text>
<text transform="translate(929.20,0) scale(0.751,1)" x="0" y="84.20" font-size="13.40" fill="#4a4a4a" stroke="#4a4a4a" stroke-width="0.3">3</text>
<text transform="translate(935.20,0) scale(0.751,1)" x="0" y="84.20" font-size="13.40" fill="#4a4a4a" stroke="#4a4a4a" stroke-width="0.3">4</text>
<text transform="translate(941.20,0) scale(0.751,1)" x="0" y="84.20" font-size="13.40" fill="#4a4a4a" stroke="#4a4a4a" stroke-width="0.3">0</text>
<text transform="translate(951.20,0) scale(0.751,1)" x="0" y="84.20" font-size="13.40" fill="#4a4a4a" stroke="#4a4a4a" stroke-width="0.3">0</text>
<text transform="translate(957.20,0) scale(0.751,1)" x="0" y="84.20" font-size="13.40" fill="#4a4a4a" stroke="#4a4a4a" stroke-width="0.3">0</text>
<text transform="translate(963.20,0) scale(0.751,1)" x="0" y="84.20" font-size="13.40" fill="#4a4a4a" stroke="#4a4a4a" stroke-width="0.3">0</text>
<text transform="scale(0.815,1)" x="1162.56" y="84.20" font-size="13.40" fill="#4a4a4a" stroke="#4a4a4a" stroke-width="0.3">,</text>
<rect x="921.50" y="49.00" width="62.00" height="26.30" fill="#dce6f2"/>
<text transform="translate(942.70,0) scale(0.751,1)" x="0" y="62.00" font-size="13.40" fill="#d42a2a" stroke="#d42a2a" stroke-width="0.3">3</text>
<text transform="translate(948.70,0) scale(0.751,1)" x="0" y="62.00" font-size="13.40" fill="#d42a2a" stroke="#d42a2a" stroke-width="0.3">9</text>
<text transform="translate(958.70,0) scale(0.751,1)" x="0" y="62.00" font-size="13.40" fill="#d42a2a" stroke="#d42a2a" stroke-width="0.3">8</text>
<text transform="translate(964.70,0) scale(0.751,1)" x="0" y="62.00" font-size="13.40" fill="#d42a2a" stroke="#d42a2a" stroke-width="0.3">9</text>
<text transform="scale(0.815,1)" x="1132.47 1141.48 1152.13 1171.76" y="62.00" font-size="13.40" fill="#d42a2a" stroke="#d42a2a" stroke-width="0.3">LC:.</text>
<text transform="translate(949.20,0) scale(0.751,1)" x="0" y="73.50" font-size="13.40" fill="#2b5fc0" stroke="#2b5fc0" stroke-width="0.3">3</text>
<text transform="translate(955.20,0) scale(0.751,1)" x="0" y="73.50" font-size="13.40" fill="#2b5fc0" stroke="#2b5fc0" stroke-width="0.3">2</text>
<text transform="translate(965.20,0) scale(0.751,1)" x="0" y="73.50" font-size="13.40" fill="#2b5fc0" stroke="#2b5fc0" stroke-width="0.3">4</text>
<text transform="translate(971.20,0) scale(0.751,1)" x="0" y="73.50" font-size="13.40" fill="#2b5fc0" stroke="#2b5fc0" stroke-width="0.3">7</text>
<text transform="scale(0.815,1)" x="1131.66 1142.09 1152.74 1158.51 1179.73" y="73.50" font-size="13.40" fill="#2b5fc0" stroke="#2b5fc0" stroke-width="0.3">HC:-.</text>
<rect x="926.00" y="233.30" width="58.00" height="11.80" fill="#1552c8"/>
<text transform="translate(929.20,0) scale(0.751,1)" x="0" y="243.80" font-size="13.40" fill="#ffffff" stroke="#ffffff" stroke-width="0.3">2</text>
<text transform="translate(935.20,0) scale(0.751,1)" x="0" y="243.80" font-size="13.40" fill="#ffffff" stroke="#ffffff" stroke-width="0.3">3</text>
<text transform="translate(941.20,0) scale(0.751,1)" x="0" y="243.80" font-size="13.40" fill="#ffffff" stroke="#ffffff" stroke-width="0.3">6</text>
<text transform="translate(951.20,0) scale(0.751,1)" x="0" y="243.80" font-size="13.40" fill="#ffffff" stroke="#ffffff" stroke-width="0.3">0</text>
<text transform="translate(957.20,0) scale(0.751,1)" x="0" y="243.80" font-size="13.40" fill="#ffffff" stroke="#ffffff" stroke-width="0.3">0</text>
<text transform="translate(963.20,0) scale(0.751,1)" x="0" y="243.80" font-size="13.40" fill="#ffffff" stroke="#ffffff" stroke-width="0.3">0</text>
<text transform="scale(0.815,1)" x="1162.56" y="243.80" font-size="13.40" fill="#ffffff" stroke="#ffffff" stroke-width="0.3">,</text>
<text transform="translate(935.20,0) scale(0.751,1)" x="0" y="255.80" font-size="13.40" fill="#2b5fc0" stroke="#2b5fc0" stroke-width="0.3">3</text>
<text transform="translate(945.20,0) scale(0.751,1)" x="0" y="255.80" font-size="13.40" fill="#2b5fc0" stroke="#2b5fc0" stroke-width="0.3">2</text>
<text transform="translate(951.20,0) scale(0.751,1)" x="0" y="255.80" font-size="13.40" fill="#2b5fc0" stroke="#2b5fc0" stroke-width="0.3">8</text>
<text transform="translate(957.20,0) scale(0.722,1)" x="0" y="255.80" font-size="13.40" fill="#2b5fc0" stroke="#2b5fc0" stroke-width="0.3">%</text>
<text transform="scale(0.815,1)" x="1141.33 1155.19" y="255.80" font-size="13.40" fill="#2b5fc0" stroke="#2b5fc0" stroke-width="0.3">-.</text>
<line x1="921.00" y1="518.00" x2="923.80" y2="518.00" stroke="#7a7a7a" stroke-width="1"/>
<line x1="921.00" y1="508.27" x2="923.80" y2="508.27" stroke="#7a7a7a" stroke-width="1"/>
<line x1="921.00" y1="498.55" x2="927.50" y2="498.55" stroke="#7a7a7a" stroke-width="1"/>
<line x1="921.00" y1="488.82" x2="923.80" y2="488.82" stroke="#7a7a7a" stroke-width="1"/>
<line x1="921.00" y1="479.10" x2="927.50" y2="479.10" stroke="#7a7a7a" stroke-width="1"/>
<line x1="921.00" y1="469.38" x2="923.80" y2="469.38" stroke="#7a7a7a" stroke-width="1"/>
<line x1="921.00" y1="459.65" x2="927.50" y2="459.65" stroke="#7a7a7a" stroke-width="1"/>
<line x1="921.00" y1="449.93" x2="923.80" y2="449.93" stroke="#7a7a7a" stroke-width="1"/>
<line x1="921.00" y1="440.20" x2="927.50" y2="440.20" stroke="#7a7a7a" stroke-width="1"/>
<line x1="921.00" y1="430.48" x2="923.80" y2="430.48" stroke="#7a7a7a" stroke-width="1"/>
<line x1="921.00" y1="420.75" x2="927.50" y2="420.75" stroke="#7a7a7a" stroke-width="1"/>
<line x1="921.00" y1="411.02" x2="923.80" y2="411.02" stroke="#7a7a7a" stroke-width="1"/>
<line x1="921.00" y1="401.30" x2="927.50" y2="401.30" stroke="#7a7a7a" stroke-width="1"/>
<line x1="921.00" y1="391.57" x2="923.80" y2="391.57" stroke="#7a7a7a" stroke-width="1"/>
<line x1="921.00" y1="381.85" x2="927.50" y2="381.85" stroke="#7a7a7a" stroke-width="1"/>
<line x1="921.00" y1="372.12" x2="923.80" y2="372.12" stroke="#7a7a7a" stroke-width="1"/>
<text transform="translate(929.20,0) scale(0.751,1)" x="0" y="482.20" font-size="13.40" fill="#4a4a4a" stroke="#4a4a4a" stroke-width="0.3">2</text>
<text transform="translate(939.20,0) scale(0.751,1)" x="0" y="482.20" font-size="13.40" fill="#4a4a4a" stroke="#4a4a4a" stroke-width="0.3">0</text>
<text transform="translate(945.20,0) scale(0.751,1)" x="0" y="482.20" font-size="13.40" fill="#4a4a4a" stroke="#4a4a4a" stroke-width="0.3">0</text>
<text transform="translate(951.20,0) scale(0.751,1)" x="0" y="482.20" font-size="13.40" fill="#4a4a4a" stroke="#4a4a4a" stroke-width="0.3">0</text>
<text transform="scale(0.815,1)" x="1147.83 1174.67" y="482.20" font-size="13.40" fill="#4a4a4a" stroke="#4a4a4a" stroke-width="0.3">,K</text>
<text transform="translate(929.20,0) scale(0.751,1)" x="0" y="462.75" font-size="13.40" fill="#4a4a4a" stroke="#4a4a4a" stroke-width="0.3">3</text>
<text transform="translate(939.20,0) scale(0.751,1)" x="0" y="462.75" font-size="13.40" fill="#4a4a4a" stroke="#4a4a4a" stroke-width="0.3">0</text>
<text transform="translate(945.20,0) scale(0.751,1)" x="0" y="462.75" font-size="13.40" fill="#4a4a4a" stroke="#4a4a4a" stroke-width="0.3">0</text>
<text transform="translate(951.20,0) scale(0.751,1)" x="0" y="462.75" font-size="13.40" fill="#4a4a4a" stroke="#4a4a4a" stroke-width="0.3">0</text>
<text transform="scale(0.815,1)" x="1147.83 1174.67" y="462.75" font-size="13.40" fill="#4a4a4a" stroke="#4a4a4a" stroke-width="0.3">,K</text>
<text transform="translate(929.20,0) scale(0.751,1)" x="0" y="443.30" font-size="13.40" fill="#4a4a4a" stroke="#4a4a4a" stroke-width="0.3">4</text>
<text transform="translate(939.20,0) scale(0.751,1)" x="0" y="443.30" font-size="13.40" fill="#4a4a4a" stroke="#4a4a4a" stroke-width="0.3">0</text>
<text transform="translate(945.20,0) scale(0.751,1)" x="0" y="443.30" font-size="13.40" fill="#4a4a4a" stroke="#4a4a4a" stroke-width="0.3">0</text>
<text transform="translate(951.20,0) scale(0.751,1)" x="0" y="443.30" font-size="13.40" fill="#4a4a4a" stroke="#4a4a4a" stroke-width="0.3">0</text>
<text transform="scale(0.815,1)" x="1147.83 1174.67" y="443.30" font-size="13.40" fill="#4a4a4a" stroke="#4a4a4a" stroke-width="0.3">,K</text>
<text transform="translate(929.20,0) scale(0.751,1)" x="0" y="423.85" font-size="13.40" fill="#4a4a4a" stroke="#4a4a4a" stroke-width="0.3">5</text>
<text transform="translate(939.20,0) scale(0.751,1)" x="0" y="423.85" font-size="13.40" fill="#4a4a4a" stroke="#4a4a4a" stroke-width="0.3">0</text>
<text transform="translate(945.20,0) scale(0.751,1)" x="0" y="423.85" font-size="13.40" fill="#4a4a4a" stroke="#4a4a4a" stroke-width="0.3">0</text>
<text transform="translate(951.20,0) scale(0.751,1)" x="0" y="423.85" font-size="13.40" fill="#4a4a4a" stroke="#4a4a4a" stroke-width="0.3">0</text>
<text transform="scale(0.815,1)" x="1147.83 1174.67" y="423.85" font-size="13.40" fill="#4a4a4a" stroke="#4a4a4a" stroke-width="0.3">,K</text>
<text transform="translate(929.20,0) scale(0.751,1)" x="0" y="404.40" font-size="13.40" fill="#4a4a4a" stroke="#4a4a4a" stroke-width="0.3">6</text>
<text transform="translate(939.20,0) scale(0.751,1)" x="0" y="404.40" font-size="13.40" fill="#4a4a4a" stroke="#4a4a4a" stroke-width="0.3">0</text>
<text transform="translate(945.20,0) scale(0.751,1)" x="0" y="404.40" font-size="13.40" fill="#4a4a4a" stroke="#4a4a4a" stroke-width="0.3">0</text>
<text transform="translate(951.20,0) scale(0.751,1)" x="0" y="404.40" font-size="13.40" fill="#4a4a4a" stroke="#4a4a4a" stroke-width="0.3">0</text>
<text transform="scale(0.815,1)" x="1147.83 1174.67" y="404.40" font-size="13.40" fill="#4a4a4a" stroke="#4a4a4a" stroke-width="0.3">,K</text>
<text transform="translate(929.20,0) scale(0.751,1)" x="0" y="384.95" font-size="13.40" fill="#4a4a4a" stroke="#4a4a4a" stroke-width="0.3">7</text>
<text transform="translate(939.20,0) scale(0.751,1)" x="0" y="384.95" font-size="13.40" fill="#4a4a4a" stroke="#4a4a4a" stroke-width="0.3">0</text>
<text transform="translate(945.20,0) scale(0.751,1)" x="0" y="384.95" font-size="13.40" fill="#4a4a4a" stroke="#4a4a4a" stroke-width="0.3">0</text>
<text transform="translate(951.20,0) scale(0.751,1)" x="0" y="384.95" font-size="13.40" fill="#4a4a4a" stroke="#4a4a4a" stroke-width="0.3">0</text>
<text transform="scale(0.815,1)" x="1147.83 1174.67" y="384.95" font-size="13.40" fill="#4a4a4a" stroke="#4a4a4a" stroke-width="0.3">,K</text>
<text transform="translate(929.20,0) scale(0.751,1)" x="0" y="501.65" font-size="13.40" fill="#4a4a4a" stroke="#4a4a4a" stroke-width="0.3">1</text>
<text transform="translate(939.20,0) scale(0.751,1)" x="0" y="501.65" font-size="13.40" fill="#4a4a4a" stroke="#4a4a4a" stroke-width="0.3">0</text>
<text transform="translate(945.20,0) scale(0.751,1)" x="0" y="501.65" font-size="13.40" fill="#4a4a4a" stroke="#4a4a4a" stroke-width="0.3">0</text>
<text transform="translate(951.20,0) scale(0.751,1)" x="0" y="501.65" font-size="13.40" fill="#4a4a4a" stroke="#4a4a4a" stroke-width="0.3">0</text>
<text transform="scale(0.815,1)" x="1147.83 1174.67" y="501.65" font-size="13.40" fill="#4a4a4a" stroke="#4a4a4a" stroke-width="0.3">,K</text>
<rect x="926.00" y="492.80" width="58.00" height="12.40" fill="#1552c8"/>
<text transform="translate(929.20,0) scale(0.751,1)" x="0" y="503.60" font-size="13.40" fill="#ffffff" stroke="#ffffff" stroke-width="0.3">2</text>
<text transform="translate(935.20,0) scale(0.751,1)" x="0" y="503.60" font-size="13.40" fill="#ffffff" stroke="#ffffff" stroke-width="0.3">5</text>
<text transform="translate(941.20,0) scale(0.751,1)" x="0" y="503.60" font-size="13.40" fill="#ffffff" stroke="#ffffff" stroke-width="0.3">3</text>
<text transform="translate(951.20,0) scale(0.751,1)" x="0" y="503.60" font-size="13.40" fill="#ffffff" stroke="#ffffff" stroke-width="0.3">3</text>
<text transform="translate(957.20,0) scale(0.751,1)" x="0" y="503.60" font-size="13.40" fill="#ffffff" stroke="#ffffff" stroke-width="0.3">5</text>
<text transform="translate(963.20,0) scale(0.751,1)" x="0" y="503.60" font-size="13.40" fill="#ffffff" stroke="#ffffff" stroke-width="0.3">9</text>
<text transform="scale(0.815,1)" x="1162.56" y="503.60" font-size="13.40" fill="#ffffff" stroke="#ffffff" stroke-width="0.3">,</text>
<text transform="translate(929.20,0) scale(0.751,1)" x="0" y="515.60" font-size="13.40" fill="#2b5fc0" stroke="#2b5fc0" stroke-width="0.3">1</text>
<text transform="translate(935.20,0) scale(0.751,1)" x="0" y="515.60" font-size="13.40" fill="#2b5fc0" stroke="#2b5fc0" stroke-width="0.3">7</text>
<text transform="translate(945.20,0) scale(0.751,1)" x="0" y="515.60" font-size="13.40" fill="#2b5fc0" stroke="#2b5fc0" stroke-width="0.3">3</text>
<text transform="translate(951.20,0) scale(0.751,1)" x="0" y="515.60" font-size="13.40" fill="#2b5fc0" stroke="#2b5fc0" stroke-width="0.3">2</text>
<text transform="translate(957.20,0) scale(0.722,1)" x="0" y="515.60" font-size="13.40" fill="#2b5fc0" stroke="#2b5fc0" stroke-width="0.3">%</text>
<text transform="scale(0.815,1)" x="1155.19" y="515.60" font-size="13.40" fill="#2b5fc0" stroke="#2b5fc0" stroke-width="0.3">.</text>
<rect x="976.30" y="367.20" width="7.40" height="6.40" fill="#444" stroke="#333" stroke-width="0.8"/>
<path d="M978.2 368.7l3.6 3.4M981.8 368.7l-3.6 3.4" stroke="#eee" stroke-width="0.9"/>
<text transform="translate(7.00,0) scale(0.751,1)" x="0" y="532.00" font-size="13.40" fill="#4a4a4a" stroke="#4a4a4a" stroke-width="0.3">2</text>
<text transform="translate(13.00,0) scale(0.751,1)" x="0" y="532.00" font-size="13.40" fill="#4a4a4a" stroke="#4a4a4a" stroke-width="0.3">0</text>
<text transform="translate(19.00,0) scale(0.751,1)" x="0" y="532.00" font-size="13.40" fill="#4a4a4a" stroke="#4a4a4a" stroke-width="0.3">2</text>
<text transform="translate(25.00,0) scale(0.751,1)" x="0" y="532.00" font-size="13.40" fill="#4a4a4a" stroke="#4a4a4a" stroke-width="0.3">2</text>
<path d="M31.50 533.20L35.90 522.00" stroke="#4a4a4a" stroke-width="0.95" fill="none"/>
<text transform="translate(37.00,0) scale(0.751,1)" x="0" y="532.00" font-size="13.40" fill="#4a4a4a" stroke="#4a4a4a" stroke-width="0.3">0</text>
<text transform="translate(43.00,0) scale(0.751,1)" x="0" y="532.00" font-size="13.40" fill="#4a4a4a" stroke="#4a4a4a" stroke-width="0.3">8</text>
<text transform="translate(71.80,0) scale(0.751,1)" x="0" y="532.00" font-size="13.40" fill="#4a4a4a" stroke="#4a4a4a" stroke-width="0.3">0</text>
<text transform="translate(77.80,0) scale(0.751,1)" x="0" y="532.00" font-size="13.40" fill="#4a4a4a" stroke="#4a4a4a" stroke-width="0.3">9</text>
<text transform="translate(142.80,0) scale(0.751,1)" x="0" y="532.00" font-size="13.40" fill="#4a4a4a" stroke="#4a4a4a" stroke-width="0.3">1</text>
<text transform="translate(148.80,0) scale(0.751,1)" x="0" y="532.00" font-size="13.40" fill="#4a4a4a" stroke="#4a4a4a" stroke-width="0.3">0</text>
<text transform="translate(211.00,0) scale(0.751,1)" x="0" y="532.00" font-size="13.40" fill="#4a4a4a" stroke="#4a4a4a" stroke-width="0.3">1</text>
<text transform="translate(217.00,0) scale(0.751,1)" x="0" y="532.00" font-size="13.40" fill="#4a4a4a" stroke="#4a4a4a" stroke-width="0.3">1</text>
<text transform="translate(289.00,0) scale(0.751,1)" x="0" y="532.00" font-size="13.40" fill="#4a4a4a" stroke="#4a4a4a" stroke-width="0.3">1</text>
<text transform="translate(295.00,0) scale(0.751,1)" x="0" y="532.00" font-size="13.40" fill="#4a4a4a" stroke="#4a4a4a" stroke-width="0.3">2</text>
<text transform="translate(363.80,0) scale(0.751,1)" x="0" y="532.00" font-size="13.40" fill="#4a4a4a" stroke="#4a4a4a" stroke-width="0.3">2</text>
<text transform="translate(369.80,0) scale(0.751,1)" x="0" y="532.00" font-size="13.40" fill="#4a4a4a" stroke="#4a4a4a" stroke-width="0.3">0</text>
<text transform="translate(375.80,0) scale(0.751,1)" x="0" y="532.00" font-size="13.40" fill="#4a4a4a" stroke="#4a4a4a" stroke-width="0.3">2</text>
<text transform="translate(381.80,0) scale(0.751,1)" x="0" y="532.00" font-size="13.40" fill="#4a4a4a" stroke="#4a4a4a" stroke-width="0.3">3</text>
<path d="M388.30 533.20L392.70 522.00" stroke="#4a4a4a" stroke-width="0.95" fill="none"/>
<text transform="translate(393.80,0) scale(0.751,1)" x="0" y="532.00" font-size="13.40" fill="#4a4a4a" stroke="#4a4a4a" stroke-width="0.3">0</text>
<text transform="translate(399.80,0) scale(0.751,1)" x="0" y="532.00" font-size="13.40" fill="#4a4a4a" stroke="#4a4a4a" stroke-width="0.3">1</text>
<text transform="translate(435.00,0) scale(0.751,1)" x="0" y="532.00" font-size="13.40" fill="#4a4a4a" stroke="#4a4a4a" stroke-width="0.3">0</text>
<text transform="translate(441.00,0) scale(0.751,1)" x="0" y="532.00" font-size="13.40" fill="#4a4a4a" stroke="#4a4a4a" stroke-width="0.3">2</text>
<text transform="translate(505.90,0) scale(0.751,1)" x="0" y="532.00" font-size="13.40" fill="#4a4a4a" stroke="#4a4a4a" stroke-width="0.3">0</text>
<text transform="translate(511.90,0) scale(0.751,1)" x="0" y="532.00" font-size="13.40" fill="#4a4a4a" stroke="#4a4a4a" stroke-width="0.3">3</text>
<text transform="translate(585.30,0) scale(0.751,1)" x="0" y="532.00" font-size="13.40" fill="#4a4a4a" stroke="#4a4a4a" stroke-width="0.3">0</text>
<text transform="translate(591.30,0) scale(0.751,1)" x="0" y="532.00" font-size="13.40" fill="#4a4a4a" stroke="#4a4a4a" stroke-width="0.3">4</text>
<text transform="translate(656.00,0) scale(0.751,1)" x="0" y="532.00" font-size="13.40" fill="#4a4a4a" stroke="#4a4a4a" stroke-width="0.3">0</text>
<text transform="translate(662.00,0) scale(0.751,1)" x="0" y="532.00" font-size="13.40" fill="#4a4a4a" stroke="#4a4a4a" stroke-width="0.3">5</text>
<text transform="translate(727.50,0) scale(0.751,1)" x="0" y="532.00" font-size="13.40" fill="#4a4a4a" stroke="#4a4a4a" stroke-width="0.3">0</text>
<text transform="translate(733.50,0) scale(0.751,1)" x="0" y="532.00" font-size="13.40" fill="#4a4a4a" stroke="#4a4a4a" stroke-width="0.3">6</text>
<text transform="translate(802.10,0) scale(0.751,1)" x="0" y="532.00" font-size="13.40" fill="#4a4a4a" stroke="#4a4a4a" stroke-width="0.3">0</text>
<text transform="translate(808.10,0) scale(0.751,1)" x="0" y="532.00" font-size="13.40" fill="#4a4a4a" stroke="#4a4a4a" stroke-width="0.3">7</text>
<text transform="translate(877.10,0) scale(0.751,1)" x="0" y="532.00" font-size="13.40" fill="#4a4a4a" stroke="#4a4a4a" stroke-width="0.3">0</text>
<text transform="translate(883.10,0) scale(0.751,1)" x="0" y="532.00" font-size="13.40" fill="#4a4a4a" stroke="#4a4a4a" stroke-width="0.3">8</text>
<text transform="translate(929.50,0) scale(0.751,1)" x="0" y="532.00" font-size="13.40" fill="#4a4a4a" stroke="#4a4a4a" stroke-width="0.3">0</text>
<text transform="translate(935.50,0) scale(0.751,1)" x="0" y="532.00" font-size="13.40" fill="#4a4a4a" stroke="#4a4a4a" stroke-width="0.3">8</text>
<path d="M942.00 533.20L946.40 522.00" stroke="#4a4a4a" stroke-width="0.95" fill="none"/>
<text transform="translate(947.50,0) scale(0.751,1)" x="0" y="532.00" font-size="13.40" fill="#4a4a4a" stroke="#4a4a4a" stroke-width="0.3">0</text>
<text transform="translate(953.50,0) scale(0.751,1)" x="0" y="532.00" font-size="13.40" fill="#4a4a4a" stroke="#4a4a4a" stroke-width="0.3">4</text>
<rect x="0.00" y="0.00" width="1.40" height="537.00" fill="#b2b2b2"/>
</svg>
</body></html>
